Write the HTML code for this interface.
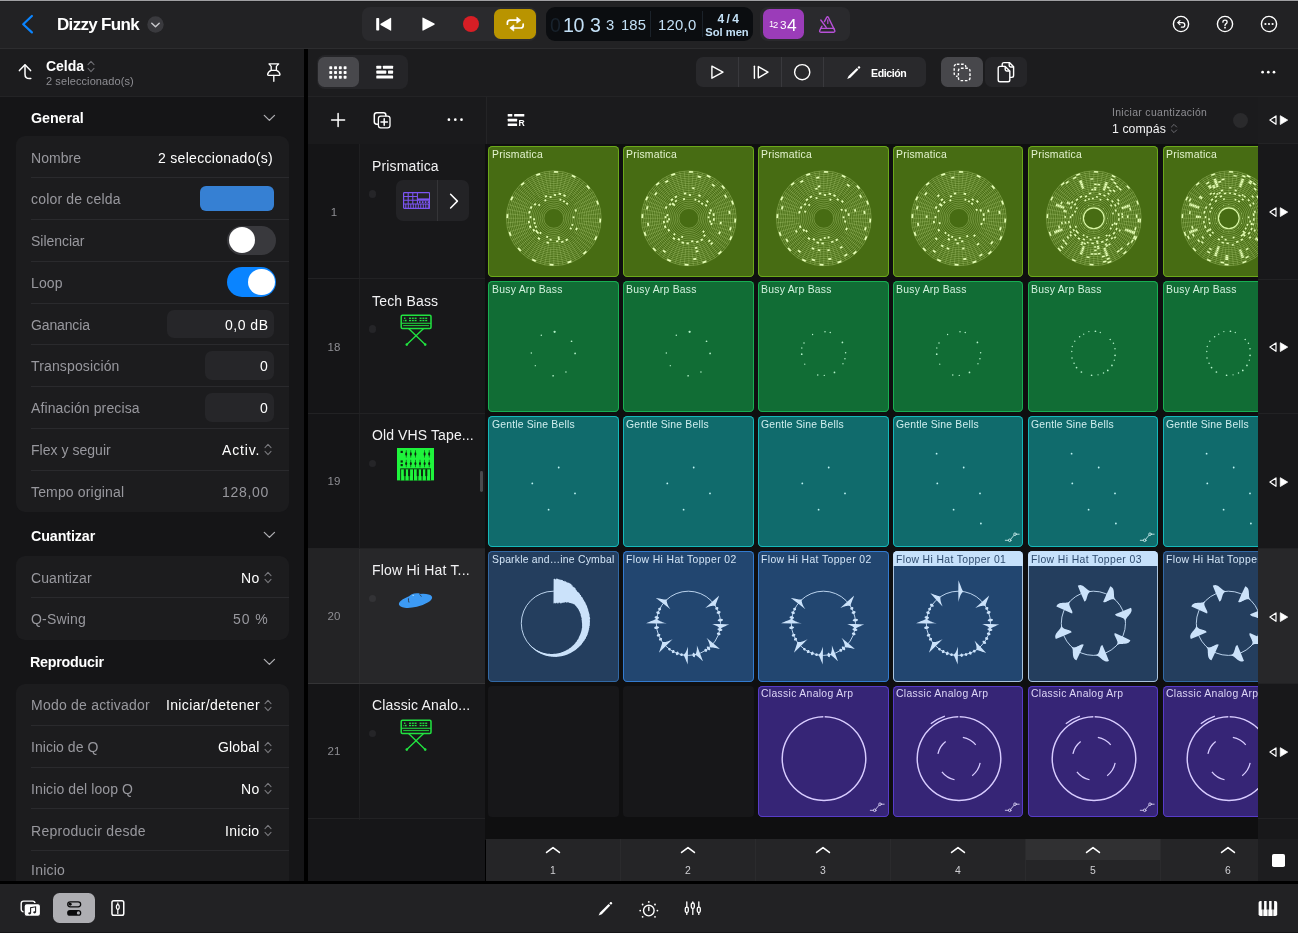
<!DOCTYPE html>
<html lang="es"><head><meta charset="utf-8"><title>Dizzy Funk</title>
<style>
html,body{margin:0;padding:0;background:#000;}
body{width:1298px;height:934px;overflow:hidden;font-family:"Liberation Sans",sans-serif;-webkit-font-smoothing:antialiased;}
#app{position:relative;width:1298px;height:934px;background:#000;overflow:hidden;}
#app div,#app span,#app svg,#app header,#app footer{position:absolute;display:block;box-sizing:border-box;}
.t{line-height:20px;height:20px;white-space:nowrap;will-change:transform;}
.cell{border-radius:4.5px;overflow:hidden;}
</style></head>
<body><div id="app">
<header class="topbar" style="left:0px;top:0px;width:1298px;height:48px;background:#222224;">
<div style="left:0px;top:0px;width:1298px;height:1px;background:#a0a0a3;"></div>
<div style="left:0px;top:1px;width:1298px;height:1px;background:#1d1d1f;"></div>
<svg style="left:20px;top:13px;" width="16" height="22" viewBox="0 0 16 22"><path d="M11.9 3 L3.2 11.2 L11.9 19.4" fill="none" stroke="#0a84ff" stroke-width="2.2" stroke-linecap="round" stroke-linejoin="round"/></svg>
<span class="t" style="top:14.8px;font-size:17px;color:#fff;font-weight:700;letter-spacing:-0.677px;left:57.3px;">Dizzy Funk</span>
<svg style="left:146.5px;top:15.7px;" width="17" height="17" viewBox="0 0 17 17"><circle cx="8.5" cy="8.5" r="8.2" fill="#3a3a3e"/><path d="M4.8 7.2 L8.5 10.7 L12.2 7.2" fill="none" stroke="#c8c8cc" stroke-width="1.5" stroke-linecap="round" stroke-linejoin="round"/></svg>
<div style="left:361.5px;top:7px;width:175.5px;height:34px;background:#2a2a2d;border-radius:8px;"></div>
<svg style="left:374px;top:15px;" width="20" height="18" viewBox="0 0 20 18"><rect x="2.2" y="3" width="3" height="12.6" rx="0.8" fill="#fff"/><path d="M17.2 3.4 L17.2 15.2 Q17.2 16 16.4 15.6 L6.6 9.9 Q6 9.3 6.6 8.7 L16.4 3 Q17.2 2.6 17.2 3.4Z" fill="#fff"/></svg>
<svg style="left:420px;top:15px;" width="18" height="18" viewBox="0 0 18 18"><path d="M2.4 3.2 Q2.4 2.2 3.3 2.7 L14.4 8.5 Q15.2 9.1 14.4 9.7 L3.3 15.6 Q2.4 16 2.4 15Z" fill="#fff"/></svg>
<div style="left:463.3px;top:16px;width:16.2px;height:16.2px;background:#d81e25;border-radius:50%;"></div>
<div style="left:494.2px;top:8.9px;width:42.2px;height:30.5px;background:#b99400;border-radius:6.5px;"></div>
<svg style="left:505px;top:14px;" width="22" height="20" viewBox="0 0 22 20"><g fill="none" stroke="#fff" stroke-width="1.7" stroke-linecap="round" stroke-linejoin="round"><path d="M2.4 10.2 V8.8 Q2.4 6.2 5 6.2 H12"/><path d="M18.2 10 V11.4 Q18.2 14 15.6 14 H8.6"/></g><path d="M11.8 3.1 L15.8 6.2 L11.8 9.3Z M8.8 10.9 L4.8 14 L8.8 17.1Z" fill="#fff" stroke="#fff" stroke-width="0.6" stroke-linejoin="round"/></svg>
<div style="left:545.5px;top:7.3px;width:207px;height:33.6px;background:#0b0d10;border-radius:9px;"></div>
<span class="t" style="top:14.8px;font-size:19.6px;color:#18222c;left:550.4px;">0</span>
<span class="t" style="top:14.8px;font-size:19.6px;color:#c3e0f6;letter-spacing:-0.4px;left:563.3px;">10</span>
<span class="t" style="top:14.8px;font-size:19.6px;color:#c3e0f6;left:589.8px;">3</span>
<span class="t" style="top:15.4px;font-size:14.8px;color:#c3e0f6;left:606.2px;">3</span>
<span class="t" style="top:15.4px;font-size:14.8px;color:#c3e0f6;letter-spacing:0.1px;left:621.3px;">185</span>
<div style="left:650px;top:11px;width:1px;height:26px;background:#1b222a;"></div>
<span class="t" style="top:15.4px;font-size:14.8px;color:#c3e0f6;letter-spacing:0.3px;left:658.4px;">120,0</span>
<div style="left:701.7px;top:11px;width:1px;height:26px;background:#1b222a;"></div>
<span class="t" style="top:8.5px;font-size:12px;color:#c3e0f6;font-weight:700;letter-spacing:-0.49px;left:577.65px;width:300px;text-align:center;">4 / 4</span>
<span class="t" style="top:22.4px;font-size:11.2px;color:#c3e0f6;font-weight:700;letter-spacing:-0.036px;left:577.38px;width:300px;text-align:center;">Sol men</span>
<div style="left:760px;top:7.3px;width:89.5px;height:33.6px;background:#2a2a2d;border-radius:8px;"></div>
<div style="left:762.7px;top:9px;width:41.6px;height:30.3px;background:#9b3cb9;border-radius:6.5px;"></div>
<span class="t" style="top:14.3px;font-size:9.2px;color:#fff;left:768.9px;">1</span>
<span class="t" style="top:14.5px;font-size:9.4px;color:#fff;left:773.2px;">2</span>
<span class="t" style="top:15.2px;font-size:11.8px;color:#fff;left:779.6px;">3</span>
<span class="t" style="top:15px;font-size:17.4px;color:#fff;left:787.4px;">4</span>
<svg style="left:817px;top:14px;" width="20" height="20" viewBox="0 0 20 20"><g fill="none" stroke="#b750d8" stroke-width="1.4" stroke-linejoin="round" stroke-linecap="round"><path d="M9.7 3.3 Q10.5 1.9 11.3 3.3 L17.7 16.4 Q18.3 18.2 16.6 18.2 H3.8 Q2.1 18.2 2.8 16.4 L4.9 12.2 M7.4 7.6 L9.7 3.3"/><path d="M3.6 14.4 H17"/><path d="M3.8 6 L9.2 13.4"/><path d="M10.8 5.8 V9.4" stroke-width="1.2"/></g></svg>
<svg style="left:1170.7px;top:14.3px;" width="20" height="20" viewBox="0 0 20 20"><circle cx="10" cy="10" r="7.6" fill="none" stroke="#fff" stroke-width="1.4"/><path d="M7.2 8.6 H11.4 Q13.8 8.6 13.8 10.9 Q13.8 13.2 11.4 13.2 H10.4" fill="none" stroke="#fff" stroke-width="1.3" stroke-linecap="round"/><path d="M8.9 6.6 L6.8 8.6 L8.9 10.6" fill="none" stroke="#fff" stroke-width="1.3" stroke-linecap="round" stroke-linejoin="round"/></svg>
<svg style="left:1214.6px;top:14.3px;" width="20" height="20" viewBox="0 0 20 20"><circle cx="10" cy="10" r="7.6" fill="none" stroke="#fff" stroke-width="1.4"/><path d="M7.9 8.2 Q7.9 6.2 10 6.2 Q12.1 6.2 12.1 8 Q12.1 9.2 10.9 9.9 Q10 10.4 10 11.5" fill="none" stroke="#fff" stroke-width="1.3" stroke-linecap="round"/><circle cx="10" cy="13.7" r="0.9" fill="#fff"/></svg>
<svg style="left:1258.6px;top:14.3px;" width="20" height="20" viewBox="0 0 20 20"><circle cx="10" cy="10" r="7.6" fill="none" stroke="#fff" stroke-width="1.4"/><circle cx="6.4" cy="10" r="1.1" fill="#fff"/><circle cx="10" cy="10" r="1.1" fill="#fff"/><circle cx="13.6" cy="10" r="1.1" fill="#fff"/></svg>
</header>
<div style="left:0;top:48px;width:1298px;height:1px;background:#2d2d2f;"></div>
<div class="insp-head" style="left:0px;top:49px;width:304px;height:47px;background:#1c1c1e;">
<svg style="left:16px;top:12px;" width="18" height="22" viewBox="0 0 18 22"><g fill="none" stroke="#fff" stroke-width="1.5" stroke-linecap="round" stroke-linejoin="round"><path d="M3.4 9.6 L9 3.8 L14.6 9.6"/><path d="M9 4.2 V13.2 Q9 17.6 13.4 17.6 H14.8"/></g></svg>
<span class="t" style="top:7.1px;font-size:14px;color:#fff;font-weight:700;letter-spacing:-0.031px;left:46px;">Celda</span>
<svg style="left:86.6px;top:10.6px;" width="8" height="13" viewBox="0 0 8 13"><path d="M1 4.6 L4 1.4 L7 4.6 M1 8.4 L4 11.6 L7 8.4" fill="none" stroke="#6c6c71" stroke-width="1.1" stroke-linecap="round" stroke-linejoin="round"/></svg>
<span class="t" style="top:22px;font-size:11px;color:#8e8e93;letter-spacing:0.093px;left:46px;">2 seleccionado(s)</span>
<svg style="left:264px;top:11px;" width="20" height="24" viewBox="0 0 20 24"><g fill="none" stroke="#fff" stroke-width="1.35" stroke-linecap="round" stroke-linejoin="round"><path d="M5 3.9 H14.7 L12.4 6.4 V10.3 Q15.7 11.5 16 14.6 Q16 15.3 15.3 15.3 H4.3 Q3.6 15.3 3.6 14.6 Q3.9 11.5 7.2 10.3 V6.4 Z"/><path d="M7.2 10.4 H12.4" stroke-width="1.1"/><path d="M9.8 15.5 V21.2"/></g></svg>
</div>
<div class="toolbar" style="left:308px;top:49px;width:990px;height:47px;background:#1c1c1e;">
<div style="left:8.5px;top:6.2px;width:91px;height:33.6px;background:#252528;border-radius:8px;"></div>
<div style="left:9.7px;top:8px;width:41.6px;height:30.3px;background:#48484c;border-radius:6.5px;"></div>
<svg style="left:21.4px;top:16.7px;" width="18" height="13" viewBox="0 0 18 13"><rect x="0.3" y="0.3" width="2.9" height="2.9" rx="0.7" fill="#fff"/><rect x="0.3" y="5.02" width="2.9" height="2.9" rx="0.7" fill="#fff"/><rect x="0.3" y="9.74" width="2.9" height="2.9" rx="0.7" fill="#fff"/><rect x="5.08" y="0.3" width="2.9" height="2.9" rx="0.7" fill="#fff"/><rect x="5.08" y="5.02" width="2.9" height="2.9" rx="0.7" fill="#fff"/><rect x="5.08" y="9.74" width="2.9" height="2.9" rx="0.7" fill="#fff"/><rect x="9.86" y="0.3" width="2.9" height="2.9" rx="0.7" fill="#fff"/><rect x="9.86" y="5.02" width="2.9" height="2.9" rx="0.7" fill="#fff"/><rect x="9.86" y="9.74" width="2.9" height="2.9" rx="0.7" fill="#fff"/><rect x="14.64" y="0.3" width="2.9" height="2.9" rx="0.7" fill="#fff"/><rect x="14.64" y="5.02" width="2.9" height="2.9" rx="0.7" fill="#fff"/><rect x="14.64" y="9.74" width="2.9" height="2.9" rx="0.7" fill="#fff"/></svg>
<svg style="left:68px;top:16px;" width="18" height="14" viewBox="0 0 18 14"><g fill="#fff"><rect x="0.3" y="0.7" width="5" height="3.1" rx="0.6"/><rect x="6.9" y="0.7" width="10.2" height="3.1" rx="0.6"/><rect x="0.3" y="5.6" width="10" height="3.1" rx="0.6"/><rect x="12" y="5.6" width="5.1" height="3.1" rx="0.6"/><rect x="0.3" y="10.4" width="16.8" height="3.1" rx="0.6"/></g></svg>
<div style="left:387.9px;top:8px;width:230.3px;height:30.4px;background:#29292c;border-radius:7px;"></div>
<div style="left:429.8px;top:8px;width:1.4px;height:30.4px;background:#39393d;"></div>
<div style="left:472.5px;top:8px;width:1.4px;height:30.4px;background:#39393d;"></div>
<div style="left:515.1px;top:8px;width:1.4px;height:30.4px;background:#39393d;"></div>
<svg style="left:400px;top:13px;" width="20" height="20" viewBox="0 0 20 20"><path d="M3.9 4.2 V16.2 L15 10.2Z" fill="none" stroke="#fff" stroke-width="1.4" stroke-linejoin="round" stroke-linecap="round"/></svg>
<svg style="left:442px;top:13px;" width="22" height="20" viewBox="0 0 22 20"><path d="M4.4 4.3 V16.2" fill="none" stroke="#fff" stroke-width="1.4" stroke-linejoin="round" stroke-linecap="round"/><path d="M8.3 4.6 V15.8 L18 10.2Z" fill="none" stroke="#fff" stroke-width="1.4" stroke-linejoin="round" stroke-linecap="round"/></svg>
<svg style="left:484px;top:13px;" width="20" height="20" viewBox="0 0 20 20"><circle cx="10.2" cy="10.2" r="7.6" fill="none" stroke="#fff" stroke-width="1.4" stroke-linejoin="round" stroke-linecap="round"/></svg>
<svg style="left:537px;top:14px;" width="18" height="18" viewBox="0 0 18 18"><path d="M2.2 16.1 L3.6 13 L11.8 5 L13.4 6.6 L5.3 14.7Z" fill="#fff"/><circle cx="14" cy="4.4" r="1.2" fill="#fff"/></svg>
<span class="t" style="top:13.5px;font-size:10.6px;color:#fff;font-weight:700;letter-spacing:-0.42px;left:562.6px;">Edición</span>
<div style="left:633.2px;top:8px;width:41.7px;height:30.3px;background:#47474b;border-radius:6.5px;"></div>
<div style="left:677px;top:8px;width:41.7px;height:30.3px;background:#252528;border-radius:6.5px;"></div>
<svg style="left:643px;top:12px;" width="22" height="22" viewBox="0 0 22 22"><g fill="none" stroke="#fff" stroke-width="1.4" stroke-dasharray="2.6 1.7"><rect x="3.2" y="3.2" width="11.6" height="12" rx="2.6"/></g><rect x="6.6" y="6.6" width="13" height="13.4" rx="2.8" fill="#47474b"/><g fill="none" stroke="#fff" stroke-width="1.4" stroke-dasharray="2.6 1.7"><rect x="7.4" y="7.2" width="11.6" height="12.4" rx="2.6"/></g></svg>
<svg style="left:687px;top:11px;" width="22" height="24" viewBox="0 0 22 24"><g fill="#252528" stroke="#fff" stroke-width="1.4" stroke-linejoin="round"><path d="M9 2.6 H14.4 L18.6 6.8 V15.6 Q18.6 17.4 16.8 17.4 H9 Q7.2 17.4 7.2 15.6 V4.4 Q7.2 2.6 9 2.6Z"/><path d="M14.2 2.8 V5.6 Q14.2 7 15.6 7 H18.4" fill="none"/><path d="M5 6.4 H10.2 L14.8 11 V20 Q14.8 21.8 13 21.8 H5 Q3.2 21.8 3.2 20 V8.2 Q3.2 6.4 5 6.4Z"/><path d="M10.2 6.6 V9.6 Q10.2 11 11.6 11 H14.6" fill="none"/></g></svg>
<svg style="left:951px;top:19px;" width="20" height="8" viewBox="0 0 20 8"><circle cx="3.6" cy="4.2" r="1.35" fill="#fff"/><circle cx="9.3" cy="4.2" r="1.35" fill="#fff"/><circle cx="15" cy="4.2" r="1.35" fill="#fff"/></svg>
</div>
<div style="left:0;top:96px;width:304px;height:1px;background:#232325;"></div>
<div style="left:308px;top:96px;width:990px;height:1px;background:#232325;"></div>
<div class="insp" style="left:0px;top:97px;width:304px;height:784px;background:#151517;overflow:hidden;">
<span class="t" style="top:11px;font-size:14.3px;color:#fff;font-weight:700;letter-spacing:-0.075px;left:30.5px;">General</span>
<svg style="left:262px;top:15.6px;" width="15" height="10" viewBox="0 0 15 10"><path d="M2.3 2.4 L7.4 7.4 L12.5 2.4" fill="none" stroke="#aeaeb2" stroke-width="1.3" stroke-linecap="round" stroke-linejoin="round"/></svg>
<div class="grp" style="left:15.5px;top:39px;width:273.5px;height:375.75px;background:#1c1c1e;border-radius:9px;">
<span class="t" style="top:11.68px;font-size:14px;color:#98989e;letter-spacing:0.061px;left:15.1px;">Nombre</span>
<span class="t" style="top:11.68px;font-size:14px;color:#fff;letter-spacing:0.31px;right:15.69px;">2 seleccionado(s)</span>
<div style="left:15.1px;top:41.25px;width:258.4px;height:1px;background:#2a2a2d;"></div>
<span class="t" style="top:53.43px;font-size:14px;color:#98989e;letter-spacing:0.179px;left:15.1px;">color de celda</span>
<div style="left:184.7px;top:50.05px;width:73.8px;height:25.2px;background:#3680d3;border-radius:6px;"></div>
<div style="left:15.1px;top:83px;width:258.4px;height:1px;background:#2a2a2d;"></div>
<span class="t" style="top:95.18px;font-size:14px;color:#98989e;letter-spacing:-0.025px;left:15.1px;">Silenciar</span>
<div style="left:211.9px;top:89.5px;width:48.5px;height:29.6px;background:#39393d;border-radius:15px;"></div>
<div style="left:213.2px;top:90.9px;width:26.6px;height:26.6px;background:#fff;border-radius:50%;"></div>
<div style="left:15.1px;top:124.75px;width:258.4px;height:1px;background:#2a2a2d;"></div>
<span class="t" style="top:136.93px;font-size:14px;color:#98989e;letter-spacing:0.115px;left:15.1px;">Loop</span>
<div style="left:211.9px;top:131.25px;width:48.5px;height:29.6px;background:#0a84ff;border-radius:15px;"></div>
<div style="left:232.5px;top:132.65px;width:26.6px;height:26.6px;background:#fff;border-radius:50%;"></div>
<div style="left:15.1px;top:166.5px;width:258.4px;height:1px;background:#2a2a2d;"></div>
<span class="t" style="top:178.68px;font-size:14px;color:#98989e;letter-spacing:-0.134px;left:15.1px;">Ganancia</span>
<div style="left:151.7px;top:173.6px;width:106.8px;height:28.6px;background:#262629;border-radius:7px;"></div>
<span class="t" style="top:178.68px;font-size:14px;color:#fff;letter-spacing:0.503px;right:20.9px;">0,0 dB</span>
<div style="left:15.1px;top:208.25px;width:258.4px;height:1px;background:#2a2a2d;"></div>
<span class="t" style="top:220.43px;font-size:14px;color:#98989e;letter-spacing:0.147px;left:15.1px;">Transposición</span>
<div style="left:189.5px;top:215.35px;width:69px;height:28.6px;background:#262629;border-radius:7px;"></div>
<span class="t" style="top:220.43px;font-size:14px;color:#fff;right:21.4px;">0</span>
<div style="left:15.1px;top:250px;width:258.4px;height:1px;background:#2a2a2d;"></div>
<span class="t" style="top:262.18px;font-size:14px;color:#98989e;letter-spacing:0.123px;left:15.1px;">Afinación precisa</span>
<div style="left:189.5px;top:257.1px;width:69px;height:28.6px;background:#262629;border-radius:7px;"></div>
<span class="t" style="top:262.18px;font-size:14px;color:#fff;right:21.4px;">0</span>
<div style="left:15.1px;top:291.75px;width:258.4px;height:1px;background:#2a2a2d;"></div>
<span class="t" style="top:303.93px;font-size:14px;color:#98989e;letter-spacing:0.028px;left:15.1px;">Flex y seguir</span>
<span class="t" style="top:303.93px;font-size:14px;color:#fff;letter-spacing:0.859px;right:28.94px;">Activ.</span>
<svg style="left:248.9px;top:307.43px;" width="8" height="13" viewBox="0 0 8 13"><path d="M1 4.6 L4 1.4 L7 4.6 M1 8.4 L4 11.6 L7 8.4" fill="none" stroke="#77777c" stroke-width="1.1" stroke-linecap="round" stroke-linejoin="round"/></svg>
<div style="left:15.1px;top:333.5px;width:258.4px;height:1px;background:#2a2a2d;"></div>
<span class="t" style="top:345.68px;font-size:14px;color:#98989e;letter-spacing:0.157px;left:15.1px;">Tempo original</span>
<span class="t" style="top:345.68px;font-size:14px;color:#98989e;letter-spacing:0.714px;right:20.29px;">128,00</span>
</div>
<span class="t" style="top:428.7px;font-size:14.3px;color:#fff;font-weight:700;letter-spacing:-0.118px;left:30.5px;">Cuantizar</span>
<svg style="left:262px;top:433.4px;" width="15" height="10" viewBox="0 0 15 10"><path d="M2.3 2.4 L7.4 7.4 L12.5 2.4" fill="none" stroke="#aeaeb2" stroke-width="1.3" stroke-linecap="round" stroke-linejoin="round"/></svg>
<div class="grp" style="left:15.5px;top:459px;width:273.5px;height:83.5px;background:#1c1c1e;border-radius:9px;">
<span class="t" style="top:11.67px;font-size:14px;color:#98989e;letter-spacing:0.085px;left:15.1px;">Cuantizar</span>
<span class="t" style="top:11.67px;font-size:14px;color:#fff;letter-spacing:0.494px;right:29.31px;">No</span>
<svg style="left:248.9px;top:15.17px;" width="8" height="13" viewBox="0 0 8 13"><path d="M1 4.6 L4 1.4 L7 4.6 M1 8.4 L4 11.6 L7 8.4" fill="none" stroke="#77777c" stroke-width="1.1" stroke-linecap="round" stroke-linejoin="round"/></svg>
<div style="left:15.1px;top:41.25px;width:258.4px;height:1px;background:#2a2a2d;"></div>
<span class="t" style="top:53.42px;font-size:14px;color:#98989e;letter-spacing:0.169px;left:15.1px;">Q-Swing</span>
<span class="t" style="top:53.42px;font-size:14px;color:#98989e;letter-spacing:0.893px;right:20.11px;">50 %</span>
</div>
<span class="t" style="top:555.2px;font-size:14.3px;color:#fff;font-weight:700;letter-spacing:-0.252px;left:30.2px;">Reproducir</span>
<svg style="left:262px;top:560.4px;" width="15" height="10" viewBox="0 0 15 10"><path d="M2.3 2.4 L7.4 7.4 L12.5 2.4" fill="none" stroke="#aeaeb2" stroke-width="1.3" stroke-linecap="round" stroke-linejoin="round"/></svg>
<div class="grp" style="left:15.5px;top:586.6px;width:273.5px;height:197.4px;background:#1c1c1e;border-radius:9px;border-bottom-left-radius:0;border-bottom-right-radius:0;">
<span class="t" style="top:11.67px;font-size:14px;color:#98989e;letter-spacing:0.22px;left:15.1px;">Modo de activador</span>
<span class="t" style="top:11.67px;font-size:14px;color:#fff;letter-spacing:0.349px;right:29.45px;">Iniciar/detener</span>
<svg style="left:248.9px;top:15.17px;" width="8" height="13" viewBox="0 0 8 13"><path d="M1 4.6 L4 1.4 L7 4.6 M1 8.4 L4 11.6 L7 8.4" fill="none" stroke="#77777c" stroke-width="1.1" stroke-linecap="round" stroke-linejoin="round"/></svg>
<div style="left:15.1px;top:41.25px;width:258.4px;height:1px;background:#2a2a2d;"></div>
<span class="t" style="top:53.42px;font-size:14px;color:#98989e;letter-spacing:0.036px;left:15.1px;">Inicio de Q</span>
<span class="t" style="top:53.42px;font-size:14px;color:#fff;letter-spacing:0.186px;right:29.61px;">Global</span>
<svg style="left:248.9px;top:56.92px;" width="8" height="13" viewBox="0 0 8 13"><path d="M1 4.6 L4 1.4 L7 4.6 M1 8.4 L4 11.6 L7 8.4" fill="none" stroke="#77777c" stroke-width="1.1" stroke-linecap="round" stroke-linejoin="round"/></svg>
<div style="left:15.1px;top:83px;width:258.4px;height:1px;background:#2a2a2d;"></div>
<span class="t" style="top:95.17px;font-size:14px;color:#98989e;letter-spacing:0.1px;left:15.1px;">Inicio del loop Q</span>
<span class="t" style="top:95.17px;font-size:14px;color:#fff;letter-spacing:0.494px;right:29.31px;">No</span>
<svg style="left:248.9px;top:98.67px;" width="8" height="13" viewBox="0 0 8 13"><path d="M1 4.6 L4 1.4 L7 4.6 M1 8.4 L4 11.6 L7 8.4" fill="none" stroke="#77777c" stroke-width="1.1" stroke-linecap="round" stroke-linejoin="round"/></svg>
<div style="left:15.1px;top:124.75px;width:258.4px;height:1px;background:#2a2a2d;"></div>
<span class="t" style="top:136.92px;font-size:14px;color:#98989e;letter-spacing:0.272px;left:15.1px;">Reproducir desde</span>
<span class="t" style="top:136.92px;font-size:14px;color:#fff;letter-spacing:0.283px;right:29.52px;">Inicio</span>
<svg style="left:248.9px;top:140.42px;" width="8" height="13" viewBox="0 0 8 13"><path d="M1 4.6 L4 1.4 L7 4.6 M1 8.4 L4 11.6 L7 8.4" fill="none" stroke="#77777c" stroke-width="1.1" stroke-linecap="round" stroke-linejoin="round"/></svg>
<div style="left:15.1px;top:166.5px;width:258.4px;height:1px;background:#2a2a2d;"></div>
<span class="t" style="top:176.07px;font-size:14px;color:#98989e;letter-spacing:0.242px;left:15.1px;">Inicio</span>
<div style="left:15.1px;top:208.25px;width:258.4px;height:1px;background:#2a2a2d;"></div>
<span class="t" style="top:220.42px;font-size:14px;color:#98989e;left:15.1px;"></span>
</div>
</div>
<div class="gridhead" style="left:308px;top:97px;width:990px;height:47px;background:#1b1b1d;">
<div style="left:0px;top:0px;width:178px;height:47px;background:#1a1a1c;"></div>
<div style="left:177.6px;top:0px;width:1px;height:47px;background:#242426;"></div>
<div style="left:0px;top:46.6px;width:950px;height:1.4px;background:#121213;"></div>
<svg style="left:22px;top:15px;" width="16" height="16" viewBox="0 0 16 16"><path d="M8.1 1.6 V14.6 M1.6 8.1 H14.6" fill="none" stroke="#fff" stroke-width="1.5" stroke-linecap="round" stroke-linejoin="round"/></svg>
<svg style="left:64px;top:13px;" width="20" height="20" viewBox="0 0 20 20"><rect x="2.3" y="2.8" width="11.6" height="11.4" rx="2.4" fill="none" stroke="#fff" stroke-width="1.5" stroke-linecap="round" stroke-linejoin="round" stroke-width="1.3"/><rect x="6.4" y="6.2" width="11.6" height="11.6" rx="2.4" fill="#1a1a1c" stroke="#fff" stroke-width="1.3"/><path d="M12.2 8.8 V15.2 M9 12 H15.4" fill="none" stroke="#fff" stroke-width="1.5" stroke-linecap="round" stroke-linejoin="round" stroke-width="1.3"/></svg>
<svg style="left:137px;top:19px;" width="20" height="8" viewBox="0 0 20 8"><circle cx="3.9" cy="3.7" r="1.35" fill="#fff"/><circle cx="10.3" cy="3.7" r="1.35" fill="#fff"/><circle cx="16.5" cy="3.7" r="1.35" fill="#fff"/></svg>
<svg style="left:199px;top:16px;will-change:transform;" width="20" height="14" viewBox="0 0 20 14"><g fill="#fff"><rect x="0.7" y="1" width="4.6" height="2.5" rx="0.5"/><rect x="7.1" y="1" width="10.2" height="2.5" rx="0.5"/><rect x="0.7" y="5.8" width="9.4" height="2.6" rx="0.5"/><rect x="0.7" y="10.4" width="9.4" height="2.6" rx="0.5"/></g><text x="11.4" y="13.1" font-family="Liberation Sans, sans-serif" font-weight="700" font-size="8.6" fill="#fff">R</text></svg>
<span class="t" style="top:5.5px;font-size:10.4px;color:#8e8e93;letter-spacing:0.343px;left:804.3px;">Iniciar cuantización</span>
<span class="t" style="top:21.5px;font-size:12.3px;color:#f2f2f4;letter-spacing:0.067px;left:804.3px;">1 compás</span>
<svg style="left:861.6px;top:25.6px;" width="8" height="11" viewBox="0 0 8 11"><path d="M1.4 4 L4 1.4 L6.6 4 M1.4 7 L4 9.6 L6.6 7" fill="none" stroke="#6c6c71" stroke-width="1" stroke-linecap="round" stroke-linejoin="round"/></svg>
<div style="left:924.9px;top:15.6px;width:15.2px;height:15.2px;background:#2a2a2c;border-radius:50%;"></div>
</div>
<div class="tracks" style="left:308px;top:144px;width:177px;height:737px;background:#18181a;">
<div style="left:0px;top:0px;width:51.5px;height:675px;background:#151517;"></div>
<div style="left:0px;top:675px;width:177px;height:62px;background:#161618;"></div>
<div style="left:51.3px;top:0px;width:1px;height:676px;background:#1f1f21;"></div>
<div class="track" style="left:0px;top:0px;width:177px;height:134.94px;">
<div style="left:0px;top:134.2px;width:177px;height:1px;background:#222224;"></div>
<span class="t" style="top:57.6px;font-size:11.5px;color:#8e8e93;left:-124px;width:300px;text-align:center;">1</span>
<span class="t" style="top:11.8px;font-size:14px;color:#f2f2f4;letter-spacing:0.138px;left:64.2px;">Prismatica</span>
<div style="left:60.8px;top:46.2px;width:7.4px;height:7.4px;background:#252528;border-radius:50%;"></div>
<div style="left:87.8px;top:36px;width:73px;height:41.3px;background:#232326;border-radius:7px;"></div>
<div style="left:129.2px;top:36px;width:1px;height:41.3px;background:#353538;"></div>
<svg style="left:95px;top:47.6px;" width="27.2" height="17" viewBox="0 0 27.2 17"><rect x="0.6" y="0.6" width="26" height="15.8" rx="0.8" fill="none" stroke="#7c55f3" stroke-width="1.2"/><g stroke="#7c55f3" stroke-width="1.05" fill="none"><path d="M0.6 4.4 H14.2 M0.6 8.2 H27 M0.6 12 H27 M5.2 0.6 V12 M9.8 0.6 V12 M14.4 0.6 V12"/><path d="M14.4 7.2 H27" stroke-width="1.6"/></g><g fill="#7c55f3"><rect x="2.3" y="12" width="1" height="4.4"/><rect x="4.8" y="12" width="1" height="4.4"/><rect x="7.3" y="12" width="1" height="4.4"/><rect x="9.8" y="12" width="1" height="4.4"/><rect x="12.3" y="12" width="1" height="4.4"/><rect x="14.8" y="12" width="1" height="4.4"/><rect x="17.3" y="12" width="1" height="4.4"/><rect x="19.8" y="12" width="1" height="4.4"/><rect x="22.3" y="12" width="1" height="4.4"/><rect x="24.8" y="12" width="1" height="4.4"/><rect x="16" y="9.2" width="1.6" height="1.8"/><rect x="18.9" y="9.2" width="1.6" height="1.8"/><rect x="21.8" y="9.2" width="1.6" height="1.8"/><rect x="24.7" y="9.2" width="1.6" height="1.8"/></g></svg>
<svg style="left:138px;top:47px;" width="16" height="20" viewBox="0 0 16 20"><path d="M4.6 3.2 L11.4 10.1 L4.6 17" fill="none" stroke="#fff" stroke-width="1.5" stroke-linecap="round" stroke-linejoin="round"/></svg>
</div>
<div class="track" style="left:0px;top:134.94px;width:177px;height:134.94px;">
<div style="left:0px;top:134.2px;width:177px;height:1px;background:#222224;"></div>
<span class="t" style="top:57.6px;font-size:11.5px;color:#8e8e93;left:-124px;width:300px;text-align:center;">18</span>
<span class="t" style="top:11.58px;font-size:14px;color:#f2f2f4;letter-spacing:0.188px;left:64.2px;">Tech Bass</span>
<div style="left:60.8px;top:46.2px;width:7.4px;height:7.4px;background:#252528;border-radius:50%;"></div>
<svg style="left:91.7px;top:35.4px;" width="33" height="33" viewBox="0 0 33 33"><g fill="none" stroke="#21e340" stroke-width="1.5" stroke-linecap="round"><rect x="1.2" y="1.2" width="29.8" height="13.2" rx="1.2"/><path d="M1.6 9.2 H30.6" stroke-width="1.1"/><path d="M3.6 11.6 H28.6" stroke-width="0.9"/><path d="M8.6 14.6 L25.2 30.4 M23.6 14.6 L6.8 30.4" stroke-width="1.35"/></g><g fill="#21e340"><circle cx="6.8" cy="30.6" r="1.3"/><circle cx="25.2" cy="30.6" r="1.3"/><rect x="4" y="3.6" width="1.4" height="1.3"/><rect x="5" y="5.8" width="1.6" height="1.5"/><rect x="3.4" y="6.2" width="1" height="1"/><rect x="9" y="3.6" width="2" height="1.3"/><rect x="9" y="5.9" width="2" height="1.3"/><rect x="11.8" y="3.6" width="2" height="1.3"/><rect x="11.8" y="5.9" width="2" height="1.3"/><rect x="14.6" y="3.6" width="2" height="1.3"/><rect x="14.6" y="5.9" width="2" height="1.3"/><rect x="19.6" y="3.6" width="2" height="1.3"/><rect x="19.6" y="5.9" width="2" height="1.3"/><rect x="22.4" y="3.6" width="2" height="1.3"/><rect x="22.4" y="5.9" width="2" height="1.3"/><rect x="25.2" y="3.6" width="2" height="1.3"/><rect x="25.2" y="5.9" width="2" height="1.3"/></g></svg>
</div>
<div class="track" style="left:0px;top:269.88px;width:177px;height:134.94px;">
<div style="left:0px;top:134.2px;width:177px;height:1px;background:#222224;"></div>
<span class="t" style="top:57.6px;font-size:11.5px;color:#8e8e93;left:-124px;width:300px;text-align:center;">19</span>
<span class="t" style="top:11.36px;font-size:14px;color:#f2f2f4;letter-spacing:0.111px;left:64.2px;">Old VHS Tape...</span>
<div style="left:60.8px;top:46.2px;width:7.4px;height:7.4px;background:#252528;border-radius:50%;"></div>
<svg style="left:89px;top:34.4px;" width="37" height="32.4" viewBox="0 0 37 32.4"><rect x="0" y="0" width="37" height="32.4" fill="#1ff43c"/><rect x="3.6" y="2.8000000000000003" width="2.2" height="2.2" fill="#0c2a10"/><rect x="8.85" y="2.2" width="0.7" height="7.4" fill="#0c2a10" opacity="0.8"/><ellipse cx="9.2" cy="6.0" rx="1" ry="1.7" fill="#0c2a10"/><rect x="13.450000000000001" y="2.2" width="0.7" height="7.4" fill="#0c2a10" opacity="0.8"/><ellipse cx="13.8" cy="6.0" rx="1" ry="1.7" fill="#0c2a10"/><rect x="18.049999999999997" y="2.2" width="0.7" height="7.4" fill="#0c2a10" opacity="0.8"/><ellipse cx="18.4" cy="6.0" rx="1" ry="1.7" fill="#0c2a10"/><rect x="27.25" y="2.2" width="0.7" height="7.4" fill="#0c2a10" opacity="0.8"/><ellipse cx="27.6" cy="6.0" rx="1" ry="1.7" fill="#0c2a10"/><rect x="31.85" y="2.2" width="0.7" height="7.4" fill="#0c2a10" opacity="0.8"/><ellipse cx="32.2" cy="6.0" rx="1" ry="1.7" fill="#0c2a10"/><rect x="3.6" y="12.4" width="2.2" height="2.2" fill="#0c2a10"/><rect x="3.6" y="16.0" width="2.2" height="2.2" fill="#0c2a10"/><rect x="8.85" y="11.8" width="0.7" height="7.4" fill="#0c2a10" opacity="0.8"/><ellipse cx="9.2" cy="15.600000000000001" rx="1" ry="1.7" fill="#0c2a10"/><rect x="13.450000000000001" y="11.8" width="0.7" height="7.4" fill="#0c2a10" opacity="0.8"/><ellipse cx="13.8" cy="15.600000000000001" rx="1" ry="1.7" fill="#0c2a10"/><rect x="18.049999999999997" y="11.8" width="0.7" height="7.4" fill="#0c2a10" opacity="0.8"/><ellipse cx="18.4" cy="15.600000000000001" rx="1" ry="1.7" fill="#0c2a10"/><rect x="22.65" y="11.8" width="0.7" height="7.4" fill="#0c2a10" opacity="0.8"/><ellipse cx="23" cy="15.600000000000001" rx="1" ry="1.7" fill="#0c2a10"/><rect x="27.25" y="11.8" width="0.7" height="7.4" fill="#0c2a10" opacity="0.8"/><ellipse cx="27.6" cy="15.600000000000001" rx="1" ry="1.7" fill="#0c2a10"/><rect x="31.85" y="11.8" width="0.7" height="7.4" fill="#0c2a10" opacity="0.8"/><ellipse cx="32.2" cy="15.600000000000001" rx="1" ry="1.7" fill="#0c2a10"/><rect x="3.2" y="20.4" width="30.8" height="12" fill="#0c2a10"/><rect x="4.1" y="21.3" width="3.3" height="11.1" fill="#1ff43c"/><rect x="8.4" y="21.3" width="3.3" height="11.1" fill="#1ff43c"/><rect x="12.7" y="21.3" width="3.3" height="11.1" fill="#1ff43c"/><rect x="17" y="21.3" width="3.3" height="11.1" fill="#1ff43c"/><rect x="21.3" y="21.3" width="3.3" height="11.1" fill="#1ff43c"/><rect x="25.6" y="21.3" width="3.3" height="11.1" fill="#1ff43c"/><rect x="29.9" y="21.3" width="3.3" height="11.1" fill="#1ff43c"/><rect x="6.8" y="21.3" width="2" height="6.8" fill="#0c2a10"/><rect x="11.1" y="21.3" width="2" height="6.8" fill="#0c2a10"/><rect x="19.7" y="21.3" width="2" height="6.8" fill="#0c2a10"/><rect x="24" y="21.3" width="2" height="6.8" fill="#0c2a10"/><rect x="28.3" y="21.3" width="2" height="6.8" fill="#0c2a10"/></svg>
</div>
<div class="track" style="left:0px;top:404.82px;width:177px;height:134.94px;background:#272729;">
<div style="left:0px;top:0px;width:51.5px;height:134.94px;background:#232325;"></div>
<div style="left:51.3px;top:0px;width:1px;height:134.94px;background:#2c2c2e;"></div>
<div style="left:0px;top:134.2px;width:177px;height:1px;background:#343436;"></div>
<span class="t" style="top:57.6px;font-size:11.5px;color:#8e8e93;left:-124px;width:300px;text-align:center;">20</span>
<span class="t" style="top:11.14px;font-size:14px;color:#f2f2f4;letter-spacing:0.203px;left:64.2px;">Flow Hi Hat T...</span>
<div style="left:60.8px;top:46.2px;width:7.4px;height:7.4px;background:#333336;border-radius:50%;"></div>
<svg style="left:88px;top:38px;" width="40" height="28" viewBox="0 0 40 28"><g transform="rotate(-13 19.5 13.8)"><ellipse cx="19.5" cy="13.8" rx="17" ry="6.1" fill="#3c9af4"/><ellipse cx="19.8" cy="9.4" rx="6.4" ry="3" fill="#3c9af4"/><path d="M13.2 9.8 Q12.4 12.4 12.8 14 M24.8 8.2 Q26 9.8 26.2 11" stroke="#252527" stroke-width="0.7" fill="none"/><circle cx="18.4" cy="8" r="0.55" fill="#dff"/></g></svg>
</div>
<div class="track" style="left:0px;top:539.76px;width:177px;height:134.94px;">
<div style="left:0px;top:134.2px;width:177px;height:1px;background:#222224;"></div>
<span class="t" style="top:57.6px;font-size:11.5px;color:#8e8e93;left:-124px;width:300px;text-align:center;">21</span>
<span class="t" style="top:10.92px;font-size:14px;color:#f2f2f4;letter-spacing:0.165px;left:64.2px;">Classic Analo...</span>
<div style="left:60.8px;top:46.2px;width:7.4px;height:7.4px;background:#252528;border-radius:50%;"></div>
<svg style="left:91.7px;top:35.4px;" width="33" height="33" viewBox="0 0 33 33"><g fill="none" stroke="#21e340" stroke-width="1.5" stroke-linecap="round"><rect x="1.2" y="1.2" width="29.8" height="13.2" rx="1.2"/><path d="M1.6 9.2 H30.6" stroke-width="1.1"/><path d="M3.6 11.6 H28.6" stroke-width="0.9"/><path d="M8.6 14.6 L25.2 30.4 M23.6 14.6 L6.8 30.4" stroke-width="1.35"/></g><g fill="#21e340"><circle cx="6.8" cy="30.6" r="1.3"/><circle cx="25.2" cy="30.6" r="1.3"/><rect x="4" y="3.6" width="1.4" height="1.3"/><rect x="5" y="5.8" width="1.6" height="1.5"/><rect x="3.4" y="6.2" width="1" height="1"/><rect x="9" y="3.6" width="2" height="1.3"/><rect x="9" y="5.9" width="2" height="1.3"/><rect x="11.8" y="3.6" width="2" height="1.3"/><rect x="11.8" y="5.9" width="2" height="1.3"/><rect x="14.6" y="3.6" width="2" height="1.3"/><rect x="14.6" y="5.9" width="2" height="1.3"/><rect x="19.6" y="3.6" width="2" height="1.3"/><rect x="19.6" y="5.9" width="2" height="1.3"/><rect x="22.4" y="3.6" width="2" height="1.3"/><rect x="22.4" y="5.9" width="2" height="1.3"/><rect x="25.2" y="3.6" width="2" height="1.3"/><rect x="25.2" y="5.9" width="2" height="1.3"/></g></svg>
</div>
<div style="left:172.2px;top:327.3px;width:2.7px;height:21px;background:#4a4a4d;border-radius:1.4px;"></div>
</div>
<div class="cells" style="left:485px;top:144px;width:773px;height:696px;background:#0f0f10;overflow:hidden;">
<div class="cell" style="left:3.15px;top:2px;width:130.5px;height:130.8px;background:#476c13;box-shadow:inset 0 0 0 1px #6ba81a;">
<svg style="left:0;top:0" width="130.5" height="130.8" viewBox="0 0 130.5 130.8"><g fill="none" stroke="#d4f09a"><g stroke-opacity="0.4" stroke-width="0.8"><circle cx="65.8" cy="72.3" r="10"/><circle cx="65.8" cy="72.3" r="11.78"/><circle cx="65.8" cy="72.3" r="13.56"/><circle cx="65.8" cy="72.3" r="15.34"/><circle cx="65.8" cy="72.3" r="17.12"/><circle cx="65.8" cy="72.3" r="18.9"/><circle cx="65.8" cy="72.3" r="20.68"/><circle cx="65.8" cy="72.3" r="22.46"/><circle cx="65.8" cy="72.3" r="24.24"/><circle cx="65.8" cy="72.3" r="26.02"/><circle cx="65.8" cy="72.3" r="27.8"/><circle cx="65.8" cy="72.3" r="29.58"/><circle cx="65.8" cy="72.3" r="31.36"/><circle cx="65.8" cy="72.3" r="33.14"/><circle cx="65.8" cy="72.3" r="34.92"/><circle cx="65.8" cy="72.3" r="36.7"/><circle cx="65.8" cy="72.3" r="38.48"/><circle cx="65.8" cy="72.3" r="40.26"/><circle cx="65.8" cy="72.3" r="42.04"/><circle cx="65.8" cy="72.3" r="43.82"/><circle cx="65.8" cy="72.3" r="45.6"/><circle cx="65.8" cy="72.3" r="47.38"/></g><path stroke-opacity="0.33" stroke-width="0.65" d="M65.8 48.1L65.8 24.9M68.7 42.9L70.4 25.1M70.5 48.5L75 25.8M74.4 44L79.6 27M75.1 49.9L83.9 28.5M79.7 46.2L88.1 30.5M79.3 52.1L92.1 32.9M84.6 49.4L95.9 35.7M82.9 55.2L99.3 38.8M88.7 53.5L102.4 42.2M86 58.8L105.2 46M91.9 58.4L107.6 50M88.2 63L109.6 54.2M94.1 63.7L111.1 58.5M89.6 67.6L112.3 63.1M95.2 69.4L113 67.7M90 72.3L113.2 72.3M95.2 75.2L113 76.9M89.6 77L112.3 81.5M94.1 80.9L111.1 86.1M88.2 81.6L109.6 90.4M91.9 86.2L107.6 94.6M86 85.8L105.2 98.6M88.7 91.1L102.4 102.4M82.9 89.4L99.3 105.8M84.6 95.2L95.9 108.9M79.3 92.5L92.1 111.7M79.7 98.4L88.1 114.1M75.1 94.7L83.9 116.1M74.4 100.6L79.6 117.6M70.5 96.1L75 118.8M68.7 101.7L70.4 119.5M65.8 96.5L65.8 119.7M62.9 101.7L61.2 119.5M61.1 96.1L56.6 118.8M57.2 100.6L52 117.6M56.5 94.7L47.7 116.1M51.9 98.4L43.5 114.1M52.3 92.5L39.5 111.7M47 95.2L35.7 108.9M48.7 89.4L32.3 105.8M42.9 91.1L29.2 102.4M45.6 85.8L26.4 98.6M39.7 86.2L24 94.6M43.4 81.6L22 90.4M37.5 80.9L20.5 86.1M42 77L19.3 81.5M36.4 75.2L18.6 76.9M41.6 72.3L18.4 72.3M36.4 69.4L18.6 67.7M42 67.6L19.3 63.1M37.5 63.7L20.5 58.5M43.4 63L22 54.2M39.7 58.4L24 50M45.6 58.8L26.4 46M42.9 53.5L29.2 42.2M48.7 55.2L32.3 38.8M47 49.4L35.7 35.7M52.3 52.1L39.5 32.9M51.9 46.2L43.5 30.5M56.5 49.9L47.7 28.5M57.2 44L52 27M61.1 48.5L56.6 25.8M62.9 42.9L61.2 25.1"/></g><path d="M66.1 25.8L70 26M83.9 29.5L87.4 31.1M98.9 39.7L101.5 42.6M108.9 54.8L110.2 58.5M112.3 72.6L112.1 76.5M108.6 90.4L107 93.9M98.4 105.4L95.5 108M83.3 115.4L79.6 116.7M65.5 118.8L61.6 118.6M47.7 115.1L44.2 113.5M32.7 104.9L30.1 102M22.7 89.8L21.4 86.1M19.3 72L19.5 68.1M23 54.2L24.6 50.7M33.2 39.2L36.1 36.6M48.3 29.2L52 27.9M65.8 49L68 49.1M70.7 47.7L73.1 48.2M71.6 53.4L73.3 54M75.5 49.1L77.6 50.1M75.2 54.9L76.8 55.8M78.4 57L79.8 58.3M87.4 63.4L88.1 65.5M85.5 70.4L85.6 72.3M84.7 78.1L84.1 79.8M89 82L88 84.1M83.2 81.7L82.3 83.3M79.7 93.2L77.7 94.4M75.4 95.5L73.1 96.3M71.5 91.2L69.7 91.7M72 93L70 93.4M70.3 95.2L68.1 95.5M63.6 93.8L61.6 93.5M60.9 96.9L58.5 96.4M60 91.2L58.3 90.6M51.8 93.2L49.9 91.8M53.2 87.6L51.8 86.3M50.5 87.5L49.2 86M49.1 86L47.9 84.3M46.4 85.2L45.2 83.3M48.3 81.6L47.5 79.9M42.6 81.9L41.8 79.6M46.9 78L46.4 76.2M41.1 77.2L40.8 74.8M46.1 74.2L46 72.3M42.5 72.3L42.6 70.1M41.2 67.4L41.7 65M42.6 62.6L43.6 60.5M46.4 59.3L47.7 57.5M50.5 59.7L51.8 58.3M56.5 54.8L58.2 54M56.9 50.7L59 50M61.6 51.1L63.6 50.8" fill="none" stroke="#e6ffb6" stroke-width="1.75"/></svg>
<span class="t" style="top:-1.3px;font-size:10.4px;color:#e4f3cf;letter-spacing:0.244px;left:3.4px;">Prismatica</span>
</div>
<div class="cell" style="left:3.15px;top:136.94px;width:130.5px;height:130.8px;background:#116d35;box-shadow:inset 0 0 0 1px #18ae52;">
<svg style="left:0;top:0" width="130.5" height="130.8" viewBox="0 0 130.5 130.8"><g fill="#b4f2ca"><circle cx="66.63" cy="50.79" r="1.15"/><circle cx="83.54" cy="60.23" r="0.85"/><circle cx="87.12" cy="72.4" r="0.85"/><circle cx="77.96" cy="90.88" r="0.75"/><circle cx="65.11" cy="94.73" r="0.85"/><circle cx="47.3" cy="84.68" r="0.65"/><circle cx="43.33" cy="72.01" r="0.75"/><circle cx="53.3" cy="54.31" r="0.75"/></g></svg>
<span class="t" style="top:-1.3px;font-size:10.4px;color:#d2f1dd;letter-spacing:0.243px;left:3.4px;">Busy Arp Bass</span>
</div>
<div class="cell" style="left:3.15px;top:271.88px;width:130.5px;height:130.8px;background:#106b6c;box-shadow:inset 0 0 0 1px #15b8b9;">
<svg style="left:0;top:0" width="130.5" height="130.8" viewBox="0 0 130.5 130.8"><g fill="#bdf3f3"><circle cx="70.7" cy="51.5" r="0.9"/><circle cx="44.3" cy="67.4" r="0.9"/><circle cx="87" cy="77.4" r="0.9"/><circle cx="60.6" cy="93.7" r="0.9"/></g></svg>
<span class="t" style="top:-1.3px;font-size:10.4px;color:#cfeeee;letter-spacing:0.18px;left:3.4px;">Gentle Sine Bells</span>
</div>
<div class="cell" style="left:138.09px;top:2px;width:130.5px;height:130.8px;background:#476c13;box-shadow:inset 0 0 0 1px #6ba81a;">
<svg style="left:0;top:0" width="130.5" height="130.8" viewBox="0 0 130.5 130.8"><g fill="none" stroke="#d4f09a"><g stroke-opacity="0.4" stroke-width="0.8"><circle cx="65.8" cy="72.3" r="10"/><circle cx="65.8" cy="72.3" r="11.78"/><circle cx="65.8" cy="72.3" r="13.56"/><circle cx="65.8" cy="72.3" r="15.34"/><circle cx="65.8" cy="72.3" r="17.12"/><circle cx="65.8" cy="72.3" r="18.9"/><circle cx="65.8" cy="72.3" r="20.68"/><circle cx="65.8" cy="72.3" r="22.46"/><circle cx="65.8" cy="72.3" r="24.24"/><circle cx="65.8" cy="72.3" r="26.02"/><circle cx="65.8" cy="72.3" r="27.8"/><circle cx="65.8" cy="72.3" r="29.58"/><circle cx="65.8" cy="72.3" r="31.36"/><circle cx="65.8" cy="72.3" r="33.14"/><circle cx="65.8" cy="72.3" r="34.92"/><circle cx="65.8" cy="72.3" r="36.7"/><circle cx="65.8" cy="72.3" r="38.48"/><circle cx="65.8" cy="72.3" r="40.26"/><circle cx="65.8" cy="72.3" r="42.04"/><circle cx="65.8" cy="72.3" r="43.82"/><circle cx="65.8" cy="72.3" r="45.6"/><circle cx="65.8" cy="72.3" r="47.38"/></g><path stroke-opacity="0.33" stroke-width="0.65" d="M65.8 48.1L65.8 24.9M68.7 42.9L70.4 25.1M70.5 48.5L75 25.8M74.4 44L79.6 27M75.1 49.9L83.9 28.5M79.7 46.2L88.1 30.5M79.3 52.1L92.1 32.9M84.6 49.4L95.9 35.7M82.9 55.2L99.3 38.8M88.7 53.5L102.4 42.2M86 58.8L105.2 46M91.9 58.4L107.6 50M88.2 63L109.6 54.2M94.1 63.7L111.1 58.5M89.6 67.6L112.3 63.1M95.2 69.4L113 67.7M90 72.3L113.2 72.3M95.2 75.2L113 76.9M89.6 77L112.3 81.5M94.1 80.9L111.1 86.1M88.2 81.6L109.6 90.4M91.9 86.2L107.6 94.6M86 85.8L105.2 98.6M88.7 91.1L102.4 102.4M82.9 89.4L99.3 105.8M84.6 95.2L95.9 108.9M79.3 92.5L92.1 111.7M79.7 98.4L88.1 114.1M75.1 94.7L83.9 116.1M74.4 100.6L79.6 117.6M70.5 96.1L75 118.8M68.7 101.7L70.4 119.5M65.8 96.5L65.8 119.7M62.9 101.7L61.2 119.5M61.1 96.1L56.6 118.8M57.2 100.6L52 117.6M56.5 94.7L47.7 116.1M51.9 98.4L43.5 114.1M52.3 92.5L39.5 111.7M47 95.2L35.7 108.9M48.7 89.4L32.3 105.8M42.9 91.1L29.2 102.4M45.6 85.8L26.4 98.6M39.7 86.2L24 94.6M43.4 81.6L22 90.4M37.5 80.9L20.5 86.1M42 77L19.3 81.5M36.4 75.2L18.6 76.9M41.6 72.3L18.4 72.3M36.4 69.4L18.6 67.7M42 67.6L19.3 63.1M37.5 63.7L20.5 58.5M43.4 63L22 54.2M39.7 58.4L24 50M45.6 58.8L26.4 46M42.9 53.5L29.2 42.2M48.7 55.2L32.3 38.8M47 49.4L35.7 35.7M52.3 52.1L39.5 32.9M51.9 46.2L43.5 30.5M56.5 49.9L47.7 28.5M57.2 44L52 27M61.1 48.5L56.6 25.8M62.9 42.9L61.2 25.1"/></g><path d="M66.1 25.8L70 26M83.9 29.5L87.4 31.1M98.9 39.7L101.5 42.6M108.9 54.8L110.2 58.5M112.3 72.6L112.1 76.5M108.6 90.4L107 93.9M98.4 105.4L95.5 108M83.3 115.4L79.6 116.7M65.5 118.8L61.6 118.6M47.7 115.1L44.2 113.5M32.7 104.9L30.1 102M22.7 89.8L21.4 86.1M19.3 72L19.5 68.1M23 54.2L24.6 50.7M33.2 39.2L36.1 36.6M48.3 29.2L52 27.9M65.8 49L68 49.1M71.6 53.4L73.3 54M75.5 49.1L77.6 50.1M75.2 54.9L76.8 55.8M78.4 57L79.8 58.3M83.6 54.6L85.2 56.3M82.5 58.6L83.7 60.3M87.4 63.4L88.1 65.5M86.5 66.1L86.9 68.1M90.5 67.4L90.8 69.8M85.5 70.4L85.6 72.3M90.9 72.3L90.8 74.7M87.3 74.5L87 76.5M88.7 76.9L88.2 79M81.1 84.9L79.8 86.3M82.3 88.8L80.6 90.3M79.7 93.2L77.7 94.4M75.4 95.5L73.1 96.3M70.3 95.2L68.1 95.5M65.8 97.4L63.4 97.3M60.9 96.9L58.5 96.4M60 91.2L58.3 90.6M56.8 93.9L54.8 92.9M51.8 93.2L49.9 91.8M52.1 88.9L50.6 87.6M46.4 85.2L45.2 83.3M42.6 81.9L41.8 79.6M41.1 77.2L40.8 74.8M44.6 76.5L44.3 74.5M46.1 74.2L46 72.3M42.5 72.3L42.6 70.1M44.3 70.1L44.6 68.1M42.6 62.6L43.6 60.5M46.4 59.3L47.7 57.5M50.5 59.7L51.8 58.3M49.2 58.6L50.5 57.1M48.1 54.5L49.8 52.9M52.1 55.6L53.8 54.4M51.9 51.4L53.9 50.2M60.1 53.4L61.9 52.9M60.9 47.6L63.3 47.3M74.7 30.3L77.8 31.1M89.1 38.4L91.5 40.2M101.8 48.9L103.4 51.6M106.3 64.8L106.7 67.8M107.8 81.2L107 84.3M73.3 112.8L70.3 113.2M42.5 106.2L40.1 104.4M25.3 79.8L24.9 76.8M23.8 63.4L24.6 60.3M31.9 49L33.7 46.6M42.4 36.3L45.1 34.7M74.3 101.6L72.1 102.1M89.6 96.7L87.7 98.3M97.1 85.7L96 88M87.1 94.1L85.4 95.6M97.9 75.9L97.5 78.2M87.1 94.1L85.4 95.6M75.3 105L72.8 105.6M69.2 42L71.4 42.3" fill="none" stroke="#e6ffb6" stroke-width="1.75"/></svg>
<span class="t" style="top:-1.3px;font-size:10.4px;color:#e4f3cf;letter-spacing:0.244px;left:3.4px;">Prismatica</span>
</div>
<div class="cell" style="left:138.09px;top:136.94px;width:130.5px;height:130.8px;background:#116d35;box-shadow:inset 0 0 0 1px #18ae52;">
<svg style="left:0;top:0" width="130.5" height="130.8" viewBox="0 0 130.5 130.8"><g fill="#b4f2ca"><circle cx="66.63" cy="50.79" r="1.15"/><circle cx="83.54" cy="60.23" r="0.85"/><circle cx="87.12" cy="72.4" r="0.85"/><circle cx="77.96" cy="90.88" r="0.75"/><circle cx="65.11" cy="94.73" r="0.85"/><circle cx="47.3" cy="84.68" r="0.65"/><circle cx="43.33" cy="72.01" r="0.75"/><circle cx="53.3" cy="54.31" r="0.75"/></g></svg>
<span class="t" style="top:-1.3px;font-size:10.4px;color:#d2f1dd;letter-spacing:0.243px;left:3.4px;">Busy Arp Bass</span>
</div>
<div class="cell" style="left:138.09px;top:271.88px;width:130.5px;height:130.8px;background:#106b6c;box-shadow:inset 0 0 0 1px #15b8b9;">
<svg style="left:0;top:0" width="130.5" height="130.8" viewBox="0 0 130.5 130.8"><g fill="#bdf3f3"><circle cx="70.7" cy="51.5" r="0.9"/><circle cx="44.3" cy="67.4" r="0.9"/><circle cx="87" cy="77.4" r="0.9"/><circle cx="60.6" cy="93.7" r="0.9"/></g></svg>
<span class="t" style="top:-1.3px;font-size:10.4px;color:#cfeeee;letter-spacing:0.18px;left:3.4px;">Gentle Sine Bells</span>
</div>
<div class="cell" style="left:273.03px;top:2px;width:130.5px;height:130.8px;background:#476c13;box-shadow:inset 0 0 0 1px #6ba81a;">
<svg style="left:0;top:0" width="130.5" height="130.8" viewBox="0 0 130.5 130.8"><g fill="none" stroke="#d4f09a"><g stroke-opacity="0.4" stroke-width="0.8"><circle cx="65.8" cy="72.3" r="10"/><circle cx="65.8" cy="72.3" r="11.78"/><circle cx="65.8" cy="72.3" r="13.56"/><circle cx="65.8" cy="72.3" r="15.34"/><circle cx="65.8" cy="72.3" r="17.12"/><circle cx="65.8" cy="72.3" r="18.9"/><circle cx="65.8" cy="72.3" r="20.68"/><circle cx="65.8" cy="72.3" r="22.46"/><circle cx="65.8" cy="72.3" r="24.24"/><circle cx="65.8" cy="72.3" r="26.02"/><circle cx="65.8" cy="72.3" r="27.8"/><circle cx="65.8" cy="72.3" r="29.58"/><circle cx="65.8" cy="72.3" r="31.36"/><circle cx="65.8" cy="72.3" r="33.14"/><circle cx="65.8" cy="72.3" r="34.92"/><circle cx="65.8" cy="72.3" r="36.7"/><circle cx="65.8" cy="72.3" r="38.48"/><circle cx="65.8" cy="72.3" r="40.26"/><circle cx="65.8" cy="72.3" r="42.04"/><circle cx="65.8" cy="72.3" r="43.82"/><circle cx="65.8" cy="72.3" r="45.6"/><circle cx="65.8" cy="72.3" r="47.38"/></g><path stroke-opacity="0.33" stroke-width="0.65" d="M65.8 48.1L65.8 24.9M68.7 42.9L70.4 25.1M70.5 48.5L75 25.8M74.4 44L79.6 27M75.1 49.9L83.9 28.5M79.7 46.2L88.1 30.5M79.3 52.1L92.1 32.9M84.6 49.4L95.9 35.7M82.9 55.2L99.3 38.8M88.7 53.5L102.4 42.2M86 58.8L105.2 46M91.9 58.4L107.6 50M88.2 63L109.6 54.2M94.1 63.7L111.1 58.5M89.6 67.6L112.3 63.1M95.2 69.4L113 67.7M90 72.3L113.2 72.3M95.2 75.2L113 76.9M89.6 77L112.3 81.5M94.1 80.9L111.1 86.1M88.2 81.6L109.6 90.4M91.9 86.2L107.6 94.6M86 85.8L105.2 98.6M88.7 91.1L102.4 102.4M82.9 89.4L99.3 105.8M84.6 95.2L95.9 108.9M79.3 92.5L92.1 111.7M79.7 98.4L88.1 114.1M75.1 94.7L83.9 116.1M74.4 100.6L79.6 117.6M70.5 96.1L75 118.8M68.7 101.7L70.4 119.5M65.8 96.5L65.8 119.7M62.9 101.7L61.2 119.5M61.1 96.1L56.6 118.8M57.2 100.6L52 117.6M56.5 94.7L47.7 116.1M51.9 98.4L43.5 114.1M52.3 92.5L39.5 111.7M47 95.2L35.7 108.9M48.7 89.4L32.3 105.8M42.9 91.1L29.2 102.4M45.6 85.8L26.4 98.6M39.7 86.2L24 94.6M43.4 81.6L22 90.4M37.5 80.9L20.5 86.1M42 77L19.3 81.5M36.4 75.2L18.6 76.9M41.6 72.3L18.4 72.3M36.4 69.4L18.6 67.7M42 67.6L19.3 63.1M37.5 63.7L20.5 58.5M43.4 63L22 54.2M39.7 58.4L24 50M45.6 58.8L26.4 46M42.9 53.5L29.2 42.2M48.7 55.2L32.3 38.8M47 49.4L35.7 35.7M52.3 52.1L39.5 32.9M51.9 46.2L43.5 30.5M56.5 49.9L47.7 28.5M57.2 44L52 27M61.1 48.5L56.6 25.8M62.9 42.9L61.2 25.1"/></g><path d="M66.1 25.8L70 26M83.9 29.5L87.4 31.1M98.9 39.7L101.5 42.6M108.9 54.8L110.2 58.5M112.3 72.6L112.1 76.5M108.6 90.4L107 93.9M98.4 105.4L95.5 108M83.3 115.4L79.6 116.7M65.5 118.8L61.6 118.6M47.7 115.1L44.2 113.5M32.7 104.9L30.1 102M22.7 89.8L21.4 86.1M19.3 72L19.5 68.1M23 54.2L24.6 50.7M33.2 39.2L36.1 36.6M48.3 29.2L52 27.9M65.8 49L68 49.1M70.7 47.7L73.1 48.2M71.6 53.4L73.3 54M75.5 49.1L77.6 50.1M78.8 52.9L80.6 54.2M83.6 54.6L85.2 56.3M83.3 63L84.1 64.7M87.4 63.4L88.1 65.5M90.5 67.4L90.8 69.8M85.5 70.4L85.6 72.3M87.3 74.5L87 76.5M89 82L88 84.1M79.7 93.2L77.7 94.4M75.4 95.5L73.1 96.3M71.5 91.2L69.7 91.7M67.7 92L65.8 92.1M65.8 97.4L63.4 97.3M63.6 93.8L61.6 93.5M60.9 96.9L58.5 96.4M56.8 93.9L54.8 92.9M51.8 93.2L49.9 91.8M49.1 86L47.9 84.3M46.4 85.2L45.2 83.3M42.6 81.9L41.8 79.6M41.2 67.4L41.7 65M46.9 66.5L47.5 64.8M42.6 62.6L43.6 60.5M46.4 59.3L47.7 57.5M50.5 59.7L51.8 58.3M48.1 54.5L49.8 52.9M51.9 51.4L53.9 50.2M57.6 52.4L59.5 51.7M60.9 47.6L63.3 47.3M89.1 38.4L91.5 40.2M101.8 48.9L103.4 51.6M106.3 64.8L106.7 67.8M107.8 81.2L107 84.3M89.2 108.3L86.5 109.9M73.3 112.8L70.3 113.2M56.9 114.3L53.8 113.5M42.5 106.2L40.1 104.4M29.8 95.7L28.2 93M23.8 63.4L24.6 60.3M42.4 36.3L45.1 34.7M58.3 31.8L61.3 31.4M56.1 103L53.8 102.2M62.2 104.4L59.9 104M71.7 104L69.4 104.4M57.3 43L59.5 42.5M84.4 100.8L82.2 102.1M96.8 63.3L97.4 65.6M38.8 86.3L37.8 84.3M59.9 40.6L62.2 40.2" fill="none" stroke="#e6ffb6" stroke-width="1.75"/></svg>
<span class="t" style="top:-1.3px;font-size:10.4px;color:#e4f3cf;letter-spacing:0.244px;left:3.4px;">Prismatica</span>
</div>
<div class="cell" style="left:273.03px;top:136.94px;width:130.5px;height:130.8px;background:#116d35;box-shadow:inset 0 0 0 1px #18ae52;">
<svg style="left:0;top:0" width="130.5" height="130.8" viewBox="0 0 130.5 130.8"><g fill="#b4f2ca"><circle cx="67.01" cy="50.8" r="0.75"/><circle cx="72.28" cy="51.54" r="0.75"/><circle cx="84.43" cy="61.47" r="0.85"/><circle cx="87.64" cy="71.63" r="0.75"/><circle cx="86.94" cy="77.75" r="0.75"/><circle cx="76.48" cy="91.42" r="0.85"/><circle cx="66.27" cy="94.47" r="0.65"/><circle cx="59.72" cy="93.98" r="0.75"/><circle cx="46.75" cy="83.22" r="0.65"/><circle cx="43.74" cy="73.16" r="0.85"/><circle cx="43.82" cy="67" r="0.65"/><circle cx="54.58" cy="53.49" r="0.65"/><circle cx="84.97" cy="82.75" r="0.65"/><circle cx="45.97" cy="62.01" r="0.75"/></g></svg>
<span class="t" style="top:-1.3px;font-size:10.4px;color:#d2f1dd;letter-spacing:0.243px;left:3.4px;">Busy Arp Bass</span>
</div>
<div class="cell" style="left:273.03px;top:271.88px;width:130.5px;height:130.8px;background:#106b6c;box-shadow:inset 0 0 0 1px #15b8b9;">
<svg style="left:0;top:0" width="130.5" height="130.8" viewBox="0 0 130.5 130.8"><g fill="#bdf3f3"><circle cx="70.7" cy="51.5" r="0.9"/><circle cx="44.3" cy="67.4" r="0.9"/><circle cx="87" cy="77.4" r="0.9"/><circle cx="60.6" cy="93.7" r="0.9"/></g></svg>
<span class="t" style="top:-1.3px;font-size:10.4px;color:#cfeeee;letter-spacing:0.18px;left:3.4px;">Gentle Sine Bells</span>
</div>
<div class="cell" style="left:407.97px;top:2px;width:130.5px;height:130.8px;background:#476c13;box-shadow:inset 0 0 0 1px #6ba81a;">
<svg style="left:0;top:0" width="130.5" height="130.8" viewBox="0 0 130.5 130.8"><g fill="none" stroke="#d4f09a"><g stroke-opacity="0.4" stroke-width="0.8"><circle cx="65.8" cy="72.3" r="10"/><circle cx="65.8" cy="72.3" r="11.78"/><circle cx="65.8" cy="72.3" r="13.56"/><circle cx="65.8" cy="72.3" r="15.34"/><circle cx="65.8" cy="72.3" r="17.12"/><circle cx="65.8" cy="72.3" r="18.9"/><circle cx="65.8" cy="72.3" r="20.68"/><circle cx="65.8" cy="72.3" r="22.46"/><circle cx="65.8" cy="72.3" r="24.24"/><circle cx="65.8" cy="72.3" r="26.02"/><circle cx="65.8" cy="72.3" r="27.8"/><circle cx="65.8" cy="72.3" r="29.58"/><circle cx="65.8" cy="72.3" r="31.36"/><circle cx="65.8" cy="72.3" r="33.14"/><circle cx="65.8" cy="72.3" r="34.92"/><circle cx="65.8" cy="72.3" r="36.7"/><circle cx="65.8" cy="72.3" r="38.48"/><circle cx="65.8" cy="72.3" r="40.26"/><circle cx="65.8" cy="72.3" r="42.04"/><circle cx="65.8" cy="72.3" r="43.82"/><circle cx="65.8" cy="72.3" r="45.6"/><circle cx="65.8" cy="72.3" r="47.38"/></g><path stroke-opacity="0.33" stroke-width="0.65" d="M65.8 48.1L65.8 24.9M68.7 42.9L70.4 25.1M70.5 48.5L75 25.8M74.4 44L79.6 27M75.1 49.9L83.9 28.5M79.7 46.2L88.1 30.5M79.3 52.1L92.1 32.9M84.6 49.4L95.9 35.7M82.9 55.2L99.3 38.8M88.7 53.5L102.4 42.2M86 58.8L105.2 46M91.9 58.4L107.6 50M88.2 63L109.6 54.2M94.1 63.7L111.1 58.5M89.6 67.6L112.3 63.1M95.2 69.4L113 67.7M90 72.3L113.2 72.3M95.2 75.2L113 76.9M89.6 77L112.3 81.5M94.1 80.9L111.1 86.1M88.2 81.6L109.6 90.4M91.9 86.2L107.6 94.6M86 85.8L105.2 98.6M88.7 91.1L102.4 102.4M82.9 89.4L99.3 105.8M84.6 95.2L95.9 108.9M79.3 92.5L92.1 111.7M79.7 98.4L88.1 114.1M75.1 94.7L83.9 116.1M74.4 100.6L79.6 117.6M70.5 96.1L75 118.8M68.7 101.7L70.4 119.5M65.8 96.5L65.8 119.7M62.9 101.7L61.2 119.5M61.1 96.1L56.6 118.8M57.2 100.6L52 117.6M56.5 94.7L47.7 116.1M51.9 98.4L43.5 114.1M52.3 92.5L39.5 111.7M47 95.2L35.7 108.9M48.7 89.4L32.3 105.8M42.9 91.1L29.2 102.4M45.6 85.8L26.4 98.6M39.7 86.2L24 94.6M43.4 81.6L22 90.4M37.5 80.9L20.5 86.1M42 77L19.3 81.5M36.4 75.2L18.6 76.9M41.6 72.3L18.4 72.3M36.4 69.4L18.6 67.7M42 67.6L19.3 63.1M37.5 63.7L20.5 58.5M43.4 63L22 54.2M39.7 58.4L24 50M45.6 58.8L26.4 46M42.9 53.5L29.2 42.2M48.7 55.2L32.3 38.8M47 49.4L35.7 35.7M52.3 52.1L39.5 32.9M51.9 46.2L43.5 30.5M56.5 49.9L47.7 28.5M57.2 44L52 27M61.1 48.5L56.6 25.8M62.9 42.9L61.2 25.1"/></g><path d="M66.1 25.8L70 26M83.9 29.5L87.4 31.1M98.9 39.7L101.5 42.6M108.9 54.8L110.2 58.5M112.3 72.6L112.1 76.5M108.6 90.4L107 93.9M98.4 105.4L95.5 108M83.3 115.4L79.6 116.7M65.5 118.8L61.6 118.6M47.7 115.1L44.2 113.5M32.7 104.9L30.1 102M22.7 89.8L21.4 86.1M19.3 72L19.5 68.1M23 54.2L24.6 50.7M33.2 39.2L36.1 36.6M48.3 29.2L52 27.9M70.7 47.7L73.1 48.2M71.6 53.4L73.3 54M75.2 54.9L76.8 55.8M78.8 52.9L80.6 54.2M78.4 57L79.8 58.3M83.6 54.6L85.2 56.3M83.3 63L84.1 64.7M87.4 63.4L88.1 65.5M90.5 67.4L90.8 69.8M90.9 72.3L90.8 74.7M88.7 76.9L88.2 79M82.3 88.8L80.6 90.3M75.1 89.8L73.4 90.6M70.3 95.2L68.1 95.5M67.7 92L65.8 92.1M65.8 97.4L63.4 97.3M63.6 93.8L61.6 93.5M60 91.2L58.3 90.6M56.8 93.9L54.8 92.9M56.4 89.7L54.8 88.8M53.2 87.6L51.8 86.3M46.4 85.2L45.2 83.3M46.9 78L46.4 76.2M41.1 77.2L40.8 74.8M42.5 72.3L42.6 70.1M45.2 66L45.9 64.1M42.6 62.6L43.6 60.5M46.4 59.3L47.7 57.5M47.9 60.3L49.1 58.6M48.1 54.5L49.8 52.9M50.6 57L52.1 55.7M56.5 54.8L58.2 54M56.9 50.7L59 50M60.9 47.6L63.3 47.3M106.3 64.8L106.7 67.8M107.8 81.2L107 84.3M99.7 95.6L97.9 98M89.2 108.3L86.5 109.9M73.3 112.8L70.3 113.2M42.5 106.2L40.1 104.4M25.3 79.8L24.9 76.8M23.8 63.4L24.6 60.3M31.9 49L33.7 46.6M58.3 31.8L61.3 31.4M71.4 102.3L69.2 102.6M50.3 100.6L48.2 99.3M33.6 71.9L33.7 69.5M86 97.5L84 98.9M95.1 63.8L95.6 66M44 93.6L42.5 91.9M56.1 103L53.8 102.2M44.5 50.5L46.2 49" fill="none" stroke="#e6ffb6" stroke-width="1.75"/></svg>
<span class="t" style="top:-1.3px;font-size:10.4px;color:#e4f3cf;letter-spacing:0.244px;left:3.4px;">Prismatica</span>
</div>
<div class="cell" style="left:407.97px;top:136.94px;width:130.5px;height:130.8px;background:#116d35;box-shadow:inset 0 0 0 1px #18ae52;">
<svg style="left:0;top:0" width="130.5" height="130.8" viewBox="0 0 130.5 130.8"><g fill="#b4f2ca"><circle cx="67.01" cy="50.8" r="0.75"/><circle cx="72.28" cy="51.54" r="0.75"/><circle cx="84.43" cy="61.47" r="0.85"/><circle cx="87.64" cy="71.63" r="0.75"/><circle cx="86.94" cy="77.75" r="0.75"/><circle cx="76.48" cy="91.42" r="0.85"/><circle cx="66.27" cy="94.47" r="0.65"/><circle cx="59.72" cy="93.98" r="0.75"/><circle cx="46.75" cy="83.22" r="0.65"/><circle cx="43.74" cy="73.16" r="0.85"/><circle cx="43.82" cy="67" r="0.65"/><circle cx="54.58" cy="53.49" r="0.65"/><circle cx="84.97" cy="82.75" r="0.65"/><circle cx="45.97" cy="62.01" r="0.75"/></g></svg>
<span class="t" style="top:-1.3px;font-size:10.4px;color:#d2f1dd;letter-spacing:0.243px;left:3.4px;">Busy Arp Bass</span>
</div>
<div class="cell" style="left:407.97px;top:271.88px;width:130.5px;height:130.8px;background:#106b6c;box-shadow:inset 0 0 0 1px #15b8b9;">
<svg style="left:0;top:0" width="130.5" height="130.8" viewBox="0 0 130.5 130.8"><g fill="#bdf3f3"><circle cx="70.7" cy="51.5" r="0.9"/><circle cx="44.3" cy="67.4" r="0.9"/><circle cx="87" cy="77.4" r="0.9"/><circle cx="60.6" cy="93.7" r="0.9"/><circle cx="43.6" cy="37.7" r="0.9"/><circle cx="87.9" cy="107.5" r="0.9"/></g></svg>
<span class="t" style="top:-1.3px;font-size:10.4px;color:#cfeeee;letter-spacing:0.18px;left:3.4px;">Gentle Sine Bells</span>
<svg style="left:110.6px;top:115.6px;" width="17" height="12" viewBox="0 0 17 12"><g fill="none" stroke="#cfeeee" stroke-width="0.85" stroke-linecap="round"><circle cx="5.7" cy="9.3" r="1.3"/><circle cx="11" cy="3.2" r="1.3"/><path d="M6.6 8.3 L10.1 4.2 M12.3 3.2 H15.2 M1.3 9.3 H4.4"/></g></svg>
</div>
<div class="cell" style="left:542.91px;top:2px;width:130.5px;height:130.8px;background:#476c13;box-shadow:inset 0 0 0 1px #6ba81a;">
<svg style="left:0;top:0" width="130.5" height="130.8" viewBox="0 0 130.5 130.8"><g fill="none" stroke="#d4f09a"><g stroke-opacity="0.4" stroke-width="0.8"><circle cx="65.8" cy="72.3" r="10"/><circle cx="65.8" cy="72.3" r="11.78"/><circle cx="65.8" cy="72.3" r="13.56"/><circle cx="65.8" cy="72.3" r="15.34"/><circle cx="65.8" cy="72.3" r="17.12"/><circle cx="65.8" cy="72.3" r="18.9"/><circle cx="65.8" cy="72.3" r="20.68"/><circle cx="65.8" cy="72.3" r="22.46"/><circle cx="65.8" cy="72.3" r="24.24"/><circle cx="65.8" cy="72.3" r="26.02"/><circle cx="65.8" cy="72.3" r="27.8"/><circle cx="65.8" cy="72.3" r="29.58"/><circle cx="65.8" cy="72.3" r="31.36"/><circle cx="65.8" cy="72.3" r="33.14"/><circle cx="65.8" cy="72.3" r="34.92"/><circle cx="65.8" cy="72.3" r="36.7"/><circle cx="65.8" cy="72.3" r="38.48"/><circle cx="65.8" cy="72.3" r="40.26"/><circle cx="65.8" cy="72.3" r="42.04"/><circle cx="65.8" cy="72.3" r="43.82"/><circle cx="65.8" cy="72.3" r="45.6"/><circle cx="65.8" cy="72.3" r="47.38"/></g><path stroke-opacity="0.33" stroke-width="0.65" d="M65.8 48.1L65.8 24.9M68.7 42.9L70.4 25.1M70.5 48.5L75 25.8M74.4 44L79.6 27M75.1 49.9L83.9 28.5M79.7 46.2L88.1 30.5M79.3 52.1L92.1 32.9M84.6 49.4L95.9 35.7M82.9 55.2L99.3 38.8M88.7 53.5L102.4 42.2M86 58.8L105.2 46M91.9 58.4L107.6 50M88.2 63L109.6 54.2M94.1 63.7L111.1 58.5M89.6 67.6L112.3 63.1M95.2 69.4L113 67.7M90 72.3L113.2 72.3M95.2 75.2L113 76.9M89.6 77L112.3 81.5M94.1 80.9L111.1 86.1M88.2 81.6L109.6 90.4M91.9 86.2L107.6 94.6M86 85.8L105.2 98.6M88.7 91.1L102.4 102.4M82.9 89.4L99.3 105.8M84.6 95.2L95.9 108.9M79.3 92.5L92.1 111.7M79.7 98.4L88.1 114.1M75.1 94.7L83.9 116.1M74.4 100.6L79.6 117.6M70.5 96.1L75 118.8M68.7 101.7L70.4 119.5M65.8 96.5L65.8 119.7M62.9 101.7L61.2 119.5M61.1 96.1L56.6 118.8M57.2 100.6L52 117.6M56.5 94.7L47.7 116.1M51.9 98.4L43.5 114.1M52.3 92.5L39.5 111.7M47 95.2L35.7 108.9M48.7 89.4L32.3 105.8M42.9 91.1L29.2 102.4M45.6 85.8L26.4 98.6M39.7 86.2L24 94.6M43.4 81.6L22 90.4M37.5 80.9L20.5 86.1M42 77L19.3 81.5M36.4 75.2L18.6 76.9M41.6 72.3L18.4 72.3M36.4 69.4L18.6 67.7M42 67.6L19.3 63.1M37.5 63.7L20.5 58.5M43.4 63L22 54.2M39.7 58.4L24 50M45.6 58.8L26.4 46M42.9 53.5L29.2 42.2M48.7 55.2L32.3 38.8M47 49.4L35.7 35.7M52.3 52.1L39.5 32.9M51.9 46.2L43.5 30.5M56.5 49.9L47.7 28.5M57.2 44L52 27M61.1 48.5L56.6 25.8M62.9 42.9L61.2 25.1"/></g><path d="M66.1 25.8L70 26M83.9 29.5L87.4 31.1M98.9 39.7L101.5 42.6M108.9 54.8L110.2 58.5M112.3 72.6L112.1 76.5M108.6 90.4L107 93.9M98.4 105.4L95.5 108M83.3 115.4L79.6 116.7M65.5 118.8L61.6 118.6M47.7 115.1L44.2 113.5M32.7 104.9L30.1 102M22.7 89.8L21.4 86.1M19.3 72L19.5 68.1M23 54.2L24.6 50.7M33.2 39.2L36.1 36.6M48.3 29.2L52 27.9M68 50.8L70 51.1M70.7 47.7L73.1 48.2M71.6 53.4L73.3 54M75.5 49.1L77.6 50.1M78.8 52.9L80.6 54.2M83.6 54.6L85.2 56.3M82.5 58.6L83.7 60.3M86.7 58.4L87.9 60.4M87.4 63.4L88.1 65.5M84.7 66.6L85.2 68.4M90.5 67.4L90.8 69.8M90.9 72.3L90.8 74.7M88.7 76.9L88.2 79M86.9 76.5L86.5 78.5M84.7 78.1L84.1 79.8M89 82L88 84.1M83.2 81.7L82.3 83.3M86.7 86.3L85.3 88.2M82.3 88.8L80.6 90.3M79.5 89L77.8 90.2M79.7 93.2L77.7 94.4M75.4 95.5L73.1 96.3M71.5 91.2L69.7 91.7M70.3 95.2L68.1 95.5M67.7 92L65.8 92.1M65.8 97.4L63.4 97.3M63.6 93.8L61.6 93.5M60 91.2L58.3 90.6M56.8 93.9L54.8 92.9M56.4 89.7L54.8 88.8M51.8 93.2L49.9 91.8M48 90L46.4 88.3M50.5 87.5L49.2 86M49.1 86L47.9 84.3M46.4 85.2L45.2 83.3M48.3 81.6L47.5 79.9M42.6 81.9L41.8 79.6M41.1 77.2L40.8 74.8M42.5 72.3L42.6 70.1M44.3 70.1L44.6 68.1M46.9 66.5L47.5 64.8M42.6 62.6L43.6 60.5M48.4 62.9L49.3 61.3M46.4 59.3L47.7 57.5M48.1 54.5L49.8 52.9M51.9 51.4L53.9 50.2M56.5 54.8L58.2 54M56.9 50.7L59 50M60.1 53.4L61.9 52.9M60.9 47.6L63.3 47.3M63.9 52.6L65.8 52.5M75.1 43.3L77 44M75.6 41.6L77.7 42.3M76.2 39.9L78.3 40.7M76.7 38.2L79 39M77.3 36.5L79.6 37.3M94.1 61.1L94.8 63M95.8 60.4L96.5 62.5M97.4 59.8L98.2 61.9M99.1 59.1L99.9 61.4M100.8 58.5L101.6 60.8M98.2 82.7L97.4 84.8M99.9 83.2L99.1 85.5M101.6 83.8L100.8 86.1M103.3 84.3L102.4 86.8M105 84.9L104.1 87.4M77.7 102.3L75.6 103M78.3 103.9L76.2 104.7M79 105.6L76.7 106.4M79.6 107.3L77.3 108.1M80.3 108.9L77.8 109.8M56.5 101.3L54.6 100.6M56 103L53.9 102.3M55.4 104.7L53.3 103.9M54.9 106.4L52.6 105.6M54.3 108.1L52 107.3M34.2 84.8L33.4 82.7M32.5 85.5L31.7 83.2M30.8 86.1L30 83.8M29.2 86.8L28.3 84.3M27.5 87.4L26.6 84.9M35.1 62.5L35.8 60.4M33.4 61.9L34.2 59.8M31.7 61.4L32.5 59.1M30 60.8L30.8 58.5M28.3 60.3L29.2 57.8M53.9 42.3L56 41.6M53.3 40.7L55.4 39.9M52.6 39L54.9 38.2M52 37.3L54.3 36.5M51.3 35.7L53.8 34.8M81.7 112.2L78.8 113.2M68.6 104.4L66.2 104.5M37.6 77.6L37.3 75.5M107.8 81.2L107 84.3M71.4 102.3L69.2 102.6M43.2 87L42.2 85.3M79.8 99.3L77.8 100.3M55.2 97L53.4 96.2M45.2 32.6L48.2 31.2M82.4 97.8L80.5 99M54.5 98.7L52.6 97.8M66.2 41.8L68.4 41.9M79.2 41L81.5 42.1M39.1 57.6L40.3 55.7M68.3 100.9L66.2 101M40.7 58.5L41.8 56.7M68.9 108L66.2 108.1M106.9 89.9L105.5 92.9M91.5 104.4L89.1 106.2M43.4 90.2L42.1 88.5M61.5 111.4L58.6 111M36.5 95.8L34.8 93.6M91.1 42.2L93.3 44.1M37.9 37.4L40.5 35.4M85.1 44.2L87.1 45.7M38.9 98.6L37 96.5M105 93.9L103.3 96.7M101.9 61.8L102.6 64.5M65.4 108.1L62.7 108M110.5 72.8L110.3 76.1M82.7 32.8L85.6 34.2M69.5 38.5L72 38.8M88.1 39.8L90.4 41.6M94.5 101.8L92.3 103.8M99.7 69.4L99.8 71.9M57.7 98L55.8 97.3M63.3 43.7L65.4 43.6M89.8 56.7L90.9 58.5M32.9 58.2L34 55.8M106.7 85.3L105.7 88.2M40.6 92.5L39.2 90.5M76.6 38.2L79.1 39.1M31.4 82.3L30.8 79.7M71.1 100.5L69 100.8M66.2 38.3L68.7 38.4M94.4 69.8L94.5 71.9M76.8 110.1L74 110.8M37.7 66.4L38.2 64.3M85.6 36.2L88.2 37.8M54.5 98.7L52.6 97.8M89.6 53.3L90.9 55.1M34.1 78.2L33.7 75.9M79 97.8L77.1 98.7M75.5 41.6L77.8 42.4M81.3 44L83.4 45.3M36 66L36.5 63.8M35.1 102.3L32.9 99.9M78.3 115.2L75.1 116M108.6 68.6L108.7 71.8M72.4 107.5L69.7 107.9M87.8 90.8L86.3 92.3M101.2 96.6L99.3 99.1M62.4 33.1L65.3 32.9M79.6 47.2L81.4 48.3M66.2 43.6L68.2 43.7M94 67.1L94.3 69.1M92.2 83.6L91.3 85.5M86.5 86.6L85.4 88M84.6 91.6L83.2 92.9M79.5 93.4L78 94.3M70.4 97L68.6 97.3M60.6 96.9L58.8 96.4M54.5 98.7L52.6 97.8M37.1 71.9L37.2 69.9M42.7 62.4L43.5 60.8M43.6 57L44.8 55.5M52.1 51.2L53.6 50.3" fill="none" stroke="#e6ffb6" stroke-width="1.45"/><circle cx="65.8" cy="72.3" r="10.4" fill="none" stroke="#dcfaa8" stroke-width="1.1"/><g fill="#dcfaa8"><circle cx="65.8" cy="58.7" r="0.45"/><circle cx="71" cy="59.7" r="0.45"/><circle cx="75.4" cy="62.7" r="0.45"/><circle cx="78.4" cy="67.1" r="0.45"/><circle cx="79.4" cy="72.3" r="0.45"/><circle cx="78.4" cy="77.5" r="0.45"/><circle cx="75.4" cy="81.9" r="0.45"/><circle cx="71" cy="84.9" r="0.45"/><circle cx="65.8" cy="85.9" r="0.45"/><circle cx="60.6" cy="84.9" r="0.45"/><circle cx="56.2" cy="81.9" r="0.45"/><circle cx="53.2" cy="77.5" r="0.45"/><circle cx="52.2" cy="72.3" r="0.45"/><circle cx="53.2" cy="67.1" r="0.45"/><circle cx="56.2" cy="62.7" r="0.45"/><circle cx="60.6" cy="59.7" r="0.45"/></g></svg>
<span class="t" style="top:-1.3px;font-size:10.4px;color:#e4f3cf;letter-spacing:0.244px;left:3.4px;">Prismatica</span>
</div>
<div class="cell" style="left:542.91px;top:136.94px;width:130.5px;height:130.8px;background:#116d35;box-shadow:inset 0 0 0 1px #18ae52;">
<svg style="left:0;top:0" width="130.5" height="130.8" viewBox="0 0 130.5 130.8"><g fill="#b4f2ca"><circle cx="67.44" cy="50.27" r="0.85"/><circle cx="72.29" cy="51.5" r="0.65"/><circle cx="82.17" cy="58.42" r="0.75"/><circle cx="85.44" cy="62.24" r="0.75"/><circle cx="86.97" cy="67.84" r="0.75"/><circle cx="87.05" cy="74.29" r="0.85"/><circle cx="86.29" cy="79.16" r="0.65"/><circle cx="83.95" cy="84.38" r="0.85"/><circle cx="79.77" cy="89.41" r="0.85"/><circle cx="75.5" cy="92.02" r="0.75"/><circle cx="70.05" cy="93.78" r="0.65"/><circle cx="63.59" cy="94.26" r="0.85"/><circle cx="53.42" cy="91" r="0.85"/><circle cx="48.55" cy="86.62" r="0.85"/><circle cx="46.08" cy="82.3" r="0.75"/><circle cx="44.02" cy="76.97" r="0.75"/><circle cx="43.77" cy="70.5" r="0.65"/><circle cx="44.25" cy="65.5" r="0.65"/><circle cx="46.8" cy="60.26" r="0.65"/><circle cx="51.6" cy="55.83" r="0.75"/><circle cx="55.69" cy="53.15" r="0.65"/><circle cx="60.86" cy="50.56" r="0.65"/></g></svg>
<span class="t" style="top:-1.3px;font-size:10.4px;color:#d2f1dd;letter-spacing:0.243px;left:3.4px;">Busy Arp Bass</span>
</div>
<div class="cell" style="left:542.91px;top:271.88px;width:130.5px;height:130.8px;background:#106b6c;box-shadow:inset 0 0 0 1px #15b8b9;">
<svg style="left:0;top:0" width="130.5" height="130.8" viewBox="0 0 130.5 130.8"><g fill="#bdf3f3"><circle cx="70.7" cy="51.5" r="0.9"/><circle cx="44.3" cy="67.4" r="0.9"/><circle cx="87" cy="77.4" r="0.9"/><circle cx="60.6" cy="93.7" r="0.9"/><circle cx="43.6" cy="37.7" r="0.9"/><circle cx="87.9" cy="107.5" r="0.9"/></g></svg>
<span class="t" style="top:-1.3px;font-size:10.4px;color:#cfeeee;letter-spacing:0.18px;left:3.4px;">Gentle Sine Bells</span>
<svg style="left:110.6px;top:115.6px;" width="17" height="12" viewBox="0 0 17 12"><g fill="none" stroke="#cfeeee" stroke-width="0.85" stroke-linecap="round"><circle cx="5.7" cy="9.3" r="1.3"/><circle cx="11" cy="3.2" r="1.3"/><path d="M6.6 8.3 L10.1 4.2 M12.3 3.2 H15.2 M1.3 9.3 H4.4"/></g></svg>
</div>
<div class="cell" style="left:677.85px;top:2px;width:130.5px;height:130.8px;background:#476c13;box-shadow:inset 0 0 0 1px #6ba81a;">
<svg style="left:0;top:0" width="130.5" height="130.8" viewBox="0 0 130.5 130.8"><g fill="none" stroke="#d4f09a"><g stroke-opacity="0.4" stroke-width="0.8"><circle cx="65.8" cy="72.3" r="10"/><circle cx="65.8" cy="72.3" r="11.78"/><circle cx="65.8" cy="72.3" r="13.56"/><circle cx="65.8" cy="72.3" r="15.34"/><circle cx="65.8" cy="72.3" r="17.12"/><circle cx="65.8" cy="72.3" r="18.9"/><circle cx="65.8" cy="72.3" r="20.68"/><circle cx="65.8" cy="72.3" r="22.46"/><circle cx="65.8" cy="72.3" r="24.24"/><circle cx="65.8" cy="72.3" r="26.02"/><circle cx="65.8" cy="72.3" r="27.8"/><circle cx="65.8" cy="72.3" r="29.58"/><circle cx="65.8" cy="72.3" r="31.36"/><circle cx="65.8" cy="72.3" r="33.14"/><circle cx="65.8" cy="72.3" r="34.92"/><circle cx="65.8" cy="72.3" r="36.7"/><circle cx="65.8" cy="72.3" r="38.48"/><circle cx="65.8" cy="72.3" r="40.26"/><circle cx="65.8" cy="72.3" r="42.04"/><circle cx="65.8" cy="72.3" r="43.82"/><circle cx="65.8" cy="72.3" r="45.6"/><circle cx="65.8" cy="72.3" r="47.38"/></g><path stroke-opacity="0.33" stroke-width="0.65" d="M65.8 48.1L65.8 24.9M68.7 42.9L70.4 25.1M70.5 48.5L75 25.8M74.4 44L79.6 27M75.1 49.9L83.9 28.5M79.7 46.2L88.1 30.5M79.3 52.1L92.1 32.9M84.6 49.4L95.9 35.7M82.9 55.2L99.3 38.8M88.7 53.5L102.4 42.2M86 58.8L105.2 46M91.9 58.4L107.6 50M88.2 63L109.6 54.2M94.1 63.7L111.1 58.5M89.6 67.6L112.3 63.1M95.2 69.4L113 67.7M90 72.3L113.2 72.3M95.2 75.2L113 76.9M89.6 77L112.3 81.5M94.1 80.9L111.1 86.1M88.2 81.6L109.6 90.4M91.9 86.2L107.6 94.6M86 85.8L105.2 98.6M88.7 91.1L102.4 102.4M82.9 89.4L99.3 105.8M84.6 95.2L95.9 108.9M79.3 92.5L92.1 111.7M79.7 98.4L88.1 114.1M75.1 94.7L83.9 116.1M74.4 100.6L79.6 117.6M70.5 96.1L75 118.8M68.7 101.7L70.4 119.5M65.8 96.5L65.8 119.7M62.9 101.7L61.2 119.5M61.1 96.1L56.6 118.8M57.2 100.6L52 117.6M56.5 94.7L47.7 116.1M51.9 98.4L43.5 114.1M52.3 92.5L39.5 111.7M47 95.2L35.7 108.9M48.7 89.4L32.3 105.8M42.9 91.1L29.2 102.4M45.6 85.8L26.4 98.6M39.7 86.2L24 94.6M43.4 81.6L22 90.4M37.5 80.9L20.5 86.1M42 77L19.3 81.5M36.4 75.2L18.6 76.9M41.6 72.3L18.4 72.3M36.4 69.4L18.6 67.7M42 67.6L19.3 63.1M37.5 63.7L20.5 58.5M43.4 63L22 54.2M39.7 58.4L24 50M45.6 58.8L26.4 46M42.9 53.5L29.2 42.2M48.7 55.2L32.3 38.8M47 49.4L35.7 35.7M52.3 52.1L39.5 32.9M51.9 46.2L43.5 30.5M56.5 49.9L47.7 28.5M57.2 44L52 27M61.1 48.5L56.6 25.8M62.9 42.9L61.2 25.1"/></g><path d="M66.1 25.8L70 26M83.9 29.5L87.4 31.1M98.9 39.7L101.5 42.6M108.9 54.8L110.2 58.5M112.3 72.6L112.1 76.5M108.6 90.4L107 93.9M98.4 105.4L95.5 108M83.3 115.4L79.6 116.7M65.5 118.8L61.6 118.6M47.7 115.1L44.2 113.5M32.7 104.9L30.1 102M22.7 89.8L21.4 86.1M19.3 72L19.5 68.1M23 54.2L24.6 50.7M33.2 39.2L36.1 36.6M48.3 29.2L52 27.9M70.7 47.7L73.1 48.2M71.6 53.4L73.3 54M75.5 49.1L77.6 50.1M75.2 54.9L76.8 55.8M78.8 52.9L80.6 54.2M86.7 58.4L87.9 60.4M90.5 67.4L90.8 69.8M85.5 70.4L85.6 72.3M90.9 72.3L90.8 74.7M87.3 74.5L87 76.5M88.7 76.9L88.2 79M84.7 78.1L84.1 79.8M89 82L88 84.1M83.2 81.7L82.3 83.3M86.7 86.3L85.3 88.2M81.1 84.9L79.8 86.3M82.4 86L81.1 87.5M82.3 88.8L80.6 90.3M81 87.6L79.5 88.9M79.5 89L77.8 90.2M79.7 93.2L77.7 94.4M75.4 95.5L73.1 96.3M71.5 91.2L69.7 91.7M65.8 97.4L63.4 97.3M63.6 93.8L61.6 93.5M60.9 96.9L58.5 96.4M60 91.2L58.3 90.6M56.8 93.9L54.8 92.9M48 90L46.4 88.3M50.5 87.5L49.2 86M46.4 85.2L45.2 83.3M47.8 84.3L46.8 82.5M42.6 81.9L41.8 79.6M46.9 78L46.4 76.2M41.1 77.2L40.8 74.8M46.1 74.2L46 72.3M42.5 72.3L42.6 70.1M41.2 67.4L41.7 65M46.9 66.5L47.5 64.8M42.6 62.6L43.6 60.5M48.4 62.9L49.3 61.3M46.4 59.3L47.7 57.5M48.1 54.5L49.8 52.9M52.1 55.6L53.8 54.4M52.1 55.6L53.8 54.4M51.9 51.4L53.9 50.2M56.9 50.7L59 50M60.1 53.4L61.9 52.9M60.9 47.6L63.3 47.3M76.2 39.9L78.3 40.7M76.7 38.2L79 39M77.3 36.5L79.6 37.3M77.8 34.8L80.3 35.7M78.4 33.1L80.9 34M97.4 59.8L98.2 61.9M99.1 59.1L99.9 61.4M100.8 58.5L101.6 60.8M102.4 57.8L103.3 60.3M104.1 57.2L105 59.7M98.2 82.7L97.4 84.8M99.9 83.2L99.1 85.5M101.6 83.8L100.8 86.1M103.3 84.3L102.4 86.8M105 84.9L104.1 87.4M78.3 103.9L76.2 104.7M79 105.6L76.7 106.4M79.6 107.3L77.3 108.1M80.3 108.9L77.8 109.8M80.9 110.6L78.4 111.5M56 103L53.9 102.3M55.4 104.7L53.3 103.9M54.9 106.4L52.6 105.6M54.3 108.1L52 107.3M53.8 109.8L51.3 108.9M34.2 84.8L33.4 82.7M32.5 85.5L31.7 83.2M30.8 86.1L30 83.8M29.2 86.8L28.3 84.3M27.5 87.4L26.6 84.9M33.4 61.9L34.2 59.8M31.7 61.4L32.5 59.1M30 60.8L30.8 58.5M28.3 60.3L29.2 57.8M26.6 59.7L27.5 57.2M53.3 40.7L55.4 39.9M52.6 39L54.9 38.2M52 37.3L54.3 36.5M51.3 35.7L53.8 34.8M50.7 34L53.2 33.1M87.8 90.8L86.3 92.3M91.6 64.8L92.1 66.7M95.3 43.6L97.3 45.8M79.3 29.7L82.4 30.8M58.6 33.6L61.5 33.2M65.3 109.9L62.6 109.8M50.1 42.1L52.4 41M99 59L99.9 61.5M98.3 94.6L96.5 96.9M60.9 116.7L57.6 116.3M33.6 71.9L33.7 69.5M48.5 103.7L46.3 102.3M76.6 38.2L79.1 39.1M85.3 102.3L83.1 103.7M65.3 111.7L62.4 111.5M26.3 55.4L27.7 52.5M45.3 40.8L47.7 39.4M36.5 95.8L34.8 93.6M93.8 49.9L95.3 52M70.5 29.6L73.7 30.1M88.9 49.8L90.5 51.5M37.7 53L39.2 51M55.3 36.2L58 35.5M65.3 111.7L62.4 111.5M29.7 82.8L29 80.1M26.1 92.9L24.7 89.9M86.5 34.7L89.2 36.3M57.8 44.7L59.9 44.2M55.8 47.3L57.7 46.6M51.8 37.4L54.4 36.5M46.8 48.5L48.6 47.2M56.6 101.3L54.5 100.6M36.3 52L37.8 49.9M96.8 63.3L97.4 65.6M65.3 113.4L62.3 113.3M56.6 101.3L54.5 100.6M35.1 62.6L35.9 60.3M90.1 36.9L92.6 38.8M105.3 89.2L103.9 92.1M85.6 36.2L88.2 37.8M103.3 69.1L103.4 71.8M53.4 48.4L55.2 47.6M78.8 48.7L80.5 49.7M49.3 40.5L51.7 39.4M91.1 42.2L93.3 44.1M93.9 91.6L92.4 93.6M95.3 92.6L93.8 94.7M66.2 41.8L68.4 41.9M43.4 37.8L46 36.2M46.8 106.8L44.3 105.3M40.6 92.5L39.2 90.5M65.3 113.4L62.3 113.3M46.3 42.3L48.5 40.9M35.3 71.9L35.4 69.7M51.8 37.4L54.4 36.5M40.2 97.3L38.4 95.4M85.6 110.4L82.7 111.8M48.5 103.7L46.3 102.3M107.3 55.7L108.4 58.8M30.9 90.4L29.6 87.8M26.7 68L27.1 65.1M103.4 93L101.8 95.7M96.3 72.7L96.2 74.9M101.6 72.7L101.5 75.4M66.2 47.2L67.9 47.3M71.8 44.2L73.7 44.7M81.1 50.1L82.6 51.3M85.1 53.5L86.4 54.9M89.9 56.7L90.9 58.4M90.4 77.5L89.9 79.3M92.2 83.6L91.3 85.5M75.1 95.6L73.4 96.2M70.7 98.8L68.8 99M44.7 86L43.8 84.5M37.1 71.9L37.2 69.9M50.2 48.2L51.9 47.2" fill="none" stroke="#e6ffb6" stroke-width="1.45"/><circle cx="65.8" cy="72.3" r="10.4" fill="none" stroke="#dcfaa8" stroke-width="1.1"/><g fill="#dcfaa8"><circle cx="65.8" cy="58.7" r="0.45"/><circle cx="71" cy="59.7" r="0.45"/><circle cx="75.4" cy="62.7" r="0.45"/><circle cx="78.4" cy="67.1" r="0.45"/><circle cx="79.4" cy="72.3" r="0.45"/><circle cx="78.4" cy="77.5" r="0.45"/><circle cx="75.4" cy="81.9" r="0.45"/><circle cx="71" cy="84.9" r="0.45"/><circle cx="65.8" cy="85.9" r="0.45"/><circle cx="60.6" cy="84.9" r="0.45"/><circle cx="56.2" cy="81.9" r="0.45"/><circle cx="53.2" cy="77.5" r="0.45"/><circle cx="52.2" cy="72.3" r="0.45"/><circle cx="53.2" cy="67.1" r="0.45"/><circle cx="56.2" cy="62.7" r="0.45"/><circle cx="60.6" cy="59.7" r="0.45"/></g></svg>
<span class="t" style="top:-1.3px;font-size:10.4px;color:#e4f3cf;letter-spacing:0.244px;left:3.4px;">Prismatica</span>
</div>
<div class="cell" style="left:677.85px;top:136.94px;width:130.5px;height:130.8px;background:#116d35;box-shadow:inset 0 0 0 1px #18ae52;">
<svg style="left:0;top:0" width="130.5" height="130.8" viewBox="0 0 130.5 130.8"><g fill="#b4f2ca"><circle cx="67.44" cy="50.27" r="0.85"/><circle cx="72.29" cy="51.5" r="0.65"/><circle cx="82.17" cy="58.42" r="0.75"/><circle cx="85.44" cy="62.24" r="0.75"/><circle cx="86.97" cy="67.84" r="0.75"/><circle cx="87.05" cy="74.29" r="0.85"/><circle cx="86.29" cy="79.16" r="0.65"/><circle cx="83.95" cy="84.38" r="0.85"/><circle cx="79.77" cy="89.41" r="0.85"/><circle cx="75.5" cy="92.02" r="0.75"/><circle cx="70.05" cy="93.78" r="0.65"/><circle cx="63.59" cy="94.26" r="0.85"/><circle cx="53.42" cy="91" r="0.85"/><circle cx="48.55" cy="86.62" r="0.85"/><circle cx="46.08" cy="82.3" r="0.75"/><circle cx="44.02" cy="76.97" r="0.75"/><circle cx="43.77" cy="70.5" r="0.65"/><circle cx="44.25" cy="65.5" r="0.65"/><circle cx="46.8" cy="60.26" r="0.65"/><circle cx="51.6" cy="55.83" r="0.75"/><circle cx="55.69" cy="53.15" r="0.65"/><circle cx="60.86" cy="50.56" r="0.65"/></g></svg>
<span class="t" style="top:-1.3px;font-size:10.4px;color:#d2f1dd;letter-spacing:0.243px;left:3.4px;">Busy Arp Bass</span>
</div>
<div class="cell" style="left:677.85px;top:271.88px;width:130.5px;height:130.8px;background:#106b6c;box-shadow:inset 0 0 0 1px #15b8b9;">
<svg style="left:0;top:0" width="130.5" height="130.8" viewBox="0 0 130.5 130.8"><g fill="#bdf3f3"><circle cx="70.7" cy="51.5" r="0.9"/><circle cx="44.3" cy="67.4" r="0.9"/><circle cx="87" cy="77.4" r="0.9"/><circle cx="60.6" cy="93.7" r="0.9"/><circle cx="43.6" cy="37.7" r="0.9"/><circle cx="87.9" cy="107.5" r="0.9"/></g></svg>
<span class="t" style="top:-1.3px;font-size:10.4px;color:#cfeeee;letter-spacing:0.18px;left:3.4px;">Gentle Sine Bells</span>
</div>
<div class="cell" style="left:3.15px;top:406.82px;width:130.5px;height:130.8px;background:#243e5e;box-shadow:inset 0 0 0 1px #3269a5;">
<svg style="left:0;top:0" width="130.5" height="130.8" viewBox="0 0 130.5 130.8"><circle cx="65.4" cy="72.3" r="32.1" fill="none" stroke="#cbe2fa" stroke-width="0.9"/><path d="M65.63 28.02L66.25 27.89L66.88 27.59L67.46 28.58L68.09 28.31L68.78 27.34L69.38 27.69L69.97 28.1L70.58 28.23L71.16 28.53L71.79 28.47L72.41 28.5L72.9 29.31L73.64 28.7L74.19 29.08L74.78 29.28L75.26 29.91L75.86 30.04L76.58 29.69L76.88 30.9L77.75 30.06L78.18 30.75L78.69 31.15L79.17 31.61L79.82 31.59L80.4 31.75L81.02 31.82L81.46 32.34L82.08 32.42L82.63 32.67L83.05 33.21L83.59 33.47L83.76 34.49L84.52 34.28L84.55 35.52L85.16 35.6L85.52 36.15L86.27 36.01L86.53 36.71L87 37.06L87.48 37.37L87.66 38.16L87.93 38.78L88.46 39L88.59 39.78L89.18 39.93L89.21 40.82L89.7 41.09L90.4 41.09L90.53 41.81L91.01 42.1L91.33 42.58L91.91 42.76L91.96 43.51L92.2 44.06L92.97 44.05L93.05 44.75L93.29 45.27L93.38 45.94L94.05 46.05L94.35 46.51L94.67 46.94L94.98 47.39L94.86 48.19L95.52 48.34L95.53 49.01L96 49.33L96.14 49.88L96.41 50.34L96.64 50.83L97.17 51.11L97.3 51.66L97.39 52.23L97.91 52.53L97.78 53.23L98.3 53.53L98.29 54.14L98.8 54.46L99.01 54.95L98.9 55.6L99.41 55.93L99.2 56.61L99.55 57.02L99.88 57.45L99.67 58.1L100.18 58.46L100.32 58.96L100.1 59.6L100.63 59.96L100.52 60.55L100.7 61.04L101.11 61.45L100.71 62.11L101.33 62.47L101.18 63.05L101.57 63.48L101.56 64.02L101.6 64.54L101.47 65.09L101.51 65.61L101.78 66.08L101.96 66.58L102.06 67.08L102.11 67.6L102.13 68.12L101.66 68.68L101.76 69.18L102.04 69.67L101.91 70.2L102.01 70.7L101.8 71.22L101.9 71.73L101.81 72.24L101.87 72.75L101.64 73.25L101.98 73.77L101.87 74.28L101.71 74.78L101.35 75.26L101.39 75.77L101.39 76.27L101.48 76.79L101.04 77.25L100.98 77.74L101.29 78.31L100.75 78.72L100.74 79.23L100.64 79.73L100.62 80.24L100.3 80.68L100.12 81.15L100.24 81.7L99.8 82.1L99.77 82.61L99.78 83.14L99.6 83.61L99.25 84.02L99.07 84.49L98.83 84.93L98.63 85.39L98.44 85.85L98.03 86.22L97.94 86.72L97.9 87.25L97.64 87.68L97.15 87.99L96.84 88.39L96.78 88.91L96.55 89.36L96.26 89.76L95.77 90.05L95.45 90.43L95.42 90.98L94.9 91.24L94.86 91.8L94.3 92.01L94.03 92.42L93.88 92.92L93.65 93.35L93.28 93.7L92.95 94.06L92.61 94.41L92.28 94.78L91.77 94.98L91.55 95.44L91.13 95.71L90.78 96.05L90.55 96.5L90.1 96.74L89.73 97.06L89.3 97.31L89.12 97.83L88.7 98.08L88.3 98.37L87.92 98.66L87.49 98.91L87.18 99.3L86.65 99.4L86.4 99.87L85.92 100.03L85.48 100.24L85.07 100.5L84.69 100.79L84.33 101.12L83.86 101.28L83.46 101.54L83.06 101.81L82.59 101.95L82.2 102.24L81.73 102.38L81.32 102.62L80.86 102.78L80.47 103.05L80.03 103.24L79.62 103.51L79.14 103.6L78.73 103.86L78.27 103.99L77.79 104.09L77.32 104.18L76.9 104.43L76.46 104.6L75.95 104.58L75.49 104.71L75.08 104.97L74.58 104.95L74.12 105.07L73.68 105.25L73.18 105.21L72.72 105.33L72.27 105.47L71.78 105.42L71.33 105.58L70.85 105.59L70.4 105.79L69.92 105.75L69.45 105.74L68.97 105.74L68.52 105.91L68.05 105.94L67.57 105.92L67.1 105.84L66.63 105.9L66.16 105.82L65.69 105.93L65.22 105.84L64.76 105.8L64.29 105.81L63.82 105.74L63.36 105.71L62.9 105.58L62.43 105.59L61.96 105.57L61.51 105.41L61.05 105.37L60.59 105.29L60.14 105.15L59.69 105.02L59.22 105.01L58.77 104.89L58.33 104.71L57.87 104.67L57.43 104.49L56.98 104.39L56.55 104.2L56.11 104.07L55.68 103.9L55.25 103.71L54.82 103.55L54.37 103.45L53.97 103.21L53.53 103.05L53.1 102.9L52.69 102.68L52.28 102.46L51.87 102.27L51.47 102.03L51.05 101.86L50.65 101.64L50.24 101.42L49.86 101.15L49.47 100.92L49.08 100.68L48.69 100.44L48.32 100.17L47.97 99.87L47.57 99.64L47.21 99.37L46.86 99.08L46.5 98.79L46.13 98.53L45.78 98.24L45.43 97.96L45.09 97.65L44.77 97.33L44.43 97.02L44.1 96.72L43.78 96.4L43.45 96.09L43.13 95.77L42.82 95.44L42.52 95.1L42.22 94.76L41.93 94.42L41.64 94.07L41.36 93.72L41.08 93.37L40.8 93.01L40.53 92.66L40.27 92.29L40.29 92.27L40.59 92.61L40.89 92.94L41.2 93.27L41.51 93.59L41.83 93.9L42.15 94.21L42.48 94.51L42.8 94.82L43.14 95.11L43.47 95.41L43.8 95.71L44.16 95.97L44.51 96.25L44.84 96.54L45.2 96.8L45.57 97.06L45.91 97.33L46.3 97.55L46.66 97.82L47.03 98.06L47.4 98.29L47.78 98.52L48.16 98.75L48.55 98.95L48.94 99.16L49.32 99.39L49.7 99.6L50.12 99.75L50.5 99.97L50.89 100.17L51.31 100.31L51.68 100.55L52.09 100.7L52.51 100.84L52.91 101.03L53.32 101.19L53.75 101.27L54.17 101.41L54.56 101.6L55 101.67L55.4 101.86L55.82 101.96L56.26 102L56.68 102.11L57.09 102.25L57.52 102.35L57.94 102.45L58.36 102.55L58.8 102.58L59.23 102.65L59.66 102.69L60.09 102.72L60.51 102.84L60.94 102.84L61.38 102.87L61.81 102.87L62.23 102.98L62.66 103.01L63.1 102.89L63.53 102.94L63.95 103.02L64.38 102.93L64.81 102.97L65.24 103L65.67 102.87L66.09 102.83L66.52 102.78L66.94 102.76L67.37 102.7L67.79 102.72L68.22 102.71L68.63 102.49L69.05 102.47L69.48 102.5L69.89 102.36L70.3 102.23L70.72 102.16L71.14 102.09L71.53 101.92L71.96 101.88L72.34 101.66L72.79 101.71L73.17 101.51L73.55 101.28L73.94 101.14L74.35 101.04L74.78 101L75.17 100.85L75.51 100.53L75.91 100.42L76.34 100.37L76.66 100.03L77.09 99.98L77.44 99.72L77.83 99.57L78.17 99.31L78.56 99.17L78.88 98.87L79.27 98.72L79.68 98.6L80.03 98.38L80.44 98.24L80.75 97.96L81.02 97.59L81.38 97.39L81.68 97.09L82.13 97.01L82.41 96.68L82.79 96.5L83.04 96.13L83.39 95.92L83.67 95.6L84.09 95.46L84.31 95.07L84.63 94.82L84.89 94.48L85.3 94.33L85.55 93.98L85.82 93.66L86.12 93.38L86.4 93.08L86.68 92.78L86.9 92.42L87.26 92.19L87.37 91.74L87.75 91.52L87.85 91.07L88.3 90.91L88.44 90.5L88.8 90.26L88.89 89.81L89.05 89.42L89.26 89.07L89.48 88.73L89.88 88.5L90.11 88.16L90.33 87.82L90.5 87.44L90.56 87L90.75 86.64L90.9 86.26L91 85.86L91.2 85.5L91.49 85.19L91.55 84.77L91.85 84.47L91.84 84.02L92.15 83.71L92.2 83.29L92.5 82.97L92.48 82.53L92.61 82.15L92.85 81.81L92.88 81.39L93.09 81.03L93.12 80.62L93.38 80.27L93.4 79.86L93.43 79.45L93.6 79.07L93.67 78.67L93.65 78.25L93.84 77.88L93.84 77.47L93.76 77.05L94.1 76.69L94.12 76.28L94.2 75.89L94.04 75.46L94.04 75.06L94.16 74.66L93.94 74.25L94.28 73.86L93.96 73.45L93.96 73.05L93.93 72.65L94.17 72.25L93.91 71.85L93.84 71.46L94.03 71.05L93.73 70.67L93.86 70.26L93.91 69.86L93.66 69.48L93.69 69.08L93.51 68.7L93.54 68.29L93.76 67.86L93.6 67.48L93.63 67.07L93.44 66.7L93.29 66.32L93.07 65.96L93.24 65.51L92.85 65.2L92.73 64.82L92.65 64.43L92.86 63.96L92.64 63.61L92.52 63.23L92.45 62.83L92.31 62.45L92.16 62.08L91.9 61.76L91.89 61.33L91.52 61.05L91.62 60.57L91.48 60.19L91.19 59.89L90.93 59.57L90.91 59.13L90.61 58.84L90.44 58.48L90.31 58.09L89.97 57.83L89.82 57.45L89.6 57.12L89.18 56.92L89.21 56.42L88.84 56.19L88.52 55.93L88.37 55.55L88.12 55.24L87.81 54.98L87.37 54.82L87.43 54.27L86.92 54.18L86.79 53.77L86.47 53.53L86.27 53.18L85.68 53.19L85.31 53.01L85.13 52.63L84.55 52.68L84.25 52.44L83.69 52.48L83.38 52.26L82.94 52.19L82.56 52.06L82.2 51.92L81.87 51.74L81.23 51.97L80.88 51.84L80.81 51.33L80.29 51.43L80.05 51.15L79.61 51.15L78.77 51.79L78.37 51.79L78.27 51.3L78.01 51.07L77.61 51.07L76.86 51.71L76.76 51.2L76.06 51.83L75.58 52.06L75.64 51.22L75.01 51.78L74.81 51.47L74.26 51.92L73.71 52.44L73.72 51.61L73.03 52.53L72.74 52.45L72.44 52.41L72.26 52.02L72.03 51.78L71.75 51.67L71.38 51.84L71.15 51.57L70.88 51.42L70.29 52.52L70.04 52.38L69.7 52.57L69.42 52.55L69.23 52.04L69.04 51.47L68.61 52.24L68.43 51.51L68.01 52.46L67.71 52.65L67.53 51.66L67.2 52.14L66.91 52.16L66.65 51.85L66.32 52.75L66.08 51.67L65.78 52.49L65.5 52.45Z" fill="#cbe2fa"/></svg>
<span class="t" style="top:-1.3px;font-size:10.4px;color:#d3e5f7;letter-spacing:0.208px;left:3.4px;">Sparkle and…ine Cymbal</span>
</div>
<div class="cell" style="left:138.09px;top:406.82px;width:130.5px;height:130.8px;background:#224670;box-shadow:inset 0 0 0 1px #337bcf;">
<svg style="left:0;top:0" width="130.5" height="130.8" viewBox="0 0 130.5 130.8"><circle cx="65.4" cy="72.3" r="32.1" fill="none" stroke="#cbe2fa" stroke-width="0.9"/><path d="M89.2 50.8L96.2 44.6L95.9 45.3L95.6 46L95.4 46.7L95.1 47.4L94.8 48L94.6 48.7L94.3 49.3L94.1 49.9L93.9 50.4L93.7 51L93.5 51.5L93.3 52L93.1 52.5L92.9 53L92.8 53.5L92.7 53.9L92.6 54.3L92.6 54.7L92.5 55.1L92.1 55L91.7 54.9L91.3 54.8L90.9 54.8L90.4 54.8L90 54.8L89.5 54.8L88.9 54.9L88.4 55L87.9 55.1L87.3 55.2L86.7 55.4L86.1 55.5L85.5 55.7L84.9 55.9L84.3 56.2L83.6 56.4L83 56.7L82.3 57ZM93.2 56.2L93.7 55.9L94.2 56L94.6 56.1L95 56.2L95.2 56.4L95.4 56.7L95.4 57L95.3 57.4L95.2 57.8L94.9 58.2L94.5 58.7L93.8 58.7L93.3 58.7L92.9 58.6L92.6 58.4L92.4 58.2L92.3 58L92.2 57.7L92.3 57.4L92.4 57L92.7 56.6ZM95.1 60.2L95.9 60L96.5 60.1L96.9 60.2L97.3 60.4L97.5 60.6L97.6 60.9L97.6 61.2L97.4 61.6L97.2 62L96.7 62.4L96.1 62.9L95.3 62.9L94.7 62.8L94.2 62.6L93.9 62.5L93.7 62.3L93.6 62L93.6 61.7L93.8 61.4L94.1 61L94.5 60.6ZM97.2 67.7L98.2 67.7L98.9 67.9L99.4 68.1L99.8 68.4L100 68.7L100 69L99.9 69.3L99.6 69.6L99.1 69.9L98.4 70.3L97.5 70.6L96.5 70.4L95.8 70.2L95.2 70L94.9 69.7L94.7 69.5L94.6 69.2L94.8 69L95.1 68.7L95.6 68.3L96.2 68ZM97.5 73.1L106.3 73.4L105.6 73.7L104.8 74L104.1 74.3L103.5 74.6L102.8 74.9L102.2 75.2L101.6 75.5L101 75.7L100.4 76L99.9 76.2L99.4 76.5L98.9 76.7L98.5 76.9L98.1 77.2L98 77.5L98.6 77.9L99 78.2L99.3 78.6L99.4 78.9L99.3 79.2L99.1 79.5L98.7 79.7L98.2 79.9L97.5 80L96.5 80.1L95.7 79.6L95.2 79.2L94.8 78.8L94.5 78.5L94.4 78.2L94.5 77.9L94.7 77.7L95 77.5L95.5 77.3L96.2 77.2L96.2 76.9L95.9 76.6L95.5 76.3L95.1 76L94.7 75.6L94.2 75.3L93.7 75L93.2 74.7L92.6 74.4L92 74.2L91.4 73.9L90.8 73.6L90.1 73.4L89.4 73.1L88.7 72.9ZM96.1 81.6L96.8 81.9L97.1 82.3L97.4 82.7L97.5 83L97.5 83.4L97.4 83.6L97.2 83.9L96.9 84.1L96.4 84.2L95.9 84.3L95.2 84.3L94.6 83.8L94.3 83.4L94.1 83L93.9 82.7L93.9 82.4L94 82.1L94.2 81.9L94.5 81.8L94.9 81.6L95.4 81.5ZM90.4 92.4L97 97.9L96.3 97.8L95.6 97.7L94.9 97.5L94.3 97.4L93.6 97.3L93 97.1L92.4 97L91.8 96.9L91.2 96.8L90.7 96.7L90.1 96.6L89.6 96.5L89.1 96.5L88.7 96.4L88.2 96.4L87.8 96.3L87.4 96.3L87.1 96.4L86.7 96.3L86.7 96L86.7 95.6L86.8 95.2L86.8 94.8L86.7 94.4L86.7 93.9L86.6 93.5L86.4 93L86.3 92.5L86.1 92L86 91.5L85.7 90.9L85.5 90.4L85.3 89.9L85 89.3L84.7 88.8L84.4 88.2L84 87.7L83.7 87.1ZM86.5 96.5L87 97.2L87.2 97.8L87.2 98.3L87.2 98.7L87 99L86.8 99.2L86.5 99.3L86.1 99.2L85.6 99.1L85 98.8L84.3 98.3L84 97.4L83.9 96.8L83.8 96.3L83.8 95.9L84 95.6L84.2 95.5L84.5 95.4L84.8 95.5L85.3 95.6L85.9 95.9ZM83.9 98.5L84.2 99.1L84.2 99.6L84.1 100L84 100.4L83.8 100.6L83.5 100.8L83.2 100.8L82.9 100.8L82.5 100.7L82 100.5L81.5 100.1L81.4 99.4L81.4 98.9L81.5 98.5L81.6 98.2L81.8 98L82 97.8L82.3 97.8L82.6 97.8L83 97.9L83.5 98.1ZM77 102.2L80 110.2L79.4 109.7L78.8 109.2L78.3 108.7L77.8 108.3L77.3 107.8L76.8 107.3L76.3 106.9L75.9 106.5L75.4 106.1L75 105.7L74.6 105.4L74.2 105L73.8 104.7L73.4 104.5L73.1 104.2L72.7 104L72.4 103.8L72.2 104.5L72.1 105.1L71.9 105.6L71.6 106L71.4 106.2L71.1 106.2L70.8 106.1L70.4 105.9L70.1 105.5L69.7 105L69.3 104.2L69.5 103.3L69.7 102.7L69.9 102.2L70.1 101.9L70.3 101.7L70.6 101.7L70.9 101.8L71.2 102L71.5 102.4L71.9 102.9L72.3 103.4L72.5 103.1L72.7 102.8L72.9 102.4L73.1 102L73.2 101.6L73.4 101.1L73.5 100.6L73.6 100L73.7 99.5L73.8 98.9L73.9 98.3L73.9 97.7L73.9 97L73.9 96.4L73.9 95.7L73.9 95L73.8 94.3ZM64.9 104.4L64.7 113.4L64.3 112.6L64 111.8L63.7 111.1L63.4 110.4L63.1 109.7L62.8 109L62.6 108.3L62.3 107.7L62 107.1L61.8 106.6L61.6 106.1L61.3 105.6L61.1 105.1L60.8 104.7L60.6 104.4L60.4 104.1L60.1 104L60.4 103.9L60.7 103.7L61 103.4L61.3 103.1L61.7 102.7L62 102.3L62.3 101.9L62.6 101.4L62.9 100.8L63.2 100.3L63.5 99.6L63.8 99L64 98.3L64.3 97.6L64.5 96.9L64.8 96.2L65 95.4ZM59.9 103.9L59.7 104.4L59.4 104.7L59.1 105L58.7 105.1L58.4 105.1L58.1 105.1L57.9 104.9L57.6 104.7L57.4 104.3L57.2 103.9L57.1 103.3L57.5 102.9L57.9 102.6L58.2 102.4L58.5 102.2L58.8 102.2L59 102.3L59.3 102.4L59.5 102.7L59.7 103L59.9 103.4ZM55.6 102.9L55.3 103.5L54.8 103.8L54.5 104.1L54.1 104.2L53.8 104.2L53.5 104.1L53.3 103.9L53.1 103.6L52.9 103.1L52.9 102.6L52.9 101.8L53.4 101.3L53.8 101L54.2 100.8L54.5 100.6L54.8 100.6L55.1 100.7L55.3 100.9L55.4 101.2L55.6 101.6L55.7 102.2ZM51.4 101.2L51.1 101.7L50.6 101.9L50.2 102.1L49.9 102.2L49.5 102.1L49.3 102L49.1 101.7L48.9 101.4L48.8 101L48.8 100.5L48.9 99.8L49.4 99.4L49.9 99.2L50.3 99.1L50.6 99L50.9 99L51.1 99.2L51.3 99.4L51.4 99.7L51.5 100.1L51.6 100.6ZM47.5 99L47.2 99.3L46.8 99.4L46.4 99.4L46.1 99.4L45.8 99.3L45.6 99.1L45.4 98.9L45.2 98.6L45.2 98.2L45.1 97.8L45.2 97.2L45.7 97.1L46.1 97L46.5 97L46.8 97L47 97.1L47.3 97.3L47.4 97.5L47.6 97.8L47.7 98.1L47.7 98.5ZM42.8 95.1L35.9 101.8L36.2 101L36.4 100.3L36.7 99.6L36.9 98.9L37.1 98.2L37.4 97.5L37.6 96.9L37.8 96.3L38 95.7L38.2 95.1L38.4 94.6L38.6 94L38.7 93.5L38.9 93L39 92.6L39.1 92.1L39.1 91.7L39.2 91.3L39.3 90.9L39.7 91L40 91.1L40.4 91.1L40.9 91.1L41.3 91.1L41.8 91L42.3 91L42.9 90.9L43.4 90.8L44 90.6L44.5 90.4L45.1 90.2L45.7 90L46.3 89.8L46.9 89.5L47.6 89.2L48.2 88.9L48.8 88.6L49.5 88.2ZM38.2 89.4L37.7 89.6L37.2 89.6L36.7 89.5L36.4 89.4L36.2 89.2L36 88.9L36 88.6L36 88.3L36.2 87.9L36.4 87.4L36.8 86.9L37.5 86.8L38 86.9L38.4 87L38.7 87.1L38.9 87.3L39 87.5L39.1 87.8L39 88.1L38.9 88.5L38.7 89ZM36.1 85.4L35.4 85.6L34.9 85.6L34.5 85.4L34.1 85.3L33.9 85L33.8 84.8L33.8 84.4L33.9 84.1L34.2 83.7L34.5 83.2L35 82.8L35.8 82.8L36.3 82.9L36.7 83L37.1 83.2L37.3 83.4L37.4 83.6L37.4 83.9L37.2 84.3L37 84.6L36.7 85.1ZM33.8 78L32.9 78L32.2 77.9L31.7 77.6L31.3 77.4L31.1 77.1L31.1 76.8L31.2 76.5L31.5 76.2L31.9 75.8L32.5 75.5L33.4 75.1L34.4 75.3L35 75.5L35.5 75.7L35.9 75.9L36.1 76.2L36.1 76.4L36 76.7L35.7 77L35.3 77.3L34.7 77.7ZM33.3 72.4L23 72.3L23.8 71.9L24.7 71.6L25.5 71.3L26.3 70.9L27 70.6L27.7 70.3L28.4 70L29.1 69.8L29.8 69.5L30.4 69.2L31 69L31.5 68.7L32 68.5L32.5 68.3L32.9 68L32.8 67.7L32.3 67.3L31.9 67L31.6 66.6L31.5 66.3L31.6 66L31.8 65.8L32.1 65.5L32.6 65.3L33.2 65.2L34.1 65.1L34.9 65.5L35.4 65.9L35.8 66.3L36 66.6L36.1 66.9L36 67.1L35.9 67.4L35.5 67.6L35 67.8L34.4 67.9L34.3 68.2L34.6 68.5L35 68.8L35.4 69.2L35.9 69.5L36.5 69.8L37 70.1L37.6 70.4L38.3 70.6L38.9 70.9L39.6 71.2L40.4 71.4L41.1 71.7L41.9 71.9L42.8 72.1L43.6 72.3ZM34.7 63L34 62.7L33.7 62.3L33.4 61.9L33.3 61.6L33.3 61.2L33.4 61L33.6 60.7L33.9 60.5L34.4 60.4L34.9 60.3L35.6 60.3L36.2 60.8L36.5 61.2L36.7 61.6L36.9 61.9L36.9 62.2L36.8 62.5L36.6 62.7L36.3 62.8L35.9 63L35.4 63.1ZM36 59.3L35.6 59L35.4 58.6L35.2 58.2L35.2 57.9L35.2 57.6L35.4 57.3L35.6 57.1L35.9 56.9L36.3 56.8L36.7 56.7L37.3 56.7L37.7 57.2L37.9 57.7L38 58L38 58.3L38 58.6L37.9 58.9L37.7 59.1L37.4 59.2L37 59.4L36.6 59.5ZM40.1 52.6L32.9 46.9L33.6 47L34.3 47.2L35.1 47.3L35.8 47.4L36.4 47.6L37.1 47.7L37.7 47.8L38.4 48L39 48.1L39.5 48.2L40.1 48.3L40.6 48.4L41.1 48.5L41.6 48.5L42.1 48.6L42.5 48.6L42.9 48.6L43.3 48.6L43.7 48.6L43.7 49L43.7 49.4L43.7 49.8L43.7 50.2L43.8 50.7L43.9 51.1L44 51.6L44.1 52.1L44.3 52.6L44.5 53.1L44.7 53.7L45 54.2L45.2 54.8L45.5 55.3L45.9 55.9L46.2 56.5L46.6 57L46.9 57.6L47.4 58.2Z" fill="#cbe2fa"/></svg>
<span class="t" style="top:-1.3px;font-size:10.4px;color:#d3e5f7;letter-spacing:0.38px;left:3.4px;">Flow Hi Hat Topper 02</span>
</div>
<div class="cell" style="left:273.03px;top:406.82px;width:130.5px;height:130.8px;background:#224670;box-shadow:inset 0 0 0 1px #337bcf;">
<svg style="left:0;top:0" width="130.5" height="130.8" viewBox="0 0 130.5 130.8"><circle cx="65.4" cy="72.3" r="32.1" fill="none" stroke="#cbe2fa" stroke-width="0.9"/><path d="M89.2 50.8L96.2 44.6L95.9 45.3L95.6 46L95.4 46.7L95.1 47.4L94.8 48L94.6 48.7L94.3 49.3L94.1 49.9L93.9 50.4L93.7 51L93.5 51.5L93.3 52L93.1 52.5L92.9 53L92.8 53.5L92.7 53.9L92.6 54.3L92.6 54.7L92.5 55.1L92.1 55L91.7 54.9L91.3 54.8L90.9 54.8L90.4 54.8L90 54.8L89.5 54.8L88.9 54.9L88.4 55L87.9 55.1L87.3 55.2L86.7 55.4L86.1 55.5L85.5 55.7L84.9 55.9L84.3 56.2L83.6 56.4L83 56.7L82.3 57ZM93.2 56.2L93.7 55.9L94.2 56L94.6 56.1L95 56.2L95.2 56.4L95.4 56.7L95.4 57L95.3 57.4L95.2 57.8L94.9 58.2L94.5 58.7L93.8 58.7L93.3 58.7L92.9 58.6L92.6 58.4L92.4 58.2L92.3 58L92.2 57.7L92.3 57.4L92.4 57L92.7 56.6ZM95.1 60.2L95.9 60L96.5 60.1L96.9 60.2L97.3 60.4L97.5 60.6L97.6 60.9L97.6 61.2L97.4 61.6L97.2 62L96.7 62.4L96.1 62.9L95.3 62.9L94.7 62.8L94.2 62.6L93.9 62.5L93.7 62.3L93.6 62L93.6 61.7L93.8 61.4L94.1 61L94.5 60.6ZM97.2 67.7L98.2 67.7L98.9 67.9L99.4 68.1L99.8 68.4L100 68.7L100 69L99.9 69.3L99.6 69.6L99.1 69.9L98.4 70.3L97.5 70.6L96.5 70.4L95.8 70.2L95.2 70L94.9 69.7L94.7 69.5L94.6 69.2L94.8 69L95.1 68.7L95.6 68.3L96.2 68ZM97.5 73.1L106.3 73.4L105.6 73.7L104.8 74L104.1 74.3L103.5 74.6L102.8 74.9L102.2 75.2L101.6 75.5L101 75.7L100.4 76L99.9 76.2L99.4 76.5L98.9 76.7L98.5 76.9L98.1 77.2L98 77.5L98.6 77.9L99 78.2L99.3 78.6L99.4 78.9L99.3 79.2L99.1 79.5L98.7 79.7L98.2 79.9L97.5 80L96.5 80.1L95.7 79.6L95.2 79.2L94.8 78.8L94.5 78.5L94.4 78.2L94.5 77.9L94.7 77.7L95 77.5L95.5 77.3L96.2 77.2L96.2 76.9L95.9 76.6L95.5 76.3L95.1 76L94.7 75.6L94.2 75.3L93.7 75L93.2 74.7L92.6 74.4L92 74.2L91.4 73.9L90.8 73.6L90.1 73.4L89.4 73.1L88.7 72.9ZM96.1 81.6L96.8 81.9L97.1 82.3L97.4 82.7L97.5 83L97.5 83.4L97.4 83.6L97.2 83.9L96.9 84.1L96.4 84.2L95.9 84.3L95.2 84.3L94.6 83.8L94.3 83.4L94.1 83L93.9 82.7L93.9 82.4L94 82.1L94.2 81.9L94.5 81.8L94.9 81.6L95.4 81.5ZM90.4 92.4L97 97.9L96.3 97.8L95.6 97.7L94.9 97.5L94.3 97.4L93.6 97.3L93 97.1L92.4 97L91.8 96.9L91.2 96.8L90.7 96.7L90.1 96.6L89.6 96.5L89.1 96.5L88.7 96.4L88.2 96.4L87.8 96.3L87.4 96.3L87.1 96.4L86.7 96.3L86.7 96L86.7 95.6L86.8 95.2L86.8 94.8L86.7 94.4L86.7 93.9L86.6 93.5L86.4 93L86.3 92.5L86.1 92L86 91.5L85.7 90.9L85.5 90.4L85.3 89.9L85 89.3L84.7 88.8L84.4 88.2L84 87.7L83.7 87.1ZM86.5 96.5L87 97.2L87.2 97.8L87.2 98.3L87.2 98.7L87 99L86.8 99.2L86.5 99.3L86.1 99.2L85.6 99.1L85 98.8L84.3 98.3L84 97.4L83.9 96.8L83.8 96.3L83.8 95.9L84 95.6L84.2 95.5L84.5 95.4L84.8 95.5L85.3 95.6L85.9 95.9ZM83.9 98.5L84.2 99.1L84.2 99.6L84.1 100L84 100.4L83.8 100.6L83.5 100.8L83.2 100.8L82.9 100.8L82.5 100.7L82 100.5L81.5 100.1L81.4 99.4L81.4 98.9L81.5 98.5L81.6 98.2L81.8 98L82 97.8L82.3 97.8L82.6 97.8L83 97.9L83.5 98.1ZM77 102.2L80 110.2L79.4 109.7L78.8 109.2L78.3 108.7L77.8 108.3L77.3 107.8L76.8 107.3L76.3 106.9L75.9 106.5L75.4 106.1L75 105.7L74.6 105.4L74.2 105L73.8 104.7L73.4 104.5L73.1 104.2L72.7 104L72.4 103.8L72.2 104.5L72.1 105.1L71.9 105.6L71.6 106L71.4 106.2L71.1 106.2L70.8 106.1L70.4 105.9L70.1 105.5L69.7 105L69.3 104.2L69.5 103.3L69.7 102.7L69.9 102.2L70.1 101.9L70.3 101.7L70.6 101.7L70.9 101.8L71.2 102L71.5 102.4L71.9 102.9L72.3 103.4L72.5 103.1L72.7 102.8L72.9 102.4L73.1 102L73.2 101.6L73.4 101.1L73.5 100.6L73.6 100L73.7 99.5L73.8 98.9L73.9 98.3L73.9 97.7L73.9 97L73.9 96.4L73.9 95.7L73.9 95L73.8 94.3ZM64.9 104.4L64.7 113.4L64.3 112.6L64 111.8L63.7 111.1L63.4 110.4L63.1 109.7L62.8 109L62.6 108.3L62.3 107.7L62 107.1L61.8 106.6L61.6 106.1L61.3 105.6L61.1 105.1L60.8 104.7L60.6 104.4L60.4 104.1L60.1 104L60.4 103.9L60.7 103.7L61 103.4L61.3 103.1L61.7 102.7L62 102.3L62.3 101.9L62.6 101.4L62.9 100.8L63.2 100.3L63.5 99.6L63.8 99L64 98.3L64.3 97.6L64.5 96.9L64.8 96.2L65 95.4ZM59.9 103.9L59.7 104.4L59.4 104.7L59.1 105L58.7 105.1L58.4 105.1L58.1 105.1L57.9 104.9L57.6 104.7L57.4 104.3L57.2 103.9L57.1 103.3L57.5 102.9L57.9 102.6L58.2 102.4L58.5 102.2L58.8 102.2L59 102.3L59.3 102.4L59.5 102.7L59.7 103L59.9 103.4ZM55.6 102.9L55.3 103.5L54.8 103.8L54.5 104.1L54.1 104.2L53.8 104.2L53.5 104.1L53.3 103.9L53.1 103.6L52.9 103.1L52.9 102.6L52.9 101.8L53.4 101.3L53.8 101L54.2 100.8L54.5 100.6L54.8 100.6L55.1 100.7L55.3 100.9L55.4 101.2L55.6 101.6L55.7 102.2ZM51.4 101.2L51.1 101.7L50.6 101.9L50.2 102.1L49.9 102.2L49.5 102.1L49.3 102L49.1 101.7L48.9 101.4L48.8 101L48.8 100.5L48.9 99.8L49.4 99.4L49.9 99.2L50.3 99.1L50.6 99L50.9 99L51.1 99.2L51.3 99.4L51.4 99.7L51.5 100.1L51.6 100.6ZM47.5 99L47.2 99.3L46.8 99.4L46.4 99.4L46.1 99.4L45.8 99.3L45.6 99.1L45.4 98.9L45.2 98.6L45.2 98.2L45.1 97.8L45.2 97.2L45.7 97.1L46.1 97L46.5 97L46.8 97L47 97.1L47.3 97.3L47.4 97.5L47.6 97.8L47.7 98.1L47.7 98.5ZM42.8 95.1L35.9 101.8L36.2 101L36.4 100.3L36.7 99.6L36.9 98.9L37.1 98.2L37.4 97.5L37.6 96.9L37.8 96.3L38 95.7L38.2 95.1L38.4 94.6L38.6 94L38.7 93.5L38.9 93L39 92.6L39.1 92.1L39.1 91.7L39.2 91.3L39.3 90.9L39.7 91L40 91.1L40.4 91.1L40.9 91.1L41.3 91.1L41.8 91L42.3 91L42.9 90.9L43.4 90.8L44 90.6L44.5 90.4L45.1 90.2L45.7 90L46.3 89.8L46.9 89.5L47.6 89.2L48.2 88.9L48.8 88.6L49.5 88.2ZM38.2 89.4L37.7 89.6L37.2 89.6L36.7 89.5L36.4 89.4L36.2 89.2L36 88.9L36 88.6L36 88.3L36.2 87.9L36.4 87.4L36.8 86.9L37.5 86.8L38 86.9L38.4 87L38.7 87.1L38.9 87.3L39 87.5L39.1 87.8L39 88.1L38.9 88.5L38.7 89ZM36.1 85.4L35.4 85.6L34.9 85.6L34.5 85.4L34.1 85.3L33.9 85L33.8 84.8L33.8 84.4L33.9 84.1L34.2 83.7L34.5 83.2L35 82.8L35.8 82.8L36.3 82.9L36.7 83L37.1 83.2L37.3 83.4L37.4 83.6L37.4 83.9L37.2 84.3L37 84.6L36.7 85.1ZM33.8 78L32.9 78L32.2 77.9L31.7 77.6L31.3 77.4L31.1 77.1L31.1 76.8L31.2 76.5L31.5 76.2L31.9 75.8L32.5 75.5L33.4 75.1L34.4 75.3L35 75.5L35.5 75.7L35.9 75.9L36.1 76.2L36.1 76.4L36 76.7L35.7 77L35.3 77.3L34.7 77.7ZM33.3 72.4L23 72.3L23.8 71.9L24.7 71.6L25.5 71.3L26.3 70.9L27 70.6L27.7 70.3L28.4 70L29.1 69.8L29.8 69.5L30.4 69.2L31 69L31.5 68.7L32 68.5L32.5 68.3L32.9 68L32.8 67.7L32.3 67.3L31.9 67L31.6 66.6L31.5 66.3L31.6 66L31.8 65.8L32.1 65.5L32.6 65.3L33.2 65.2L34.1 65.1L34.9 65.5L35.4 65.9L35.8 66.3L36 66.6L36.1 66.9L36 67.1L35.9 67.4L35.5 67.6L35 67.8L34.4 67.9L34.3 68.2L34.6 68.5L35 68.8L35.4 69.2L35.9 69.5L36.5 69.8L37 70.1L37.6 70.4L38.3 70.6L38.9 70.9L39.6 71.2L40.4 71.4L41.1 71.7L41.9 71.9L42.8 72.1L43.6 72.3ZM34.7 63L34 62.7L33.7 62.3L33.4 61.9L33.3 61.6L33.3 61.2L33.4 61L33.6 60.7L33.9 60.5L34.4 60.4L34.9 60.3L35.6 60.3L36.2 60.8L36.5 61.2L36.7 61.6L36.9 61.9L36.9 62.2L36.8 62.5L36.6 62.7L36.3 62.8L35.9 63L35.4 63.1ZM36 59.3L35.6 59L35.4 58.6L35.2 58.2L35.2 57.9L35.2 57.6L35.4 57.3L35.6 57.1L35.9 56.9L36.3 56.8L36.7 56.7L37.3 56.7L37.7 57.2L37.9 57.7L38 58L38 58.3L38 58.6L37.9 58.9L37.7 59.1L37.4 59.2L37 59.4L36.6 59.5ZM40.1 52.6L32.9 46.9L33.6 47L34.3 47.2L35.1 47.3L35.8 47.4L36.4 47.6L37.1 47.7L37.7 47.8L38.4 48L39 48.1L39.5 48.2L40.1 48.3L40.6 48.4L41.1 48.5L41.6 48.5L42.1 48.6L42.5 48.6L42.9 48.6L43.3 48.6L43.7 48.6L43.7 49L43.7 49.4L43.7 49.8L43.7 50.2L43.8 50.7L43.9 51.1L44 51.6L44.1 52.1L44.3 52.6L44.5 53.1L44.7 53.7L45 54.2L45.2 54.8L45.5 55.3L45.9 55.9L46.2 56.5L46.6 57L46.9 57.6L47.4 58.2Z" fill="#cbe2fa"/></svg>
<span class="t" style="top:-1.3px;font-size:10.4px;color:#d3e5f7;letter-spacing:0.38px;left:3.4px;">Flow Hi Hat Topper 02</span>
</div>
<div class="cell" style="left:407.97px;top:406.82px;width:130.5px;height:130.8px;background:#224670;box-shadow:inset 0 0 0 1px #337bcf;box-shadow:inset 0 0 0 1px #a9c3de;">
<div style="left:0px;top:0px;width:130.5px;height:15.3px;background:#c6e1fb;border-radius:4px 4px 0 0;"></div>
<svg style="left:0;top:0" width="130.5" height="130.8" viewBox="0 0 130.5 130.8"><circle cx="65.4" cy="72.3" r="32.1" fill="none" stroke="#cbe2fa" stroke-width="0.9"/><path d="M65.3 40.2L65.4 29.3L65.8 30.2L66.1 31.1L66.5 31.9L66.8 32.7L67.1 33.5L67.4 34.3L67.7 35.1L68 35.8L68.2 36.5L68.5 37.1L68.7 37.7L69 38.3L69.2 38.8L69.5 39.3L69.7 39.7L69.9 40.1L70.2 40.4L70.4 40.6L70.1 40.7L69.8 40.9L69.5 41.2L69.2 41.6L68.9 42L68.5 42.5L68.2 43L67.9 43.5L67.6 44.1L67.3 44.8L67 45.5L66.8 46.2L66.5 46.9L66.3 47.7L66 48.5L65.8 49.3L65.6 50.2L65.4 51.1ZM89.2 50.8L96.2 44.6L95.9 45.3L95.6 46L95.4 46.7L95.1 47.4L94.8 48L94.6 48.7L94.3 49.3L94.1 49.9L93.9 50.4L93.7 51L93.5 51.5L93.3 52L93.1 52.5L92.9 53L92.8 53.5L92.7 53.9L92.6 54.3L92.6 54.7L92.5 55.1L92.1 55L91.7 54.9L91.3 54.8L90.9 54.8L90.4 54.8L90 54.8L89.5 54.8L88.9 54.9L88.4 55L87.9 55.1L87.3 55.2L86.7 55.4L86.1 55.5L85.5 55.7L84.9 55.9L84.3 56.2L83.6 56.4L83 56.7L82.3 57ZM93.2 56.2L93.7 55.9L94.2 56L94.6 56.1L95 56.2L95.2 56.4L95.4 56.7L95.4 57L95.3 57.4L95.2 57.8L94.9 58.2L94.5 58.7L93.8 58.7L93.3 58.7L92.9 58.6L92.6 58.4L92.4 58.2L92.3 58L92.2 57.7L92.3 57.4L92.4 57L92.7 56.6ZM95.1 60.2L95.9 60L96.5 60.1L96.9 60.2L97.3 60.4L97.5 60.6L97.6 60.9L97.6 61.2L97.4 61.6L97.2 62L96.7 62.4L96.1 62.9L95.3 62.9L94.7 62.8L94.2 62.6L93.9 62.5L93.7 62.3L93.6 62L93.6 61.7L93.8 61.4L94.1 61L94.5 60.6ZM97.2 67.7L98.2 67.7L98.9 67.9L99.4 68.1L99.8 68.4L100 68.7L100 69L99.9 69.3L99.6 69.6L99.1 69.9L98.4 70.3L97.5 70.6L96.5 70.4L95.8 70.2L95.2 70L94.9 69.7L94.7 69.5L94.6 69.2L94.8 69L95.1 68.7L95.6 68.3L96.2 68ZM97.5 73.1L106.3 73.4L105.6 73.7L104.8 74L104.1 74.3L103.5 74.6L102.8 74.9L102.2 75.2L101.6 75.5L101 75.7L100.4 76L99.9 76.2L99.4 76.5L98.9 76.7L98.5 76.9L98.1 77.2L98 77.5L98.6 77.9L99 78.2L99.3 78.6L99.4 78.9L99.3 79.2L99.1 79.5L98.7 79.7L98.2 79.9L97.5 80L96.5 80.1L95.7 79.6L95.2 79.2L94.8 78.8L94.5 78.5L94.4 78.2L94.5 77.9L94.7 77.7L95 77.5L95.5 77.3L96.2 77.2L96.2 76.9L95.9 76.6L95.5 76.3L95.1 76L94.7 75.6L94.2 75.3L93.7 75L93.2 74.7L92.6 74.4L92 74.2L91.4 73.9L90.8 73.6L90.1 73.4L89.4 73.1L88.7 72.9ZM96.1 81.6L96.8 81.9L97.1 82.3L97.4 82.7L97.5 83L97.5 83.4L97.4 83.6L97.2 83.9L96.9 84.1L96.4 84.2L95.9 84.3L95.2 84.3L94.6 83.8L94.3 83.4L94.1 83L93.9 82.7L93.9 82.4L94 82.1L94.2 81.9L94.5 81.8L94.9 81.6L95.4 81.5ZM94.3 86.3L94.8 86.6L95 87.1L95.2 87.5L95.3 87.8L95.2 88.2L95.1 88.4L94.8 88.6L94.5 88.8L94.1 88.9L93.6 88.9L92.9 88.8L92.5 88.3L92.3 87.8L92.2 87.4L92.1 87.1L92.1 86.8L92.3 86.6L92.5 86.4L92.8 86.3L93.2 86.2L93.7 86.1ZM92.1 90.2L92.6 90.7L92.9 91.2L93.1 91.7L93.1 92.1L93.1 92.4L92.9 92.6L92.6 92.8L92.2 92.9L91.7 92.9L91.1 92.8L90.3 92.5L89.9 91.8L89.7 91.3L89.5 90.8L89.5 90.4L89.5 90.2L89.7 89.9L89.9 89.8L90.3 89.7L90.8 89.8L91.4 89.8ZM87.4 95.7L93.2 102.1L92.5 101.8L91.8 101.6L91.1 101.3L90.4 101.1L89.8 100.9L89.2 100.7L88.6 100.5L88 100.3L87.5 100.1L86.9 99.9L86.4 99.7L85.9 99.6L85.5 99.4L85 99.3L84.6 99.2L84.2 99.1L83.8 99.1L83.4 99.1L83.1 99.1L83.3 98.8L83.4 98.4L83.4 98.1L83.5 97.7L83.5 97.2L83.5 96.8L83.5 96.3L83.4 95.8L83.4 95.3L83.3 94.8L83.2 94.2L83 93.7L82.9 93.1L82.7 92.5L82.5 91.9L82.2 91.3L82 90.7L81.7 90.1L81.4 89.5ZM82.5 99.5L82.7 100L82.6 100.4L82.5 100.8L82.4 101.1L82.2 101.4L81.9 101.5L81.6 101.6L81.3 101.5L80.9 101.4L80.5 101.2L80 100.9L80 100.3L80 99.8L80.2 99.5L80.3 99.2L80.5 99L80.7 98.8L81 98.8L81.3 98.8L81.7 98.9L82.1 99.1ZM78.5 101.6L78.7 102.2L78.6 102.7L78.5 103.1L78.3 103.4L78 103.6L77.8 103.7L77.5 103.7L77.1 103.6L76.7 103.4L76.3 103.1L75.9 102.7L75.9 102L76 101.5L76.2 101.1L76.3 100.8L76.6 100.6L76.8 100.5L77.1 100.5L77.4 100.6L77.8 100.8L78.2 101.1ZM74.3 103.1L74.4 103.7L74.2 104.1L74 104.4L73.8 104.7L73.5 104.9L73.2 104.9L72.9 104.9L72.6 104.8L72.3 104.6L71.9 104.3L71.5 103.8L71.7 103.2L71.9 102.8L72.1 102.5L72.3 102.2L72.6 102.1L72.8 102L73.1 102.1L73.4 102.2L73.7 102.4L74.1 102.6ZM70 104.1L70 104.7L69.7 105.1L69.5 105.5L69.2 105.7L68.9 105.9L68.6 105.9L68.3 105.8L68 105.6L67.7 105.3L67.4 104.9L67.1 104.4L67.3 103.7L67.6 103.3L67.8 103L68.1 102.7L68.3 102.6L68.6 102.6L68.9 102.6L69.1 102.8L69.5 103.1L69.8 103.5ZM64.9 104.4L64.7 113.4L64.3 112.6L64 111.8L63.7 111.1L63.4 110.4L63.1 109.7L62.8 109L62.6 108.3L62.3 107.7L62 107.1L61.8 106.6L61.6 106.1L61.3 105.6L61.1 105.1L60.8 104.7L60.6 104.4L60.4 104.1L60.1 104L60.4 103.9L60.7 103.7L61 103.4L61.3 103.1L61.7 102.7L62 102.3L62.3 101.9L62.6 101.4L62.9 100.8L63.2 100.3L63.5 99.6L63.8 99L64 98.3L64.3 97.6L64.5 96.9L64.8 96.2L65 95.4ZM59.9 103.9L59.7 104.4L59.4 104.7L59.1 105L58.7 105.1L58.4 105.1L58.1 105.1L57.9 104.9L57.6 104.7L57.4 104.3L57.2 103.9L57.1 103.3L57.5 102.9L57.9 102.6L58.2 102.4L58.5 102.2L58.8 102.2L59 102.3L59.3 102.4L59.5 102.7L59.7 103L59.9 103.4ZM55.6 102.9L55.3 103.5L54.8 103.8L54.5 104.1L54.1 104.2L53.8 104.2L53.5 104.1L53.3 103.9L53.1 103.6L52.9 103.1L52.9 102.6L52.9 101.8L53.4 101.3L53.8 101L54.2 100.8L54.5 100.6L54.8 100.6L55.1 100.7L55.3 100.9L55.4 101.2L55.6 101.6L55.7 102.2ZM51.4 101.2L51.1 101.7L50.6 101.9L50.2 102.1L49.9 102.2L49.5 102.1L49.3 102L49.1 101.7L48.9 101.4L48.8 101L48.8 100.5L48.9 99.8L49.4 99.4L49.9 99.2L50.3 99.1L50.6 99L50.9 99L51.1 99.2L51.3 99.4L51.4 99.7L51.5 100.1L51.6 100.6ZM47.5 99L47.2 99.3L46.8 99.4L46.4 99.4L46.1 99.4L45.8 99.3L45.6 99.1L45.4 98.9L45.2 98.6L45.2 98.2L45.1 97.8L45.2 97.2L45.7 97.1L46.1 97L46.5 97L46.8 97L47 97.1L47.3 97.3L47.4 97.5L47.6 97.8L47.7 98.1L47.7 98.5ZM42.8 95.1L35.9 101.8L36.2 101L36.4 100.3L36.7 99.6L36.9 98.9L37.1 98.2L37.4 97.5L37.6 96.9L37.8 96.3L38 95.7L38.2 95.1L38.4 94.6L38.6 94L38.7 93.5L38.9 93L39 92.6L39.1 92.1L39.1 91.7L39.2 91.3L39.3 90.9L39.7 91L40 91.1L40.4 91.1L40.9 91.1L41.3 91.1L41.8 91L42.3 91L42.9 90.9L43.4 90.8L44 90.6L44.5 90.4L45.1 90.2L45.7 90L46.3 89.8L46.9 89.5L47.6 89.2L48.2 88.9L48.8 88.6L49.5 88.2ZM38.2 89.4L37.7 89.6L37.2 89.6L36.7 89.5L36.4 89.4L36.2 89.2L36 88.9L36 88.6L36 88.3L36.2 87.9L36.4 87.4L36.8 86.9L37.5 86.8L38 86.9L38.4 87L38.7 87.1L38.9 87.3L39 87.5L39.1 87.8L39 88.1L38.9 88.5L38.7 89ZM36.1 85.4L35.4 85.6L34.9 85.6L34.5 85.4L34.1 85.3L33.9 85L33.8 84.8L33.8 84.4L33.9 84.1L34.2 83.7L34.5 83.2L35 82.8L35.8 82.8L36.3 82.9L36.7 83L37.1 83.2L37.3 83.4L37.4 83.6L37.4 83.9L37.2 84.3L37 84.6L36.7 85.1ZM33.8 78L32.9 78L32.2 77.9L31.7 77.6L31.3 77.4L31.1 77.1L31.1 76.8L31.2 76.5L31.5 76.2L31.9 75.8L32.5 75.5L33.4 75.1L34.4 75.3L35 75.5L35.5 75.7L35.9 75.9L36.1 76.2L36.1 76.4L36 76.7L35.7 77L35.3 77.3L34.7 77.7ZM33.3 72.4L23 72.3L23.8 71.9L24.7 71.6L25.5 71.3L26.3 70.9L27 70.6L27.7 70.3L28.4 70L29.1 69.8L29.8 69.5L30.4 69.2L31 69L31.5 68.7L32 68.5L32.5 68.3L32.9 68L32.8 67.7L32.3 67.3L31.9 67L31.6 66.6L31.5 66.3L31.6 66L31.8 65.8L32.1 65.5L32.6 65.3L33.2 65.2L34.1 65.1L34.9 65.5L35.4 65.9L35.8 66.3L36 66.6L36.1 66.9L36 67.1L35.9 67.4L35.5 67.6L35 67.8L34.4 67.9L34.3 68.2L34.6 68.5L35 68.8L35.4 69.2L35.9 69.5L36.5 69.8L37 70.1L37.6 70.4L38.3 70.6L38.9 70.9L39.6 71.2L40.4 71.4L41.1 71.7L41.9 71.9L42.8 72.1L43.6 72.3ZM34.7 63L34 62.7L33.7 62.3L33.4 61.9L33.3 61.6L33.3 61.2L33.4 61L33.6 60.7L33.9 60.5L34.4 60.4L34.9 60.3L35.6 60.3L36.2 60.8L36.5 61.2L36.7 61.6L36.9 61.9L36.9 62.2L36.8 62.5L36.6 62.7L36.3 62.8L35.9 63L35.4 63.1ZM36 59.3L35.6 59L35.4 58.6L35.2 58.2L35.2 57.9L35.2 57.6L35.4 57.3L35.6 57.1L35.9 56.9L36.3 56.8L36.7 56.7L37.3 56.7L37.7 57.2L37.9 57.7L38 58L38 58.3L38 58.6L37.9 58.9L37.7 59.1L37.4 59.2L37 59.4L36.6 59.5ZM38.1 55.4L37.5 54.9L37.2 54.4L37.1 53.9L37 53.5L37.1 53.2L37.2 52.9L37.5 52.8L37.9 52.7L38.4 52.7L39 52.8L39.8 53L40.2 53.7L40.5 54.2L40.6 54.6L40.7 55L40.7 55.3L40.5 55.5L40.3 55.7L39.9 55.7L39.4 55.7L38.8 55.7ZM43.4 48.9L37.4 42.2L38.1 42.5L38.8 42.7L39.5 43L40.1 43.2L40.8 43.4L41.4 43.7L42 43.9L42.6 44.1L43.1 44.3L43.7 44.5L44.2 44.7L44.7 44.8L45.2 45L45.7 45.1L46.1 45.3L46.5 45.3L46.9 45.4L47.3 45.5L47.7 45.5L47.6 45.9L47.5 46.3L47.4 46.7L47.4 47.1L47.4 47.5L47.4 48L47.5 48.5L47.5 49L47.6 49.5L47.7 50.1L47.8 50.6L48 51.2L48.2 51.7L48.3 52.3L48.6 52.9L48.8 53.5L49.1 54.2L49.3 54.8L49.6 55.4ZM65.3 40.2L65.4 29.3L65.7 40.2L65.4 51.1Z" fill="#cbe2fa"/></svg>
<span class="t" style="top:-1.3px;font-size:10.4px;color:#2d4a6d;letter-spacing:0.36px;left:3.4px;">Flow Hi Hat Topper 01</span>
</div>
<div class="cell" style="left:542.91px;top:406.82px;width:130.5px;height:130.8px;background:#243e5e;box-shadow:inset 0 0 0 1px #3269a5;box-shadow:inset 0 0 0 1px #a9c3de;">
<div style="left:0px;top:0px;width:130.5px;height:15.3px;background:#c6e1fb;border-radius:4px 4px 0 0;"></div>
<svg style="left:0;top:0" width="130.5" height="130.8" viewBox="0 0 130.5 130.8"><circle cx="65.4" cy="72.3" r="32.1" fill="none" stroke="#cbe2fa" stroke-width="0.9"/><path d="M78.6 43.1L82.3 35.3L82.6 35.4L82.9 35.6L83.2 35.7L83.5 35.9L83.8 36.2L84.1 36.4L84.4 36.7L84.6 36.9L84.8 37.3L85 37.6L85.2 38L85.4 38.4L85.5 38.9L85.6 39.3L85.7 39.8L85.8 40.3L85.8 40.8L85.9 41.4L85.9 41.9L85.9 42.4L86 42.9L86 43.5L86 44L86 44.4L86 44.9L86.1 45.3L86.1 45.8L86.2 46.1L86.3 46.5L86.4 46.8L86.5 47.2L86.6 47.5L86.8 47.7L86.9 48L87.1 48.2L87.2 48.5L87.4 48.7L87.5 49L87.2 48.9L87 48.8L86.7 48.6L86.4 48.5L86.2 48.4L85.9 48.3L85.6 48.3L85.3 48.2L84.9 48.2L84.6 48.2L84.2 48.3L83.8 48.3L83.4 48.4L83 48.6L82.5 48.7L82.1 48.9L81.7 49.1L81.2 49.3L80.8 49.5L80.4 49.7L79.9 49.9L79.5 50.1L79.1 50.3L78.7 50.5L78.4 50.7L78 50.9L77.7 51L77.4 51.1L77.1 51.2L76.8 51.2L76.6 51.3L76.3 51.3L76.1 51.2L75.9 51.2L75.7 51.2L75.5 51.1L75.3 51L75.1 50.9ZM95 59.9L103 56.7L103.1 57.1L103.3 57.4L103.4 57.7L103.5 58.1L103.5 58.4L103.6 58.8L103.6 59.2L103.6 59.5L103.5 59.9L103.4 60.3L103.3 60.7L103.1 61.1L102.9 61.5L102.7 62L102.4 62.4L102.1 62.8L101.8 63.2L101.5 63.6L101.1 64L100.8 64.5L100.4 64.9L100.1 65.2L99.8 65.6L99.5 66L99.2 66.3L98.9 66.7L98.7 67L98.5 67.4L98.3 67.7L98.1 68L98 68.3L97.9 68.6L97.8 68.9L97.7 69.2L97.6 69.5L97.6 69.8L97.6 70.1L97.4 70.3L97.3 70.1L97.2 69.8L97.1 69.5L97 69.3L96.9 69L96.7 68.7L96.5 68.5L96.3 68.2L96.1 68L95.8 67.8L95.5 67.5L95.2 67.3L94.8 67.1L94.4 66.9L94 66.7L93.6 66.6L93.1 66.4L92.7 66.3L92.2 66.1L91.8 66L91.3 65.8L90.8 65.7L90.4 65.6L90 65.5L89.6 65.4L89.3 65.2L88.9 65.1L88.6 65L88.4 64.8L88.1 64.7L87.9 64.5L87.8 64.4L87.6 64.2L87.5 64L87.4 63.9L87.3 63.7L87.2 63.5L87.1 63.3ZM94.6 85.5L102.4 89.2L102.3 89.5L102.1 89.8L102 90.1L101.8 90.4L101.5 90.7L101.3 91L101 91.3L100.8 91.5L100.4 91.7L100.1 91.9L99.7 92.1L99.3 92.3L98.8 92.4L98.4 92.5L97.9 92.6L97.4 92.7L96.9 92.7L96.3 92.8L95.8 92.8L95.3 92.8L94.8 92.9L94.2 92.9L93.7 92.9L93.3 92.9L92.8 92.9L92.4 93L91.9 93L91.6 93.1L91.2 93.2L90.9 93.3L90.5 93.4L90.2 93.5L90 93.7L89.7 93.8L89.5 94L89.2 94.1L89 94.3L88.7 94.4L88.8 94.1L88.9 93.9L89.1 93.6L89.2 93.3L89.3 93.1L89.4 92.8L89.4 92.5L89.5 92.2L89.5 91.8L89.5 91.5L89.4 91.1L89.4 90.7L89.3 90.3L89.1 89.9L89 89.4L88.8 89L88.6 88.6L88.4 88.1L88.2 87.7L88 87.3L87.8 86.8L87.6 86.4L87.4 86L87.2 85.6L87 85.3L86.8 84.9L86.7 84.6L86.6 84.3L86.5 84L86.5 83.7L86.4 83.5L86.4 83.2L86.5 83L86.5 82.8L86.5 82.6L86.6 82.4L86.7 82.2L86.8 82ZM77.8 101.9L81 109.9L80.6 110L80.3 110.2L80 110.3L79.6 110.4L79.3 110.4L78.9 110.5L78.5 110.5L78.2 110.5L77.8 110.4L77.4 110.3L77 110.2L76.6 110L76.2 109.8L75.7 109.6L75.3 109.3L74.9 109L74.5 108.7L74.1 108.4L73.7 108L73.2 107.7L72.8 107.3L72.5 107L72.1 106.7L71.7 106.4L71.4 106.1L71 105.8L70.7 105.6L70.3 105.4L70 105.2L69.7 105L69.4 104.9L69.1 104.8L68.8 104.7L68.5 104.6L68.2 104.5L67.9 104.5L67.6 104.5L67.4 104.3L67.6 104.2L67.9 104.1L68.2 104L68.4 103.9L68.7 103.8L69 103.6L69.2 103.4L69.5 103.2L69.7 103L69.9 102.7L70.2 102.4L70.4 102.1L70.6 101.7L70.8 101.3L71 100.9L71.1 100.5L71.3 100L71.4 99.6L71.6 99.1L71.7 98.7L71.9 98.2L72 97.7L72.1 97.3L72.2 96.9L72.3 96.5L72.5 96.2L72.6 95.8L72.7 95.5L72.9 95.3L73 95L73.2 94.8L73.3 94.7L73.5 94.5L73.7 94.4L73.8 94.3L74 94.2L74.2 94.1L74.4 94ZM52.2 101.5L48.5 109.3L48.2 109.2L47.9 109L47.6 108.9L47.3 108.7L47 108.4L46.7 108.2L46.4 107.9L46.2 107.7L46 107.3L45.8 107L45.6 106.6L45.4 106.2L45.3 105.7L45.2 105.3L45.1 104.8L45 104.3L45 103.8L44.9 103.2L44.9 102.7L44.9 102.2L44.8 101.7L44.8 101.1L44.8 100.6L44.8 100.2L44.8 99.7L44.7 99.3L44.7 98.8L44.6 98.5L44.5 98.1L44.4 97.8L44.3 97.4L44.2 97.1L44 96.9L43.9 96.6L43.7 96.4L43.6 96.1L43.4 95.9L43.3 95.6L43.6 95.7L43.8 95.8L44.1 96L44.4 96.1L44.6 96.2L44.9 96.3L45.2 96.3L45.5 96.4L45.9 96.4L46.2 96.4L46.6 96.3L47 96.3L47.4 96.2L47.8 96L48.3 95.9L48.7 95.7L49.1 95.5L49.6 95.3L50 95.1L50.4 94.9L50.9 94.7L51.3 94.5L51.7 94.3L52.1 94.1L52.4 93.9L52.8 93.7L53.1 93.6L53.4 93.5L53.7 93.4L54 93.4L54.2 93.3L54.5 93.3L54.7 93.4L54.9 93.4L55.1 93.4L55.3 93.5L55.5 93.6L55.7 93.7ZM35.8 84.7L27.8 87.9L27.7 87.5L27.5 87.2L27.4 86.9L27.3 86.5L27.3 86.2L27.2 85.8L27.2 85.4L27.2 85.1L27.3 84.7L27.4 84.3L27.5 83.9L27.7 83.5L27.9 83.1L28.1 82.6L28.4 82.2L28.7 81.8L29 81.4L29.3 81L29.7 80.6L30 80.1L30.4 79.7L30.7 79.4L31 79L31.3 78.6L31.6 78.3L31.9 77.9L32.1 77.6L32.3 77.2L32.5 76.9L32.7 76.6L32.8 76.3L32.9 76L33 75.7L33.1 75.4L33.2 75.1L33.2 74.8L33.2 74.5L33.4 74.3L33.5 74.5L33.6 74.8L33.7 75.1L33.8 75.3L33.9 75.6L34.1 75.9L34.3 76.1L34.5 76.4L34.7 76.6L35 76.8L35.3 77.1L35.6 77.3L36 77.5L36.4 77.7L36.8 77.9L37.2 78L37.7 78.2L38.1 78.3L38.6 78.5L39 78.6L39.5 78.8L40 78.9L40.4 79L40.8 79.1L41.2 79.2L41.5 79.4L41.9 79.5L42.2 79.6L42.4 79.8L42.7 79.9L42.9 80.1L43 80.2L43.2 80.4L43.3 80.6L43.4 80.7L43.5 80.9L43.6 81.1L43.7 81.3ZM36.2 59.1L28.4 55.4L28.5 55.1L28.7 54.8L28.8 54.5L29 54.2L29.3 53.9L29.5 53.6L29.8 53.3L30 53.1L30.4 52.9L30.7 52.7L31.1 52.5L31.5 52.3L32 52.2L32.4 52.1L32.9 52L33.4 51.9L33.9 51.9L34.5 51.8L35 51.8L35.5 51.8L36 51.7L36.6 51.7L37.1 51.7L37.5 51.7L38 51.7L38.4 51.6L38.9 51.6L39.2 51.5L39.6 51.4L39.9 51.3L40.3 51.2L40.6 51.1L40.8 50.9L41.1 50.8L41.3 50.6L41.6 50.5L41.8 50.3L42.1 50.2L42 50.5L41.9 50.7L41.7 51L41.6 51.3L41.5 51.5L41.4 51.8L41.4 52.1L41.3 52.4L41.3 52.8L41.3 53.1L41.4 53.5L41.4 53.9L41.5 54.3L41.7 54.7L41.8 55.2L42 55.6L42.2 56L42.4 56.5L42.6 56.9L42.8 57.3L43 57.8L43.2 58.2L43.4 58.6L43.6 59L43.8 59.3L44 59.7L44.1 60L44.2 60.3L44.3 60.6L44.3 60.9L44.4 61.1L44.4 61.4L44.3 61.6L44.3 61.8L44.3 62L44.2 62.2L44.1 62.4L44 62.6ZM53 42.7L49.8 34.7L50.2 34.6L50.5 34.4L50.8 34.3L51.2 34.2L51.5 34.2L51.9 34.1L52.3 34.1L52.6 34.1L53 34.2L53.4 34.3L53.8 34.4L54.2 34.6L54.6 34.8L55.1 35L55.5 35.3L55.9 35.6L56.3 35.9L56.7 36.2L57.1 36.6L57.6 36.9L58 37.3L58.3 37.6L58.7 37.9L59.1 38.2L59.4 38.5L59.8 38.8L60.1 39L60.5 39.2L60.8 39.4L61.1 39.6L61.4 39.7L61.7 39.8L62 39.9L62.3 40L62.6 40.1L62.9 40.1L63.2 40.1L63.4 40.3L63.2 40.4L62.9 40.5L62.6 40.6L62.4 40.7L62.1 40.8L61.8 41L61.6 41.2L61.3 41.4L61.1 41.6L60.9 41.9L60.6 42.2L60.4 42.5L60.2 42.9L60 43.3L59.8 43.7L59.7 44.1L59.5 44.6L59.4 45L59.2 45.5L59.1 45.9L58.9 46.4L58.8 46.9L58.7 47.3L58.6 47.7L58.5 48.1L58.3 48.4L58.2 48.8L58.1 49.1L57.9 49.3L57.8 49.6L57.6 49.8L57.5 49.9L57.3 50.1L57.1 50.2L57 50.3L56.8 50.4L56.6 50.5L56.4 50.6Z" fill="#cbe2fa"/></svg>
<span class="t" style="top:-1.3px;font-size:10.4px;color:#2d4a6d;letter-spacing:0.39px;left:3.4px;">Flow Hi Hat Topper 03</span>
</div>
<div class="cell" style="left:677.85px;top:406.82px;width:130.5px;height:130.8px;background:#243e5e;box-shadow:inset 0 0 0 1px #3269a5;">
<svg style="left:0;top:0" width="130.5" height="130.8" viewBox="0 0 130.5 130.8"><circle cx="65.4" cy="72.3" r="32.1" fill="none" stroke="#cbe2fa" stroke-width="0.9"/><path d="M78.6 43.1L82.3 35.3L82.6 35.4L82.9 35.6L83.2 35.7L83.5 35.9L83.8 36.2L84.1 36.4L84.4 36.7L84.6 36.9L84.8 37.3L85 37.6L85.2 38L85.4 38.4L85.5 38.9L85.6 39.3L85.7 39.8L85.8 40.3L85.8 40.8L85.9 41.4L85.9 41.9L85.9 42.4L86 42.9L86 43.5L86 44L86 44.4L86 44.9L86.1 45.3L86.1 45.8L86.2 46.1L86.3 46.5L86.4 46.8L86.5 47.2L86.6 47.5L86.8 47.7L86.9 48L87.1 48.2L87.2 48.5L87.4 48.7L87.5 49L87.2 48.9L87 48.8L86.7 48.6L86.4 48.5L86.2 48.4L85.9 48.3L85.6 48.3L85.3 48.2L84.9 48.2L84.6 48.2L84.2 48.3L83.8 48.3L83.4 48.4L83 48.6L82.5 48.7L82.1 48.9L81.7 49.1L81.2 49.3L80.8 49.5L80.4 49.7L79.9 49.9L79.5 50.1L79.1 50.3L78.7 50.5L78.4 50.7L78 50.9L77.7 51L77.4 51.1L77.1 51.2L76.8 51.2L76.6 51.3L76.3 51.3L76.1 51.2L75.9 51.2L75.7 51.2L75.5 51.1L75.3 51L75.1 50.9ZM95 59.9L103 56.7L103.1 57.1L103.3 57.4L103.4 57.7L103.5 58.1L103.5 58.4L103.6 58.8L103.6 59.2L103.6 59.5L103.5 59.9L103.4 60.3L103.3 60.7L103.1 61.1L102.9 61.5L102.7 62L102.4 62.4L102.1 62.8L101.8 63.2L101.5 63.6L101.1 64L100.8 64.5L100.4 64.9L100.1 65.2L99.8 65.6L99.5 66L99.2 66.3L98.9 66.7L98.7 67L98.5 67.4L98.3 67.7L98.1 68L98 68.3L97.9 68.6L97.8 68.9L97.7 69.2L97.6 69.5L97.6 69.8L97.6 70.1L97.4 70.3L97.3 70.1L97.2 69.8L97.1 69.5L97 69.3L96.9 69L96.7 68.7L96.5 68.5L96.3 68.2L96.1 68L95.8 67.8L95.5 67.5L95.2 67.3L94.8 67.1L94.4 66.9L94 66.7L93.6 66.6L93.1 66.4L92.7 66.3L92.2 66.1L91.8 66L91.3 65.8L90.8 65.7L90.4 65.6L90 65.5L89.6 65.4L89.3 65.2L88.9 65.1L88.6 65L88.4 64.8L88.1 64.7L87.9 64.5L87.8 64.4L87.6 64.2L87.5 64L87.4 63.9L87.3 63.7L87.2 63.5L87.1 63.3ZM94.6 85.5L102.4 89.2L102.3 89.5L102.1 89.8L102 90.1L101.8 90.4L101.5 90.7L101.3 91L101 91.3L100.8 91.5L100.4 91.7L100.1 91.9L99.7 92.1L99.3 92.3L98.8 92.4L98.4 92.5L97.9 92.6L97.4 92.7L96.9 92.7L96.3 92.8L95.8 92.8L95.3 92.8L94.8 92.9L94.2 92.9L93.7 92.9L93.3 92.9L92.8 92.9L92.4 93L91.9 93L91.6 93.1L91.2 93.2L90.9 93.3L90.5 93.4L90.2 93.5L90 93.7L89.7 93.8L89.5 94L89.2 94.1L89 94.3L88.7 94.4L88.8 94.1L88.9 93.9L89.1 93.6L89.2 93.3L89.3 93.1L89.4 92.8L89.4 92.5L89.5 92.2L89.5 91.8L89.5 91.5L89.4 91.1L89.4 90.7L89.3 90.3L89.1 89.9L89 89.4L88.8 89L88.6 88.6L88.4 88.1L88.2 87.7L88 87.3L87.8 86.8L87.6 86.4L87.4 86L87.2 85.6L87 85.3L86.8 84.9L86.7 84.6L86.6 84.3L86.5 84L86.5 83.7L86.4 83.5L86.4 83.2L86.5 83L86.5 82.8L86.5 82.6L86.6 82.4L86.7 82.2L86.8 82ZM77.8 101.9L81 109.9L80.6 110L80.3 110.2L80 110.3L79.6 110.4L79.3 110.4L78.9 110.5L78.5 110.5L78.2 110.5L77.8 110.4L77.4 110.3L77 110.2L76.6 110L76.2 109.8L75.7 109.6L75.3 109.3L74.9 109L74.5 108.7L74.1 108.4L73.7 108L73.2 107.7L72.8 107.3L72.5 107L72.1 106.7L71.7 106.4L71.4 106.1L71 105.8L70.7 105.6L70.3 105.4L70 105.2L69.7 105L69.4 104.9L69.1 104.8L68.8 104.7L68.5 104.6L68.2 104.5L67.9 104.5L67.6 104.5L67.4 104.3L67.6 104.2L67.9 104.1L68.2 104L68.4 103.9L68.7 103.8L69 103.6L69.2 103.4L69.5 103.2L69.7 103L69.9 102.7L70.2 102.4L70.4 102.1L70.6 101.7L70.8 101.3L71 100.9L71.1 100.5L71.3 100L71.4 99.6L71.6 99.1L71.7 98.7L71.9 98.2L72 97.7L72.1 97.3L72.2 96.9L72.3 96.5L72.5 96.2L72.6 95.8L72.7 95.5L72.9 95.3L73 95L73.2 94.8L73.3 94.7L73.5 94.5L73.7 94.4L73.8 94.3L74 94.2L74.2 94.1L74.4 94ZM52.2 101.5L48.5 109.3L48.2 109.2L47.9 109L47.6 108.9L47.3 108.7L47 108.4L46.7 108.2L46.4 107.9L46.2 107.7L46 107.3L45.8 107L45.6 106.6L45.4 106.2L45.3 105.7L45.2 105.3L45.1 104.8L45 104.3L45 103.8L44.9 103.2L44.9 102.7L44.9 102.2L44.8 101.7L44.8 101.1L44.8 100.6L44.8 100.2L44.8 99.7L44.7 99.3L44.7 98.8L44.6 98.5L44.5 98.1L44.4 97.8L44.3 97.4L44.2 97.1L44 96.9L43.9 96.6L43.7 96.4L43.6 96.1L43.4 95.9L43.3 95.6L43.6 95.7L43.8 95.8L44.1 96L44.4 96.1L44.6 96.2L44.9 96.3L45.2 96.3L45.5 96.4L45.9 96.4L46.2 96.4L46.6 96.3L47 96.3L47.4 96.2L47.8 96L48.3 95.9L48.7 95.7L49.1 95.5L49.6 95.3L50 95.1L50.4 94.9L50.9 94.7L51.3 94.5L51.7 94.3L52.1 94.1L52.4 93.9L52.8 93.7L53.1 93.6L53.4 93.5L53.7 93.4L54 93.4L54.2 93.3L54.5 93.3L54.7 93.4L54.9 93.4L55.1 93.4L55.3 93.5L55.5 93.6L55.7 93.7ZM35.8 84.7L27.8 87.9L27.7 87.5L27.5 87.2L27.4 86.9L27.3 86.5L27.3 86.2L27.2 85.8L27.2 85.4L27.2 85.1L27.3 84.7L27.4 84.3L27.5 83.9L27.7 83.5L27.9 83.1L28.1 82.6L28.4 82.2L28.7 81.8L29 81.4L29.3 81L29.7 80.6L30 80.1L30.4 79.7L30.7 79.4L31 79L31.3 78.6L31.6 78.3L31.9 77.9L32.1 77.6L32.3 77.2L32.5 76.9L32.7 76.6L32.8 76.3L32.9 76L33 75.7L33.1 75.4L33.2 75.1L33.2 74.8L33.2 74.5L33.4 74.3L33.5 74.5L33.6 74.8L33.7 75.1L33.8 75.3L33.9 75.6L34.1 75.9L34.3 76.1L34.5 76.4L34.7 76.6L35 76.8L35.3 77.1L35.6 77.3L36 77.5L36.4 77.7L36.8 77.9L37.2 78L37.7 78.2L38.1 78.3L38.6 78.5L39 78.6L39.5 78.8L40 78.9L40.4 79L40.8 79.1L41.2 79.2L41.5 79.4L41.9 79.5L42.2 79.6L42.4 79.8L42.7 79.9L42.9 80.1L43 80.2L43.2 80.4L43.3 80.6L43.4 80.7L43.5 80.9L43.6 81.1L43.7 81.3ZM36.2 59.1L28.4 55.4L28.5 55.1L28.7 54.8L28.8 54.5L29 54.2L29.3 53.9L29.5 53.6L29.8 53.3L30 53.1L30.4 52.9L30.7 52.7L31.1 52.5L31.5 52.3L32 52.2L32.4 52.1L32.9 52L33.4 51.9L33.9 51.9L34.5 51.8L35 51.8L35.5 51.8L36 51.7L36.6 51.7L37.1 51.7L37.5 51.7L38 51.7L38.4 51.6L38.9 51.6L39.2 51.5L39.6 51.4L39.9 51.3L40.3 51.2L40.6 51.1L40.8 50.9L41.1 50.8L41.3 50.6L41.6 50.5L41.8 50.3L42.1 50.2L42 50.5L41.9 50.7L41.7 51L41.6 51.3L41.5 51.5L41.4 51.8L41.4 52.1L41.3 52.4L41.3 52.8L41.3 53.1L41.4 53.5L41.4 53.9L41.5 54.3L41.7 54.7L41.8 55.2L42 55.6L42.2 56L42.4 56.5L42.6 56.9L42.8 57.3L43 57.8L43.2 58.2L43.4 58.6L43.6 59L43.8 59.3L44 59.7L44.1 60L44.2 60.3L44.3 60.6L44.3 60.9L44.4 61.1L44.4 61.4L44.3 61.6L44.3 61.8L44.3 62L44.2 62.2L44.1 62.4L44 62.6ZM53 42.7L49.8 34.7L50.2 34.6L50.5 34.4L50.8 34.3L51.2 34.2L51.5 34.2L51.9 34.1L52.3 34.1L52.6 34.1L53 34.2L53.4 34.3L53.8 34.4L54.2 34.6L54.6 34.8L55.1 35L55.5 35.3L55.9 35.6L56.3 35.9L56.7 36.2L57.1 36.6L57.6 36.9L58 37.3L58.3 37.6L58.7 37.9L59.1 38.2L59.4 38.5L59.8 38.8L60.1 39L60.5 39.2L60.8 39.4L61.1 39.6L61.4 39.7L61.7 39.8L62 39.9L62.3 40L62.6 40.1L62.9 40.1L63.2 40.1L63.4 40.3L63.2 40.4L62.9 40.5L62.6 40.6L62.4 40.7L62.1 40.8L61.8 41L61.6 41.2L61.3 41.4L61.1 41.6L60.9 41.9L60.6 42.2L60.4 42.5L60.2 42.9L60 43.3L59.8 43.7L59.7 44.1L59.5 44.6L59.4 45L59.2 45.5L59.1 45.9L58.9 46.4L58.8 46.9L58.7 47.3L58.6 47.7L58.5 48.1L58.3 48.4L58.2 48.8L58.1 49.1L57.9 49.3L57.8 49.6L57.6 49.8L57.5 49.9L57.3 50.1L57.1 50.2L57 50.3L56.8 50.4L56.6 50.5L56.4 50.6Z" fill="#cbe2fa"/></svg>
<span class="t" style="top:-1.3px;font-size:10.4px;color:#d3e5f7;letter-spacing:0.39px;left:3.4px;">Flow Hi Hat Topper 03</span>
</div>
<div class="cell" style="left:3.15px;top:541.76px;width:130.5px;height:130.8px;background:#171719;border-radius:4px;"></div>
<div class="cell" style="left:138.09px;top:541.76px;width:130.5px;height:130.8px;background:#171719;border-radius:4px;"></div>
<div class="cell" style="left:273.03px;top:541.76px;width:130.5px;height:130.8px;background:#362576;box-shadow:inset 0 0 0 1px #583cc8;">
<svg style="left:0;top:0" width="130.5" height="130.8" viewBox="0 0 130.5 130.8"><g fill="none" stroke="#d8ccff" stroke-width="1.45"><path d="M66.66 30.81A41.8 41.8 0 1 1 65.34 30.81"/></g></svg>
<span class="t" style="top:-1.3px;font-size:10.4px;color:#ddd6f7;letter-spacing:0.315px;left:3.4px;">Classic Analog Arp</span>
<svg style="left:110.6px;top:115.6px;" width="17" height="12" viewBox="0 0 17 12"><g fill="none" stroke="#ddd6f7" stroke-width="0.85" stroke-linecap="round"><circle cx="5.7" cy="9.3" r="1.3"/><circle cx="11" cy="3.2" r="1.3"/><path d="M6.6 8.3 L10.1 4.2 M12.3 3.2 H15.2 M1.3 9.3 H4.4"/></g></svg>
</div>
<div class="cell" style="left:407.97px;top:541.76px;width:130.5px;height:130.8px;background:#362576;box-shadow:inset 0 0 0 1px #583cc8;">
<svg style="left:0;top:0" width="130.5" height="130.8" viewBox="0 0 130.5 130.8"><g fill="none" stroke="#d8ccff" stroke-width="1.45"><path d="M66.66 30.81A41.8 41.8 0 1 1 65.34 30.81"/><path d="M37.81 37.78A44.8 44.8 0 0 1 51.86 30.09" stroke-width="1.25"/><path d="M69.83 51.34A21.6 21.6 0 0 1 82.74 58.95" stroke-width="1.25"/><path d="M87.16 76.94A21.6 21.6 0 0 1 79.18 89.71" stroke-width="1.25"/><path d="M61.55 93.74A21.6 21.6 0 0 1 48.91 85.81" stroke-width="1.25"/><path d="M44.91 67.92A21.6 21.6 0 0 1 52.67 55.6" stroke-width="1.25"/></g></svg>
<span class="t" style="top:-1.3px;font-size:10.4px;color:#ddd6f7;letter-spacing:0.315px;left:3.4px;">Classic Analog Arp</span>
<svg style="left:110.6px;top:115.6px;" width="17" height="12" viewBox="0 0 17 12"><g fill="none" stroke="#ddd6f7" stroke-width="0.85" stroke-linecap="round"><circle cx="5.7" cy="9.3" r="1.3"/><circle cx="11" cy="3.2" r="1.3"/><path d="M6.6 8.3 L10.1 4.2 M12.3 3.2 H15.2 M1.3 9.3 H4.4"/></g></svg>
</div>
<div class="cell" style="left:542.91px;top:541.76px;width:130.5px;height:130.8px;background:#362576;box-shadow:inset 0 0 0 1px #583cc8;">
<svg style="left:0;top:0" width="130.5" height="130.8" viewBox="0 0 130.5 130.8"><g fill="none" stroke="#d8ccff" stroke-width="1.45"><path d="M66.66 30.81A41.8 41.8 0 1 1 65.34 30.81"/><path d="M37.81 37.78A44.8 44.8 0 0 1 51.86 30.09" stroke-width="1.25"/><path d="M69.83 51.34A21.6 21.6 0 0 1 82.74 58.95" stroke-width="1.25"/><path d="M87.16 76.94A21.6 21.6 0 0 1 79.18 89.71" stroke-width="1.25"/><path d="M61.55 93.74A21.6 21.6 0 0 1 48.91 85.81" stroke-width="1.25"/><path d="M44.91 67.92A21.6 21.6 0 0 1 52.67 55.6" stroke-width="1.25"/></g></svg>
<span class="t" style="top:-1.3px;font-size:10.4px;color:#ddd6f7;letter-spacing:0.315px;left:3.4px;">Classic Analog Arp</span>
<svg style="left:110.6px;top:115.6px;" width="17" height="12" viewBox="0 0 17 12"><g fill="none" stroke="#ddd6f7" stroke-width="0.85" stroke-linecap="round"><circle cx="5.7" cy="9.3" r="1.3"/><circle cx="11" cy="3.2" r="1.3"/><path d="M6.6 8.3 L10.1 4.2 M12.3 3.2 H15.2 M1.3 9.3 H4.4"/></g></svg>
</div>
<div class="cell" style="left:677.85px;top:541.76px;width:130.5px;height:130.8px;background:#362576;box-shadow:inset 0 0 0 1px #583cc8;">
<svg style="left:0;top:0" width="130.5" height="130.8" viewBox="0 0 130.5 130.8"><g fill="none" stroke="#d8ccff" stroke-width="1.45"><path d="M66.66 30.81A41.8 41.8 0 1 1 65.34 30.81"/><path d="M37.81 37.78A44.8 44.8 0 0 1 51.86 30.09" stroke-width="1.25"/><path d="M69.83 51.34A21.6 21.6 0 0 1 82.74 58.95" stroke-width="1.25"/><path d="M87.16 76.94A21.6 21.6 0 0 1 79.18 89.71" stroke-width="1.25"/><path d="M61.55 93.74A21.6 21.6 0 0 1 48.91 85.81" stroke-width="1.25"/><path d="M44.91 67.92A21.6 21.6 0 0 1 52.67 55.6" stroke-width="1.25"/></g></svg>
<span class="t" style="top:-1.3px;font-size:10.4px;color:#ddd6f7;letter-spacing:0.315px;left:3.4px;">Classic Analog Arp</span>
</div>
</div>
<div class="scenes" style="left:485.5px;top:839.3px;width:772.5px;height:41.7px;background:#252527;overflow:hidden;">
<svg style="left:58.6px;top:5.7px;" width="18" height="10" viewBox="0 0 18 10"><path d="M2.6 7.4 L9 2.6 L15.4 7.4" fill="none" stroke="#fff" stroke-width="1.6" stroke-linecap="round" stroke-linejoin="round"/></svg>
<span class="t" style="top:21.9px;font-size:10.4px;color:#d0d0d4;left:-82.3px;width:300px;text-align:center;">1</span>
<div style="left:134.84px;top:0px;width:1px;height:41.7px;background:#2b2b2d;"></div>
<svg style="left:193.54px;top:5.7px;" width="18" height="10" viewBox="0 0 18 10"><path d="M2.6 7.4 L9 2.6 L15.4 7.4" fill="none" stroke="#fff" stroke-width="1.6" stroke-linecap="round" stroke-linejoin="round"/></svg>
<span class="t" style="top:21.9px;font-size:10.4px;color:#d0d0d4;left:52.64px;width:300px;text-align:center;">2</span>
<div style="left:269.78px;top:0px;width:1px;height:41.7px;background:#2b2b2d;"></div>
<svg style="left:328.48px;top:5.7px;" width="18" height="10" viewBox="0 0 18 10"><path d="M2.6 7.4 L9 2.6 L15.4 7.4" fill="none" stroke="#fff" stroke-width="1.6" stroke-linecap="round" stroke-linejoin="round"/></svg>
<span class="t" style="top:21.9px;font-size:10.4px;color:#d0d0d4;left:187.58px;width:300px;text-align:center;">3</span>
<div style="left:404.72px;top:0px;width:1px;height:41.7px;background:#2b2b2d;"></div>
<svg style="left:463.42px;top:5.7px;" width="18" height="10" viewBox="0 0 18 10"><path d="M2.6 7.4 L9 2.6 L15.4 7.4" fill="none" stroke="#fff" stroke-width="1.6" stroke-linecap="round" stroke-linejoin="round"/></svg>
<span class="t" style="top:21.9px;font-size:10.4px;color:#d0d0d4;left:322.52px;width:300px;text-align:center;">4</span>
<div style="left:539.96px;top:0px;width:134.94px;height:20.4px;background:#303032;"></div>
<div style="left:539.66px;top:0px;width:1px;height:41.7px;background:#2b2b2d;"></div>
<svg style="left:598.36px;top:5.7px;" width="18" height="10" viewBox="0 0 18 10"><path d="M2.6 7.4 L9 2.6 L15.4 7.4" fill="none" stroke="#fff" stroke-width="1.6" stroke-linecap="round" stroke-linejoin="round"/></svg>
<span class="t" style="top:21.9px;font-size:10.4px;color:#d0d0d4;left:457.46px;width:300px;text-align:center;">5</span>
<div style="left:674.6px;top:0px;width:1px;height:41.7px;background:#2b2b2d;"></div>
<svg style="left:733.3px;top:5.7px;" width="18" height="10" viewBox="0 0 18 10"><path d="M2.6 7.4 L9 2.6 L15.4 7.4" fill="none" stroke="#fff" stroke-width="1.6" stroke-linecap="round" stroke-linejoin="round"/></svg>
<span class="t" style="top:21.9px;font-size:10.4px;color:#d0d0d4;left:592.4px;width:300px;text-align:center;">6</span>
</div>
<div class="rightcol" style="left:1258px;top:97px;width:40px;height:784px;background:#18181a;">
<div style="left:0px;top:0px;width:40px;height:47px;background:#1c1c1e;"></div>
<div style="left:0px;top:46.4px;width:40px;height:1px;background:#232325;"></div>
<svg style="left:10px;top:17px;" width="21" height="12" viewBox="0 0 21 12"><path d="M8 1.9 V10.3 L1.9 6.1Z" fill="none" stroke="#fff" stroke-width="1.2" stroke-linejoin="round"/><path d="M12.3 1.7 V10.5 L19.7 6.1Z" fill="#fff" stroke="#fff" stroke-width="0.8" stroke-linejoin="round"/></svg>
<div style="left:0px;top:181.5px;width:40px;height:1px;background:#222224;"></div>
<svg style="left:10px;top:109.3px;" width="21" height="12" viewBox="0 0 21 12"><path d="M8 1.9 V10.3 L1.9 6.1Z" fill="none" stroke="#fff" stroke-width="1.2" stroke-linejoin="round"/><path d="M12.3 1.7 V10.5 L19.7 6.1Z" fill="#fff" stroke="#fff" stroke-width="0.8" stroke-linejoin="round"/></svg>
<div style="left:0px;top:316.44px;width:40px;height:1px;background:#222224;"></div>
<svg style="left:10px;top:244.24px;" width="21" height="12" viewBox="0 0 21 12"><path d="M8 1.9 V10.3 L1.9 6.1Z" fill="none" stroke="#fff" stroke-width="1.2" stroke-linejoin="round"/><path d="M12.3 1.7 V10.5 L19.7 6.1Z" fill="#fff" stroke="#fff" stroke-width="0.8" stroke-linejoin="round"/></svg>
<div style="left:0px;top:451.38px;width:40px;height:1px;background:#222224;"></div>
<svg style="left:10px;top:379.18px;" width="21" height="12" viewBox="0 0 21 12"><path d="M8 1.9 V10.3 L1.9 6.1Z" fill="none" stroke="#fff" stroke-width="1.2" stroke-linejoin="round"/><path d="M12.3 1.7 V10.5 L19.7 6.1Z" fill="#fff" stroke="#fff" stroke-width="0.8" stroke-linejoin="round"/></svg>
<div style="left:0px;top:451.82px;width:40px;height:134.94px;background:#272729;"></div>
<div style="left:0px;top:586.32px;width:40px;height:1px;background:#222224;"></div>
<svg style="left:10px;top:514.12px;" width="21" height="12" viewBox="0 0 21 12"><path d="M8 1.9 V10.3 L1.9 6.1Z" fill="none" stroke="#fff" stroke-width="1.2" stroke-linejoin="round"/><path d="M12.3 1.7 V10.5 L19.7 6.1Z" fill="#fff" stroke="#fff" stroke-width="0.8" stroke-linejoin="round"/></svg>
<div style="left:0px;top:721.26px;width:40px;height:1px;background:#222224;"></div>
<svg style="left:10px;top:649.06px;" width="21" height="12" viewBox="0 0 21 12"><path d="M8 1.9 V10.3 L1.9 6.1Z" fill="none" stroke="#fff" stroke-width="1.2" stroke-linejoin="round"/><path d="M12.3 1.7 V10.5 L19.7 6.1Z" fill="#fff" stroke="#fff" stroke-width="0.8" stroke-linejoin="round"/></svg>
<div style="left:0px;top:742.3px;width:40px;height:41.7px;background:#1d1d1f;"></div>
<div style="left:13.8px;top:756.8px;width:13.2px;height:13.2px;background:#fff;border-radius:1.8px;"></div>
</div>
<footer class="bottombar" style="left:0px;top:884px;width:1298px;height:50px;background:#222224;">
<div style="left:0px;top:48px;width:1298px;height:1px;background:#151517;"></div>
<div style="left:0px;top:49px;width:1298px;height:1px;background:#fdfdfd;"></div>
<svg style="left:20px;top:13px;" width="24" height="24" viewBox="0 0 24 24"><rect x="1.2" y="4.1" width="13.8" height="10.6" rx="2.4" fill="none" stroke="#fff" stroke-width="1.4"/><rect x="4.1" y="6.6" width="16.4" height="12.8" rx="2.6" fill="#fff" stroke="#222224" stroke-width="1.2"/><path d="M10.6 16.2 V10.8 L15.6 9.8 V15.2" fill="none" stroke="#222224" stroke-width="1.1"/><ellipse cx="9.6" cy="16.3" rx="1.4" ry="1.1" fill="#222224"/><ellipse cx="14.6" cy="15.3" rx="1.4" ry="1.1" fill="#222224"/></svg>
<div style="left:53.2px;top:9px;width:41.8px;height:30.4px;background:#aeaeb2;border-radius:6.5px;"></div>
<svg style="left:64px;top:15px;" width="20" height="20" viewBox="0 0 20 20"><rect x="3.75" y="2.8" width="12.9" height="5" rx="2.5" fill="none" stroke="#0a0a0b" stroke-width="1.3"/><circle cx="6.2" cy="5.3" r="1.45" fill="#0a0a0b"/><rect x="3.1" y="11" width="14.2" height="5.8" rx="2.9" fill="#0a0a0b"/><circle cx="14.4" cy="13.9" r="1.6" fill="#aeaeb2"/></svg>
<svg style="left:108px;top:13px;" width="20" height="24" viewBox="0 0 20 24"><rect x="3.95" y="3.75" width="11.8" height="14.5" rx="1.8" fill="none" stroke="#fff" stroke-width="1.5"/><path d="M9.8 5.6 V17" stroke="#fff" stroke-width="1.2"/><ellipse cx="9.8" cy="10" rx="1.45" ry="2.3" fill="#222224" stroke="#fff" stroke-width="1.2"/></svg>
<svg style="left:596px;top:15px;" width="20" height="20" viewBox="0 0 20 20"><path d="M2.6 16.6 L4 13.4 L12.6 5 L14.2 6.6 L5.8 15.2Z" fill="#fff"/><circle cx="14.9" cy="4.3" r="1.2" fill="#fff"/></svg>
<svg style="left:637.4px;top:13.5px;" width="24" height="24" viewBox="0 0 24 24"><g fill="none" stroke="#fff" stroke-width="1.4" stroke-linecap="round"><circle cx="11.8" cy="12.6" r="5.3"/><path d="M11.8 9.2 V12.6"/></g><g fill="#fff"><circle cx="11.8" cy="3.9" r="0.9"/><circle cx="5.6" cy="6.5" r="0.9"/><circle cx="18" cy="6.5" r="0.9"/><circle cx="3.2" cy="12.6" r="0.9"/><circle cx="20.4" cy="12.6" r="0.9"/><circle cx="5.6" cy="18.8" r="0.9"/><circle cx="18" cy="18.8" r="0.9"/></g></svg>
<svg style="left:682px;top:14px;" width="22" height="22" viewBox="0 0 22 22"><g fill="none" stroke="#fff" stroke-width="1.3" stroke-linecap="round"><path d="M4.8 3.8 V9 M4.8 14.6 V16.4 M10.8 3.8 V4.9 M10.8 10.5 V16.4 M16.8 3.8 V9 M16.8 14.6 V16.4"/><rect x="3.3" y="9.1" width="3" height="5.4" rx="1.5"/><rect x="9.3" y="5" width="3" height="5.4" rx="1.5"/><rect x="15.3" y="9.1" width="3" height="5.4" rx="1.5"/></g></svg>
<svg style="left:1258px;top:16px;" width="20" height="17" viewBox="0 0 20 17"><rect x="0.6" y="1" width="18.6" height="15" rx="1.8" fill="#fff"/><g fill="#222224"><rect x="3.6" y="1" width="2.5" height="8.6"/><rect x="8.6" y="1" width="2.5" height="8.6"/><rect x="13.6" y="1" width="2.5" height="8.6"/><rect x="4.6" y="9.6" width="0.7" height="6.4"/><rect x="9.6" y="9.6" width="0.7" height="6.4"/><rect x="14.6" y="9.6" width="0.7" height="6.4"/></g></svg>
</footer>
</div></body></html>
